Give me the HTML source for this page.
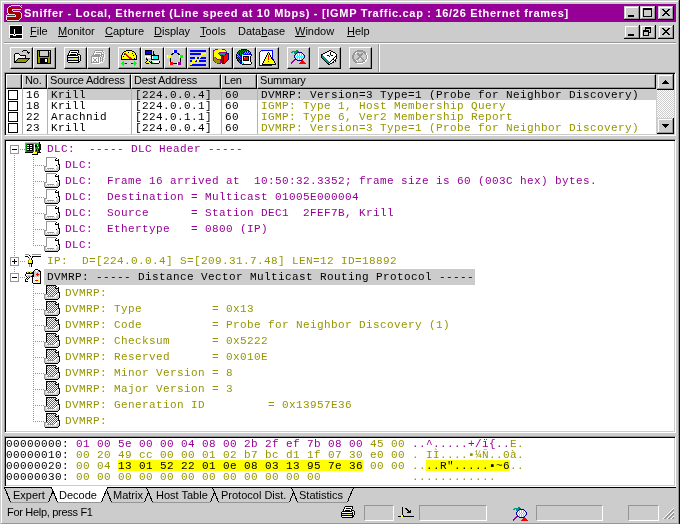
<!DOCTYPE html><html><head><meta charset="utf-8"><style>
*{margin:0;padding:0;box-sizing:border-box}
html,body{width:680px;height:524px;overflow:hidden;background:#cccccc}
body{position:relative;will-change:transform;font-family:"Liberation Sans",sans-serif;font-size:11px;color:#000}
div,svg{position:absolute}
.btn{background:#cccccc;border-top:1px solid #fff;border-left:1px solid #fff;border-right:1px solid #000;border-bottom:1px solid #000;box-shadow:inset -1px -1px 0 #969696}
.wbtn{background:#cccccc;box-shadow:inset -1px -1px 0 #000,inset 1px 1px 0 #cccccc,inset -2px -2px 0 #969696,inset 2px 2px 0 #fff}
.mono{font-family:"Liberation Mono",monospace;font-size:11.67px;white-space:pre}
.menu{top:25px;font-size:11px;white-space:pre}
.u{text-decoration:underline}
.det{font-family:"Liberation Mono",monospace;font-size:11px;letter-spacing:.4px;white-space:pre;line-height:11px;height:11px}
.lst{font-family:"Liberation Mono",monospace;font-size:11px;letter-spacing:.4px;white-space:pre;line-height:11px;height:11px}
.hdr{top:74px;height:15px;background:#cccccc;border-top:1px solid #fff;border-left:1px solid #fff;border-right:1px solid #000;border-bottom:1px solid #000;box-shadow:inset -1px -1px 0 #969696;font-size:11px;line-height:11px;padding-left:2px;letter-spacing:-0.2px;white-space:pre}
</style></head><body>
<div style="position:absolute;left:0px;top:0px;width:680px;height:1px;background:#cccccc"></div>
<div style="position:absolute;left:1px;top:1px;width:677px;height:1px;background:#fff"></div>
<div style="position:absolute;left:1px;top:1px;width:1px;height:522px;background:#fff"></div>
<div style="position:absolute;left:678px;top:1px;width:1px;height:523px;background:#969696"></div>
<div style="position:absolute;left:679px;top:0px;width:1px;height:524px;background:#000"></div>
<div style="position:absolute;left:1px;top:523px;width:678px;height:1px;background:#969696"></div>
<div style="position:absolute;left:4px;top:4px;width:672px;height:18px;background:#960096"></div>
<div style="left:24px;top:4px;height:18px;line-height:18px;color:#fff;font-weight:bold;font-size:11px;letter-spacing:.7px;white-space:pre">Sniffer - Local, Ethernet (Line speed at 10 Mbps) - [IGMP Traffic.cap : 16/26 Ethernet frames]</div>
<div class="wbtn" style="left:624px;top:6px;width:16px;height:14px"></div>
<div class="wbtn" style="left:640px;top:6px;width:16px;height:14px"></div>
<div class="wbtn" style="left:658px;top:6px;width:16px;height:14px"></div>
<div class="menu" style="left:30px"><span class="u">F</span>ile</div>
<div class="menu" style="left:58px"><span class="u">M</span>onitor</div>
<div class="menu" style="left:105px"><span class="u">C</span>apture</div>
<div class="menu" style="left:154px"><span class="u">D</span>isplay</div>
<div class="menu" style="left:200px"><span class="u">T</span>ools</div>
<div class="menu" style="left:238px">Data<span class="u">b</span>ase</div>
<div class="menu" style="left:295px"><span class="u">W</span>indow</div>
<div class="menu" style="left:347px"><span class="u">H</span>elp</div>
<div class="wbtn" style="left:624px;top:25px;width:16px;height:14px"></div>
<div class="wbtn" style="left:640px;top:25px;width:16px;height:14px"></div>
<div class="wbtn" style="left:658px;top:25px;width:16px;height:14px"></div>
<div style="position:absolute;left:4px;top:42px;width:672px;height:1px;background:#969696"></div>
<div style="position:absolute;left:4px;top:43px;width:672px;height:1px;background:#fff"></div>
<div class="btn" style="left:10px;top:47px;width:23px;height:22px"></div>
<div class="btn" style="left:33px;top:47px;width:23px;height:22px"></div>
<div class="btn" style="left:64px;top:47px;width:23px;height:22px"></div>
<div class="btn" style="left:87px;top:47px;width:23px;height:22px"></div>
<div class="btn" style="left:118px;top:47px;width:23px;height:22px"></div>
<div class="btn" style="left:141px;top:47px;width:23px;height:22px"></div>
<div class="btn" style="left:164px;top:47px;width:23px;height:22px"></div>
<div class="btn" style="left:187px;top:47px;width:23px;height:22px"></div>
<div class="btn" style="left:210px;top:47px;width:23px;height:22px"></div>
<div class="btn" style="left:233px;top:47px;width:23px;height:22px"></div>
<div class="btn" style="left:256px;top:47px;width:23px;height:22px"></div>
<div class="btn" style="left:287px;top:47px;width:23px;height:22px"></div>
<div class="btn" style="left:318px;top:47px;width:23px;height:22px"></div>
<div class="btn" style="left:349px;top:47px;width:23px;height:22px"></div>
<div style="position:absolute;left:378px;top:44px;width:1px;height:28px;background:#969696"></div>
<div style="position:absolute;left:379px;top:44px;width:1px;height:28px;background:#fff"></div>
<div style="position:absolute;left:4px;top:72px;width:672px;height:64px;background:#fff;border-top:1px solid #969696;border-left:1px solid #969696;border-bottom:1px solid #fff;border-right:1px solid #fff;box-shadow:inset 1px 1px 0 #000,inset -1px -1px 0 #cccccc"></div>
<div class="hdr" style="left:6px;width:16px"></div>
<div class="hdr" style="left:22px;width:25px">No.</div>
<div class="hdr" style="left:47px;width:84px">Source Address</div>
<div class="hdr" style="left:131px;width:90px">Dest Address</div>
<div class="hdr" style="left:221px;width:36px">Len</div>
<div class="hdr" style="left:257px;width:399px">Summary</div>
<div style="position:absolute;left:48px;top:89px;width:608px;height:11px;background:#cccccc"></div>
<div style="position:absolute;left:8px;top:90px;width:10px;height:10px;border:1px solid #000;background:#fff"></div>
<div class="lst" style="left:26px;top:90px">16</div>
<div class="lst" style="left:51px;top:90px">Krill</div>
<div class="lst" style="left:135px;top:90px">[224.0.0.4]</div>
<div class="lst" style="left:225px;top:90px">60</div>
<div class="lst" style="left:261px;top:90px;color:#000">DVMRP: Version=3 Type=1 (Probe for Neighbor Discovery)</div>
<div style="position:absolute;left:8px;top:101px;width:10px;height:10px;border:1px solid #000;background:#fff"></div>
<div class="lst" style="left:26px;top:101px">18</div>
<div class="lst" style="left:51px;top:101px">Krill</div>
<div class="lst" style="left:135px;top:101px">[224.0.0.1]</div>
<div class="lst" style="left:225px;top:101px">60</div>
<div class="lst" style="left:261px;top:101px;color:#969600">IGMP: Type 1, Host Membership Query</div>
<div style="position:absolute;left:8px;top:112px;width:10px;height:10px;border:1px solid #000;background:#fff"></div>
<div class="lst" style="left:26px;top:112px">22</div>
<div class="lst" style="left:51px;top:112px">Arachnid</div>
<div class="lst" style="left:135px;top:112px">[224.0.1.1]</div>
<div class="lst" style="left:225px;top:112px">60</div>
<div class="lst" style="left:261px;top:112px;color:#969600">IGMP: Type 6, Ver2 Membership Report</div>
<div style="position:absolute;left:8px;top:123px;width:10px;height:10px;border:1px solid #000;background:#fff"></div>
<div class="lst" style="left:26px;top:123px">23</div>
<div class="lst" style="left:51px;top:123px">Krill</div>
<div class="lst" style="left:135px;top:123px">[224.0.0.4]</div>
<div class="lst" style="left:225px;top:123px">60</div>
<div class="lst" style="left:261px;top:123px;color:#969600">DVMRP: Version=3 Type=1 (Probe for Neighbor Discovery)</div>
<div style="position:absolute;left:22px;top:89px;width:1px;height:45px;background:#b2b2b2"></div>
<div style="position:absolute;left:47px;top:89px;width:1px;height:45px;background:#b2b2b2"></div>
<div style="position:absolute;left:131px;top:89px;width:1px;height:45px;background:#b2b2b2"></div>
<div style="position:absolute;left:221px;top:89px;width:1px;height:45px;background:#b2b2b2"></div>
<div style="position:absolute;left:257px;top:89px;width:1px;height:45px;background:#b2b2b2"></div>
<div style="position:absolute;left:656px;top:74px;width:1px;height:60px;background:#cccccc"></div>
<div style="position:absolute;left:657px;top:74px;width:17px;height:60px;background-color:#fff;background-image:linear-gradient(45deg,#cccccc 25%,transparent 25%,transparent 75%,#cccccc 75%),linear-gradient(45deg,#cccccc 25%,transparent 25%,transparent 75%,#cccccc 75%);background-size:2px 2px;background-position:0 0,1px 1px"></div>
<div class="wbtn" style="left:657px;top:74px;width:17px;height:16px"></div>
<div class="wbtn" style="left:657px;top:118px;width:17px;height:16px"></div>
<svg style="left:657px;top:74px" width="17" height="16" shape-rendering="crispEdges"><path d="M8 6h1v1h1v1h1v1h1v1h-7v-1h1v-1h1v-1h1z" fill="#000"/></svg>
<svg style="left:657px;top:118px" width="17" height="16" shape-rendering="crispEdges"><path d="M5 6h7v1h-1v1h-1v1h-1v1h-1v-1h-1v-1h-1v-1h-1z" fill="#000"/></svg>
<div style="position:absolute;left:4px;top:139px;width:672px;height:294px;background:#fff;border-top:1px solid #969696;border-left:1px solid #969696;border-bottom:1px solid #fff;border-right:1px solid #fff;box-shadow:inset 1px 1px 0 #000,inset -1px -1px 0 #cccccc"></div>
<div style="position:absolute;left:14px;top:155px;width:1px;height:1px;background:#969696"></div>
<div style="position:absolute;left:14px;top:157px;width:1px;height:1px;background:#969696"></div>
<div style="position:absolute;left:14px;top:159px;width:1px;height:1px;background:#969696"></div>
<div style="position:absolute;left:14px;top:161px;width:1px;height:1px;background:#969696"></div>
<div style="position:absolute;left:14px;top:163px;width:1px;height:1px;background:#969696"></div>
<div style="position:absolute;left:14px;top:165px;width:1px;height:1px;background:#969696"></div>
<div style="position:absolute;left:14px;top:167px;width:1px;height:1px;background:#969696"></div>
<div style="position:absolute;left:14px;top:169px;width:1px;height:1px;background:#969696"></div>
<div style="position:absolute;left:14px;top:171px;width:1px;height:1px;background:#969696"></div>
<div style="position:absolute;left:14px;top:173px;width:1px;height:1px;background:#969696"></div>
<div style="position:absolute;left:14px;top:175px;width:1px;height:1px;background:#969696"></div>
<div style="position:absolute;left:14px;top:177px;width:1px;height:1px;background:#969696"></div>
<div style="position:absolute;left:14px;top:179px;width:1px;height:1px;background:#969696"></div>
<div style="position:absolute;left:14px;top:181px;width:1px;height:1px;background:#969696"></div>
<div style="position:absolute;left:14px;top:183px;width:1px;height:1px;background:#969696"></div>
<div style="position:absolute;left:14px;top:185px;width:1px;height:1px;background:#969696"></div>
<div style="position:absolute;left:14px;top:187px;width:1px;height:1px;background:#969696"></div>
<div style="position:absolute;left:14px;top:189px;width:1px;height:1px;background:#969696"></div>
<div style="position:absolute;left:14px;top:191px;width:1px;height:1px;background:#969696"></div>
<div style="position:absolute;left:14px;top:193px;width:1px;height:1px;background:#969696"></div>
<div style="position:absolute;left:14px;top:195px;width:1px;height:1px;background:#969696"></div>
<div style="position:absolute;left:14px;top:197px;width:1px;height:1px;background:#969696"></div>
<div style="position:absolute;left:14px;top:199px;width:1px;height:1px;background:#969696"></div>
<div style="position:absolute;left:14px;top:201px;width:1px;height:1px;background:#969696"></div>
<div style="position:absolute;left:14px;top:203px;width:1px;height:1px;background:#969696"></div>
<div style="position:absolute;left:14px;top:205px;width:1px;height:1px;background:#969696"></div>
<div style="position:absolute;left:14px;top:207px;width:1px;height:1px;background:#969696"></div>
<div style="position:absolute;left:14px;top:209px;width:1px;height:1px;background:#969696"></div>
<div style="position:absolute;left:14px;top:211px;width:1px;height:1px;background:#969696"></div>
<div style="position:absolute;left:14px;top:213px;width:1px;height:1px;background:#969696"></div>
<div style="position:absolute;left:14px;top:215px;width:1px;height:1px;background:#969696"></div>
<div style="position:absolute;left:14px;top:217px;width:1px;height:1px;background:#969696"></div>
<div style="position:absolute;left:14px;top:219px;width:1px;height:1px;background:#969696"></div>
<div style="position:absolute;left:14px;top:221px;width:1px;height:1px;background:#969696"></div>
<div style="position:absolute;left:14px;top:223px;width:1px;height:1px;background:#969696"></div>
<div style="position:absolute;left:14px;top:225px;width:1px;height:1px;background:#969696"></div>
<div style="position:absolute;left:14px;top:227px;width:1px;height:1px;background:#969696"></div>
<div style="position:absolute;left:14px;top:229px;width:1px;height:1px;background:#969696"></div>
<div style="position:absolute;left:14px;top:231px;width:1px;height:1px;background:#969696"></div>
<div style="position:absolute;left:14px;top:233px;width:1px;height:1px;background:#969696"></div>
<div style="position:absolute;left:14px;top:235px;width:1px;height:1px;background:#969696"></div>
<div style="position:absolute;left:14px;top:237px;width:1px;height:1px;background:#969696"></div>
<div style="position:absolute;left:14px;top:239px;width:1px;height:1px;background:#969696"></div>
<div style="position:absolute;left:14px;top:241px;width:1px;height:1px;background:#969696"></div>
<div style="position:absolute;left:14px;top:243px;width:1px;height:1px;background:#969696"></div>
<div style="position:absolute;left:14px;top:245px;width:1px;height:1px;background:#969696"></div>
<div style="position:absolute;left:14px;top:247px;width:1px;height:1px;background:#969696"></div>
<div style="position:absolute;left:14px;top:249px;width:1px;height:1px;background:#969696"></div>
<div style="position:absolute;left:14px;top:251px;width:1px;height:1px;background:#969696"></div>
<div style="position:absolute;left:14px;top:253px;width:1px;height:1px;background:#969696"></div>
<div style="position:absolute;left:14px;top:255px;width:1px;height:1px;background:#969696"></div>
<div style="position:absolute;left:14px;top:257px;width:1px;height:1px;background:#969696"></div>
<div style="position:absolute;left:14px;top:259px;width:1px;height:1px;background:#969696"></div>
<div style="position:absolute;left:14px;top:261px;width:1px;height:1px;background:#969696"></div>
<div style="position:absolute;left:14px;top:263px;width:1px;height:1px;background:#969696"></div>
<div style="position:absolute;left:14px;top:265px;width:1px;height:1px;background:#969696"></div>
<div style="position:absolute;left:14px;top:267px;width:1px;height:1px;background:#969696"></div>
<div style="position:absolute;left:14px;top:269px;width:1px;height:1px;background:#969696"></div>
<div style="position:absolute;left:14px;top:271px;width:1px;height:1px;background:#969696"></div>
<div style="position:absolute;left:33px;top:157px;width:1px;height:1px;background:#969696"></div>
<div style="position:absolute;left:33px;top:159px;width:1px;height:1px;background:#969696"></div>
<div style="position:absolute;left:33px;top:161px;width:1px;height:1px;background:#969696"></div>
<div style="position:absolute;left:33px;top:163px;width:1px;height:1px;background:#969696"></div>
<div style="position:absolute;left:33px;top:165px;width:1px;height:1px;background:#969696"></div>
<div style="position:absolute;left:33px;top:167px;width:1px;height:1px;background:#969696"></div>
<div style="position:absolute;left:33px;top:169px;width:1px;height:1px;background:#969696"></div>
<div style="position:absolute;left:33px;top:171px;width:1px;height:1px;background:#969696"></div>
<div style="position:absolute;left:33px;top:173px;width:1px;height:1px;background:#969696"></div>
<div style="position:absolute;left:33px;top:175px;width:1px;height:1px;background:#969696"></div>
<div style="position:absolute;left:33px;top:177px;width:1px;height:1px;background:#969696"></div>
<div style="position:absolute;left:33px;top:179px;width:1px;height:1px;background:#969696"></div>
<div style="position:absolute;left:33px;top:181px;width:1px;height:1px;background:#969696"></div>
<div style="position:absolute;left:33px;top:183px;width:1px;height:1px;background:#969696"></div>
<div style="position:absolute;left:33px;top:185px;width:1px;height:1px;background:#969696"></div>
<div style="position:absolute;left:33px;top:187px;width:1px;height:1px;background:#969696"></div>
<div style="position:absolute;left:33px;top:189px;width:1px;height:1px;background:#969696"></div>
<div style="position:absolute;left:33px;top:191px;width:1px;height:1px;background:#969696"></div>
<div style="position:absolute;left:33px;top:193px;width:1px;height:1px;background:#969696"></div>
<div style="position:absolute;left:33px;top:195px;width:1px;height:1px;background:#969696"></div>
<div style="position:absolute;left:33px;top:197px;width:1px;height:1px;background:#969696"></div>
<div style="position:absolute;left:33px;top:199px;width:1px;height:1px;background:#969696"></div>
<div style="position:absolute;left:33px;top:201px;width:1px;height:1px;background:#969696"></div>
<div style="position:absolute;left:33px;top:203px;width:1px;height:1px;background:#969696"></div>
<div style="position:absolute;left:33px;top:205px;width:1px;height:1px;background:#969696"></div>
<div style="position:absolute;left:33px;top:207px;width:1px;height:1px;background:#969696"></div>
<div style="position:absolute;left:33px;top:209px;width:1px;height:1px;background:#969696"></div>
<div style="position:absolute;left:33px;top:211px;width:1px;height:1px;background:#969696"></div>
<div style="position:absolute;left:33px;top:213px;width:1px;height:1px;background:#969696"></div>
<div style="position:absolute;left:33px;top:215px;width:1px;height:1px;background:#969696"></div>
<div style="position:absolute;left:33px;top:217px;width:1px;height:1px;background:#969696"></div>
<div style="position:absolute;left:33px;top:219px;width:1px;height:1px;background:#969696"></div>
<div style="position:absolute;left:33px;top:221px;width:1px;height:1px;background:#969696"></div>
<div style="position:absolute;left:33px;top:223px;width:1px;height:1px;background:#969696"></div>
<div style="position:absolute;left:33px;top:225px;width:1px;height:1px;background:#969696"></div>
<div style="position:absolute;left:33px;top:227px;width:1px;height:1px;background:#969696"></div>
<div style="position:absolute;left:33px;top:229px;width:1px;height:1px;background:#969696"></div>
<div style="position:absolute;left:33px;top:231px;width:1px;height:1px;background:#969696"></div>
<div style="position:absolute;left:33px;top:233px;width:1px;height:1px;background:#969696"></div>
<div style="position:absolute;left:33px;top:235px;width:1px;height:1px;background:#969696"></div>
<div style="position:absolute;left:33px;top:237px;width:1px;height:1px;background:#969696"></div>
<div style="position:absolute;left:33px;top:239px;width:1px;height:1px;background:#969696"></div>
<div style="position:absolute;left:33px;top:241px;width:1px;height:1px;background:#969696"></div>
<div style="position:absolute;left:33px;top:243px;width:1px;height:1px;background:#969696"></div>
<div style="position:absolute;left:33px;top:245px;width:1px;height:1px;background:#969696"></div>
<div style="position:absolute;left:33px;top:285px;width:1px;height:1px;background:#969696"></div>
<div style="position:absolute;left:33px;top:287px;width:1px;height:1px;background:#969696"></div>
<div style="position:absolute;left:33px;top:289px;width:1px;height:1px;background:#969696"></div>
<div style="position:absolute;left:33px;top:291px;width:1px;height:1px;background:#969696"></div>
<div style="position:absolute;left:33px;top:293px;width:1px;height:1px;background:#969696"></div>
<div style="position:absolute;left:33px;top:295px;width:1px;height:1px;background:#969696"></div>
<div style="position:absolute;left:33px;top:297px;width:1px;height:1px;background:#969696"></div>
<div style="position:absolute;left:33px;top:299px;width:1px;height:1px;background:#969696"></div>
<div style="position:absolute;left:33px;top:301px;width:1px;height:1px;background:#969696"></div>
<div style="position:absolute;left:33px;top:303px;width:1px;height:1px;background:#969696"></div>
<div style="position:absolute;left:33px;top:305px;width:1px;height:1px;background:#969696"></div>
<div style="position:absolute;left:33px;top:307px;width:1px;height:1px;background:#969696"></div>
<div style="position:absolute;left:33px;top:309px;width:1px;height:1px;background:#969696"></div>
<div style="position:absolute;left:33px;top:311px;width:1px;height:1px;background:#969696"></div>
<div style="position:absolute;left:33px;top:313px;width:1px;height:1px;background:#969696"></div>
<div style="position:absolute;left:33px;top:315px;width:1px;height:1px;background:#969696"></div>
<div style="position:absolute;left:33px;top:317px;width:1px;height:1px;background:#969696"></div>
<div style="position:absolute;left:33px;top:319px;width:1px;height:1px;background:#969696"></div>
<div style="position:absolute;left:33px;top:321px;width:1px;height:1px;background:#969696"></div>
<div style="position:absolute;left:33px;top:323px;width:1px;height:1px;background:#969696"></div>
<div style="position:absolute;left:33px;top:325px;width:1px;height:1px;background:#969696"></div>
<div style="position:absolute;left:33px;top:327px;width:1px;height:1px;background:#969696"></div>
<div style="position:absolute;left:33px;top:329px;width:1px;height:1px;background:#969696"></div>
<div style="position:absolute;left:33px;top:331px;width:1px;height:1px;background:#969696"></div>
<div style="position:absolute;left:33px;top:333px;width:1px;height:1px;background:#969696"></div>
<div style="position:absolute;left:33px;top:335px;width:1px;height:1px;background:#969696"></div>
<div style="position:absolute;left:33px;top:337px;width:1px;height:1px;background:#969696"></div>
<div style="position:absolute;left:33px;top:339px;width:1px;height:1px;background:#969696"></div>
<div style="position:absolute;left:33px;top:341px;width:1px;height:1px;background:#969696"></div>
<div style="position:absolute;left:33px;top:343px;width:1px;height:1px;background:#969696"></div>
<div style="position:absolute;left:33px;top:345px;width:1px;height:1px;background:#969696"></div>
<div style="position:absolute;left:33px;top:347px;width:1px;height:1px;background:#969696"></div>
<div style="position:absolute;left:33px;top:349px;width:1px;height:1px;background:#969696"></div>
<div style="position:absolute;left:33px;top:351px;width:1px;height:1px;background:#969696"></div>
<div style="position:absolute;left:33px;top:353px;width:1px;height:1px;background:#969696"></div>
<div style="position:absolute;left:33px;top:355px;width:1px;height:1px;background:#969696"></div>
<div style="position:absolute;left:33px;top:357px;width:1px;height:1px;background:#969696"></div>
<div style="position:absolute;left:33px;top:359px;width:1px;height:1px;background:#969696"></div>
<div style="position:absolute;left:33px;top:361px;width:1px;height:1px;background:#969696"></div>
<div style="position:absolute;left:33px;top:363px;width:1px;height:1px;background:#969696"></div>
<div style="position:absolute;left:33px;top:365px;width:1px;height:1px;background:#969696"></div>
<div style="position:absolute;left:33px;top:367px;width:1px;height:1px;background:#969696"></div>
<div style="position:absolute;left:33px;top:369px;width:1px;height:1px;background:#969696"></div>
<div style="position:absolute;left:33px;top:371px;width:1px;height:1px;background:#969696"></div>
<div style="position:absolute;left:33px;top:373px;width:1px;height:1px;background:#969696"></div>
<div style="position:absolute;left:33px;top:375px;width:1px;height:1px;background:#969696"></div>
<div style="position:absolute;left:33px;top:377px;width:1px;height:1px;background:#969696"></div>
<div style="position:absolute;left:33px;top:379px;width:1px;height:1px;background:#969696"></div>
<div style="position:absolute;left:33px;top:381px;width:1px;height:1px;background:#969696"></div>
<div style="position:absolute;left:33px;top:383px;width:1px;height:1px;background:#969696"></div>
<div style="position:absolute;left:33px;top:385px;width:1px;height:1px;background:#969696"></div>
<div style="position:absolute;left:33px;top:387px;width:1px;height:1px;background:#969696"></div>
<div style="position:absolute;left:33px;top:389px;width:1px;height:1px;background:#969696"></div>
<div style="position:absolute;left:33px;top:391px;width:1px;height:1px;background:#969696"></div>
<div style="position:absolute;left:33px;top:393px;width:1px;height:1px;background:#969696"></div>
<div style="position:absolute;left:33px;top:395px;width:1px;height:1px;background:#969696"></div>
<div style="position:absolute;left:33px;top:397px;width:1px;height:1px;background:#969696"></div>
<div style="position:absolute;left:33px;top:399px;width:1px;height:1px;background:#969696"></div>
<div style="position:absolute;left:33px;top:401px;width:1px;height:1px;background:#969696"></div>
<div style="position:absolute;left:33px;top:403px;width:1px;height:1px;background:#969696"></div>
<div style="position:absolute;left:33px;top:405px;width:1px;height:1px;background:#969696"></div>
<div style="position:absolute;left:33px;top:407px;width:1px;height:1px;background:#969696"></div>
<div style="position:absolute;left:33px;top:409px;width:1px;height:1px;background:#969696"></div>
<div style="position:absolute;left:33px;top:411px;width:1px;height:1px;background:#969696"></div>
<div style="position:absolute;left:33px;top:413px;width:1px;height:1px;background:#969696"></div>
<div style="position:absolute;left:33px;top:415px;width:1px;height:1px;background:#969696"></div>
<div style="position:absolute;left:33px;top:417px;width:1px;height:1px;background:#969696"></div>
<div style="position:absolute;left:33px;top:419px;width:1px;height:1px;background:#969696"></div>
<div style="position:absolute;left:33px;top:421px;width:1px;height:1px;background:#969696"></div>
<div style="position:absolute;left:20px;top:149px;width:1px;height:1px;background:#969696"></div>
<div style="position:absolute;left:22px;top:149px;width:1px;height:1px;background:#969696"></div>
<div style="position:absolute;left:24px;top:149px;width:1px;height:1px;background:#969696"></div>
<div style="position:absolute;left:20px;top:261px;width:1px;height:1px;background:#969696"></div>
<div style="position:absolute;left:22px;top:261px;width:1px;height:1px;background:#969696"></div>
<div style="position:absolute;left:24px;top:261px;width:1px;height:1px;background:#969696"></div>
<div style="position:absolute;left:20px;top:277px;width:1px;height:1px;background:#969696"></div>
<div style="position:absolute;left:22px;top:277px;width:1px;height:1px;background:#969696"></div>
<div style="position:absolute;left:24px;top:277px;width:1px;height:1px;background:#969696"></div>
<div style="position:absolute;left:35px;top:165px;width:1px;height:1px;background:#969696"></div>
<div style="position:absolute;left:37px;top:165px;width:1px;height:1px;background:#969696"></div>
<div style="position:absolute;left:39px;top:165px;width:1px;height:1px;background:#969696"></div>
<div style="position:absolute;left:41px;top:165px;width:1px;height:1px;background:#969696"></div>
<div style="position:absolute;left:43px;top:165px;width:1px;height:1px;background:#969696"></div>
<div style="position:absolute;left:35px;top:181px;width:1px;height:1px;background:#969696"></div>
<div style="position:absolute;left:37px;top:181px;width:1px;height:1px;background:#969696"></div>
<div style="position:absolute;left:39px;top:181px;width:1px;height:1px;background:#969696"></div>
<div style="position:absolute;left:41px;top:181px;width:1px;height:1px;background:#969696"></div>
<div style="position:absolute;left:43px;top:181px;width:1px;height:1px;background:#969696"></div>
<div style="position:absolute;left:35px;top:197px;width:1px;height:1px;background:#969696"></div>
<div style="position:absolute;left:37px;top:197px;width:1px;height:1px;background:#969696"></div>
<div style="position:absolute;left:39px;top:197px;width:1px;height:1px;background:#969696"></div>
<div style="position:absolute;left:41px;top:197px;width:1px;height:1px;background:#969696"></div>
<div style="position:absolute;left:43px;top:197px;width:1px;height:1px;background:#969696"></div>
<div style="position:absolute;left:35px;top:213px;width:1px;height:1px;background:#969696"></div>
<div style="position:absolute;left:37px;top:213px;width:1px;height:1px;background:#969696"></div>
<div style="position:absolute;left:39px;top:213px;width:1px;height:1px;background:#969696"></div>
<div style="position:absolute;left:41px;top:213px;width:1px;height:1px;background:#969696"></div>
<div style="position:absolute;left:43px;top:213px;width:1px;height:1px;background:#969696"></div>
<div style="position:absolute;left:35px;top:229px;width:1px;height:1px;background:#969696"></div>
<div style="position:absolute;left:37px;top:229px;width:1px;height:1px;background:#969696"></div>
<div style="position:absolute;left:39px;top:229px;width:1px;height:1px;background:#969696"></div>
<div style="position:absolute;left:41px;top:229px;width:1px;height:1px;background:#969696"></div>
<div style="position:absolute;left:43px;top:229px;width:1px;height:1px;background:#969696"></div>
<div style="position:absolute;left:35px;top:245px;width:1px;height:1px;background:#969696"></div>
<div style="position:absolute;left:37px;top:245px;width:1px;height:1px;background:#969696"></div>
<div style="position:absolute;left:39px;top:245px;width:1px;height:1px;background:#969696"></div>
<div style="position:absolute;left:41px;top:245px;width:1px;height:1px;background:#969696"></div>
<div style="position:absolute;left:43px;top:245px;width:1px;height:1px;background:#969696"></div>
<div style="position:absolute;left:35px;top:293px;width:1px;height:1px;background:#969696"></div>
<div style="position:absolute;left:37px;top:293px;width:1px;height:1px;background:#969696"></div>
<div style="position:absolute;left:39px;top:293px;width:1px;height:1px;background:#969696"></div>
<div style="position:absolute;left:41px;top:293px;width:1px;height:1px;background:#969696"></div>
<div style="position:absolute;left:43px;top:293px;width:1px;height:1px;background:#969696"></div>
<div style="position:absolute;left:35px;top:309px;width:1px;height:1px;background:#969696"></div>
<div style="position:absolute;left:37px;top:309px;width:1px;height:1px;background:#969696"></div>
<div style="position:absolute;left:39px;top:309px;width:1px;height:1px;background:#969696"></div>
<div style="position:absolute;left:41px;top:309px;width:1px;height:1px;background:#969696"></div>
<div style="position:absolute;left:43px;top:309px;width:1px;height:1px;background:#969696"></div>
<div style="position:absolute;left:35px;top:325px;width:1px;height:1px;background:#969696"></div>
<div style="position:absolute;left:37px;top:325px;width:1px;height:1px;background:#969696"></div>
<div style="position:absolute;left:39px;top:325px;width:1px;height:1px;background:#969696"></div>
<div style="position:absolute;left:41px;top:325px;width:1px;height:1px;background:#969696"></div>
<div style="position:absolute;left:43px;top:325px;width:1px;height:1px;background:#969696"></div>
<div style="position:absolute;left:35px;top:341px;width:1px;height:1px;background:#969696"></div>
<div style="position:absolute;left:37px;top:341px;width:1px;height:1px;background:#969696"></div>
<div style="position:absolute;left:39px;top:341px;width:1px;height:1px;background:#969696"></div>
<div style="position:absolute;left:41px;top:341px;width:1px;height:1px;background:#969696"></div>
<div style="position:absolute;left:43px;top:341px;width:1px;height:1px;background:#969696"></div>
<div style="position:absolute;left:35px;top:357px;width:1px;height:1px;background:#969696"></div>
<div style="position:absolute;left:37px;top:357px;width:1px;height:1px;background:#969696"></div>
<div style="position:absolute;left:39px;top:357px;width:1px;height:1px;background:#969696"></div>
<div style="position:absolute;left:41px;top:357px;width:1px;height:1px;background:#969696"></div>
<div style="position:absolute;left:43px;top:357px;width:1px;height:1px;background:#969696"></div>
<div style="position:absolute;left:35px;top:373px;width:1px;height:1px;background:#969696"></div>
<div style="position:absolute;left:37px;top:373px;width:1px;height:1px;background:#969696"></div>
<div style="position:absolute;left:39px;top:373px;width:1px;height:1px;background:#969696"></div>
<div style="position:absolute;left:41px;top:373px;width:1px;height:1px;background:#969696"></div>
<div style="position:absolute;left:43px;top:373px;width:1px;height:1px;background:#969696"></div>
<div style="position:absolute;left:35px;top:389px;width:1px;height:1px;background:#969696"></div>
<div style="position:absolute;left:37px;top:389px;width:1px;height:1px;background:#969696"></div>
<div style="position:absolute;left:39px;top:389px;width:1px;height:1px;background:#969696"></div>
<div style="position:absolute;left:41px;top:389px;width:1px;height:1px;background:#969696"></div>
<div style="position:absolute;left:43px;top:389px;width:1px;height:1px;background:#969696"></div>
<div style="position:absolute;left:35px;top:405px;width:1px;height:1px;background:#969696"></div>
<div style="position:absolute;left:37px;top:405px;width:1px;height:1px;background:#969696"></div>
<div style="position:absolute;left:39px;top:405px;width:1px;height:1px;background:#969696"></div>
<div style="position:absolute;left:41px;top:405px;width:1px;height:1px;background:#969696"></div>
<div style="position:absolute;left:43px;top:405px;width:1px;height:1px;background:#969696"></div>
<div style="position:absolute;left:35px;top:421px;width:1px;height:1px;background:#969696"></div>
<div style="position:absolute;left:37px;top:421px;width:1px;height:1px;background:#969696"></div>
<div style="position:absolute;left:39px;top:421px;width:1px;height:1px;background:#969696"></div>
<div style="position:absolute;left:41px;top:421px;width:1px;height:1px;background:#969696"></div>
<div style="position:absolute;left:43px;top:421px;width:1px;height:1px;background:#969696"></div>
<div style="position:absolute;left:44px;top:269px;width:431px;height:16px;background:#cccccc"></div>
<div class="det" style="left:47px;top:144px;color:#960096">DLC:  ----- DLC Header -----</div>
<div class="det" style="left:65px;top:160px;color:#960096">DLC:</div>
<svg style="left:43px;top:157px;" width="17" height="15" shape-rendering="crispEdges"><rect x="3" y="0" width="10" height="1" fill="#969696"/><rect x="3" y="1" width="1" height="1" fill="#969696"/><rect x="4" y="1" width="9" height="1" fill="#fff"/><rect x="13" y="1" width="1" height="1" fill="#000"/><rect x="14" y="1" width="1" height="1" fill="#fff"/><rect x="3" y="2" width="1" height="1" fill="#969696"/><rect x="4" y="2" width="8" height="1" fill="#fff"/><rect x="12" y="2" width="1" height="1" fill="#000"/><rect x="13" y="2" width="2" height="1" fill="#fff"/><rect x="15" y="2" width="1" height="1" fill="#000"/><rect x="3" y="3" width="1" height="1" fill="#969696"/><rect x="4" y="3" width="8" height="1" fill="#fff"/><rect x="12" y="3" width="4" height="1" fill="#000"/><rect x="3" y="4" width="1" height="1" fill="#969696"/><rect x="4" y="4" width="11" height="1" fill="#fff"/><rect x="15" y="4" width="1" height="1" fill="#000"/><rect x="3" y="5" width="1" height="1" fill="#969696"/><rect x="4" y="5" width="11" height="1" fill="#fff"/><rect x="15" y="5" width="1" height="1" fill="#000"/><rect x="3" y="6" width="1" height="1" fill="#969696"/><rect x="4" y="6" width="11" height="1" fill="#fff"/><rect x="15" y="6" width="1" height="1" fill="#000"/><rect x="3" y="7" width="1" height="1" fill="#969696"/><rect x="4" y="7" width="11" height="1" fill="#fff"/><rect x="15" y="7" width="2" height="1" fill="#000"/><rect x="0" y="8" width="1" height="1" fill="#969696"/><rect x="3" y="8" width="1" height="1" fill="#969696"/><rect x="4" y="8" width="9" height="1" fill="#fff"/><rect x="13" y="8" width="1" height="1" fill="#000"/><rect x="14" y="8" width="2" height="1" fill="#fff"/><rect x="16" y="8" width="1" height="1" fill="#000"/><rect x="1" y="9" width="3" height="1" fill="#969696"/><rect x="4" y="9" width="10" height="1" fill="#fff"/><rect x="14" y="9" width="1" height="1" fill="#cccccc"/><rect x="15" y="9" width="1" height="1" fill="#fff"/><rect x="16" y="9" width="1" height="1" fill="#000"/><rect x="1" y="10" width="1" height="1" fill="#969696"/><rect x="2" y="10" width="1" height="1" fill="#cccccc"/><rect x="3" y="10" width="11" height="1" fill="#fff"/><rect x="14" y="10" width="2" height="1" fill="#cccccc"/><rect x="16" y="10" width="1" height="1" fill="#000"/><rect x="1" y="11" width="1" height="1" fill="#969696"/><rect x="2" y="11" width="1" height="1" fill="#cccccc"/><rect x="3" y="11" width="1" height="1" fill="#fff"/><rect x="4" y="11" width="7" height="1" fill="#969696"/><rect x="11" y="11" width="2" height="1" fill="#fff"/><rect x="13" y="11" width="3" height="1" fill="#cccccc"/><rect x="16" y="11" width="1" height="1" fill="#000"/><rect x="1" y="12" width="1" height="1" fill="#969696"/><rect x="2" y="12" width="2" height="1" fill="#cccccc"/><rect x="4" y="12" width="1" height="1" fill="#fff"/><rect x="5" y="12" width="1" height="1" fill="#cccccc"/><rect x="6" y="12" width="1" height="1" fill="#fff"/><rect x="7" y="12" width="1" height="1" fill="#cccccc"/><rect x="8" y="12" width="1" height="1" fill="#fff"/><rect x="9" y="12" width="1" height="1" fill="#cccccc"/><rect x="10" y="12" width="1" height="1" fill="#fff"/><rect x="11" y="12" width="1" height="1" fill="#cccccc"/><rect x="12" y="12" width="1" height="1" fill="#fff"/><rect x="13" y="12" width="3" height="1" fill="#cccccc"/><rect x="16" y="12" width="1" height="1" fill="#000"/><rect x="1" y="13" width="1" height="1" fill="#969696"/><rect x="2" y="13" width="13" height="1" fill="#cccccc"/><rect x="15" y="13" width="1" height="1" fill="#000"/><rect x="2" y="14" width="13" height="1" fill="#000"/></svg>
<div class="det" style="left:65px;top:176px;color:#960096">DLC:  Frame 16 arrived at  10:50:32.3352; frame size is 60 (003C hex) bytes.</div>
<svg style="left:43px;top:173px;" width="17" height="15" shape-rendering="crispEdges"><rect x="3" y="0" width="10" height="1" fill="#969696"/><rect x="3" y="1" width="1" height="1" fill="#969696"/><rect x="4" y="1" width="9" height="1" fill="#fff"/><rect x="13" y="1" width="1" height="1" fill="#000"/><rect x="14" y="1" width="1" height="1" fill="#fff"/><rect x="3" y="2" width="1" height="1" fill="#969696"/><rect x="4" y="2" width="8" height="1" fill="#fff"/><rect x="12" y="2" width="1" height="1" fill="#000"/><rect x="13" y="2" width="2" height="1" fill="#fff"/><rect x="15" y="2" width="1" height="1" fill="#000"/><rect x="3" y="3" width="1" height="1" fill="#969696"/><rect x="4" y="3" width="8" height="1" fill="#fff"/><rect x="12" y="3" width="4" height="1" fill="#000"/><rect x="3" y="4" width="1" height="1" fill="#969696"/><rect x="4" y="4" width="11" height="1" fill="#fff"/><rect x="15" y="4" width="1" height="1" fill="#000"/><rect x="3" y="5" width="1" height="1" fill="#969696"/><rect x="4" y="5" width="11" height="1" fill="#fff"/><rect x="15" y="5" width="1" height="1" fill="#000"/><rect x="3" y="6" width="1" height="1" fill="#969696"/><rect x="4" y="6" width="11" height="1" fill="#fff"/><rect x="15" y="6" width="1" height="1" fill="#000"/><rect x="3" y="7" width="1" height="1" fill="#969696"/><rect x="4" y="7" width="11" height="1" fill="#fff"/><rect x="15" y="7" width="2" height="1" fill="#000"/><rect x="0" y="8" width="1" height="1" fill="#969696"/><rect x="3" y="8" width="1" height="1" fill="#969696"/><rect x="4" y="8" width="9" height="1" fill="#fff"/><rect x="13" y="8" width="1" height="1" fill="#000"/><rect x="14" y="8" width="2" height="1" fill="#fff"/><rect x="16" y="8" width="1" height="1" fill="#000"/><rect x="1" y="9" width="3" height="1" fill="#969696"/><rect x="4" y="9" width="10" height="1" fill="#fff"/><rect x="14" y="9" width="1" height="1" fill="#cccccc"/><rect x="15" y="9" width="1" height="1" fill="#fff"/><rect x="16" y="9" width="1" height="1" fill="#000"/><rect x="1" y="10" width="1" height="1" fill="#969696"/><rect x="2" y="10" width="1" height="1" fill="#cccccc"/><rect x="3" y="10" width="11" height="1" fill="#fff"/><rect x="14" y="10" width="2" height="1" fill="#cccccc"/><rect x="16" y="10" width="1" height="1" fill="#000"/><rect x="1" y="11" width="1" height="1" fill="#969696"/><rect x="2" y="11" width="1" height="1" fill="#cccccc"/><rect x="3" y="11" width="1" height="1" fill="#fff"/><rect x="4" y="11" width="7" height="1" fill="#969696"/><rect x="11" y="11" width="2" height="1" fill="#fff"/><rect x="13" y="11" width="3" height="1" fill="#cccccc"/><rect x="16" y="11" width="1" height="1" fill="#000"/><rect x="1" y="12" width="1" height="1" fill="#969696"/><rect x="2" y="12" width="2" height="1" fill="#cccccc"/><rect x="4" y="12" width="1" height="1" fill="#fff"/><rect x="5" y="12" width="1" height="1" fill="#cccccc"/><rect x="6" y="12" width="1" height="1" fill="#fff"/><rect x="7" y="12" width="1" height="1" fill="#cccccc"/><rect x="8" y="12" width="1" height="1" fill="#fff"/><rect x="9" y="12" width="1" height="1" fill="#cccccc"/><rect x="10" y="12" width="1" height="1" fill="#fff"/><rect x="11" y="12" width="1" height="1" fill="#cccccc"/><rect x="12" y="12" width="1" height="1" fill="#fff"/><rect x="13" y="12" width="3" height="1" fill="#cccccc"/><rect x="16" y="12" width="1" height="1" fill="#000"/><rect x="1" y="13" width="1" height="1" fill="#969696"/><rect x="2" y="13" width="13" height="1" fill="#cccccc"/><rect x="15" y="13" width="1" height="1" fill="#000"/><rect x="2" y="14" width="13" height="1" fill="#000"/></svg>
<div class="det" style="left:65px;top:192px;color:#960096">DLC:  Destination = Multicast 01005E000004</div>
<svg style="left:43px;top:189px;" width="17" height="15" shape-rendering="crispEdges"><rect x="3" y="0" width="10" height="1" fill="#969696"/><rect x="3" y="1" width="1" height="1" fill="#969696"/><rect x="4" y="1" width="9" height="1" fill="#fff"/><rect x="13" y="1" width="1" height="1" fill="#000"/><rect x="14" y="1" width="1" height="1" fill="#fff"/><rect x="3" y="2" width="1" height="1" fill="#969696"/><rect x="4" y="2" width="8" height="1" fill="#fff"/><rect x="12" y="2" width="1" height="1" fill="#000"/><rect x="13" y="2" width="2" height="1" fill="#fff"/><rect x="15" y="2" width="1" height="1" fill="#000"/><rect x="3" y="3" width="1" height="1" fill="#969696"/><rect x="4" y="3" width="8" height="1" fill="#fff"/><rect x="12" y="3" width="4" height="1" fill="#000"/><rect x="3" y="4" width="1" height="1" fill="#969696"/><rect x="4" y="4" width="11" height="1" fill="#fff"/><rect x="15" y="4" width="1" height="1" fill="#000"/><rect x="3" y="5" width="1" height="1" fill="#969696"/><rect x="4" y="5" width="11" height="1" fill="#fff"/><rect x="15" y="5" width="1" height="1" fill="#000"/><rect x="3" y="6" width="1" height="1" fill="#969696"/><rect x="4" y="6" width="11" height="1" fill="#fff"/><rect x="15" y="6" width="1" height="1" fill="#000"/><rect x="3" y="7" width="1" height="1" fill="#969696"/><rect x="4" y="7" width="11" height="1" fill="#fff"/><rect x="15" y="7" width="2" height="1" fill="#000"/><rect x="0" y="8" width="1" height="1" fill="#969696"/><rect x="3" y="8" width="1" height="1" fill="#969696"/><rect x="4" y="8" width="9" height="1" fill="#fff"/><rect x="13" y="8" width="1" height="1" fill="#000"/><rect x="14" y="8" width="2" height="1" fill="#fff"/><rect x="16" y="8" width="1" height="1" fill="#000"/><rect x="1" y="9" width="3" height="1" fill="#969696"/><rect x="4" y="9" width="10" height="1" fill="#fff"/><rect x="14" y="9" width="1" height="1" fill="#cccccc"/><rect x="15" y="9" width="1" height="1" fill="#fff"/><rect x="16" y="9" width="1" height="1" fill="#000"/><rect x="1" y="10" width="1" height="1" fill="#969696"/><rect x="2" y="10" width="1" height="1" fill="#cccccc"/><rect x="3" y="10" width="11" height="1" fill="#fff"/><rect x="14" y="10" width="2" height="1" fill="#cccccc"/><rect x="16" y="10" width="1" height="1" fill="#000"/><rect x="1" y="11" width="1" height="1" fill="#969696"/><rect x="2" y="11" width="1" height="1" fill="#cccccc"/><rect x="3" y="11" width="1" height="1" fill="#fff"/><rect x="4" y="11" width="7" height="1" fill="#969696"/><rect x="11" y="11" width="2" height="1" fill="#fff"/><rect x="13" y="11" width="3" height="1" fill="#cccccc"/><rect x="16" y="11" width="1" height="1" fill="#000"/><rect x="1" y="12" width="1" height="1" fill="#969696"/><rect x="2" y="12" width="2" height="1" fill="#cccccc"/><rect x="4" y="12" width="1" height="1" fill="#fff"/><rect x="5" y="12" width="1" height="1" fill="#cccccc"/><rect x="6" y="12" width="1" height="1" fill="#fff"/><rect x="7" y="12" width="1" height="1" fill="#cccccc"/><rect x="8" y="12" width="1" height="1" fill="#fff"/><rect x="9" y="12" width="1" height="1" fill="#cccccc"/><rect x="10" y="12" width="1" height="1" fill="#fff"/><rect x="11" y="12" width="1" height="1" fill="#cccccc"/><rect x="12" y="12" width="1" height="1" fill="#fff"/><rect x="13" y="12" width="3" height="1" fill="#cccccc"/><rect x="16" y="12" width="1" height="1" fill="#000"/><rect x="1" y="13" width="1" height="1" fill="#969696"/><rect x="2" y="13" width="13" height="1" fill="#cccccc"/><rect x="15" y="13" width="1" height="1" fill="#000"/><rect x="2" y="14" width="13" height="1" fill="#000"/></svg>
<div class="det" style="left:65px;top:208px;color:#960096">DLC:  Source      = Station DEC1  2FEF7B, Krill</div>
<svg style="left:43px;top:205px;" width="17" height="15" shape-rendering="crispEdges"><rect x="3" y="0" width="10" height="1" fill="#969696"/><rect x="3" y="1" width="1" height="1" fill="#969696"/><rect x="4" y="1" width="9" height="1" fill="#fff"/><rect x="13" y="1" width="1" height="1" fill="#000"/><rect x="14" y="1" width="1" height="1" fill="#fff"/><rect x="3" y="2" width="1" height="1" fill="#969696"/><rect x="4" y="2" width="8" height="1" fill="#fff"/><rect x="12" y="2" width="1" height="1" fill="#000"/><rect x="13" y="2" width="2" height="1" fill="#fff"/><rect x="15" y="2" width="1" height="1" fill="#000"/><rect x="3" y="3" width="1" height="1" fill="#969696"/><rect x="4" y="3" width="8" height="1" fill="#fff"/><rect x="12" y="3" width="4" height="1" fill="#000"/><rect x="3" y="4" width="1" height="1" fill="#969696"/><rect x="4" y="4" width="11" height="1" fill="#fff"/><rect x="15" y="4" width="1" height="1" fill="#000"/><rect x="3" y="5" width="1" height="1" fill="#969696"/><rect x="4" y="5" width="11" height="1" fill="#fff"/><rect x="15" y="5" width="1" height="1" fill="#000"/><rect x="3" y="6" width="1" height="1" fill="#969696"/><rect x="4" y="6" width="11" height="1" fill="#fff"/><rect x="15" y="6" width="1" height="1" fill="#000"/><rect x="3" y="7" width="1" height="1" fill="#969696"/><rect x="4" y="7" width="11" height="1" fill="#fff"/><rect x="15" y="7" width="2" height="1" fill="#000"/><rect x="0" y="8" width="1" height="1" fill="#969696"/><rect x="3" y="8" width="1" height="1" fill="#969696"/><rect x="4" y="8" width="9" height="1" fill="#fff"/><rect x="13" y="8" width="1" height="1" fill="#000"/><rect x="14" y="8" width="2" height="1" fill="#fff"/><rect x="16" y="8" width="1" height="1" fill="#000"/><rect x="1" y="9" width="3" height="1" fill="#969696"/><rect x="4" y="9" width="10" height="1" fill="#fff"/><rect x="14" y="9" width="1" height="1" fill="#cccccc"/><rect x="15" y="9" width="1" height="1" fill="#fff"/><rect x="16" y="9" width="1" height="1" fill="#000"/><rect x="1" y="10" width="1" height="1" fill="#969696"/><rect x="2" y="10" width="1" height="1" fill="#cccccc"/><rect x="3" y="10" width="11" height="1" fill="#fff"/><rect x="14" y="10" width="2" height="1" fill="#cccccc"/><rect x="16" y="10" width="1" height="1" fill="#000"/><rect x="1" y="11" width="1" height="1" fill="#969696"/><rect x="2" y="11" width="1" height="1" fill="#cccccc"/><rect x="3" y="11" width="1" height="1" fill="#fff"/><rect x="4" y="11" width="7" height="1" fill="#969696"/><rect x="11" y="11" width="2" height="1" fill="#fff"/><rect x="13" y="11" width="3" height="1" fill="#cccccc"/><rect x="16" y="11" width="1" height="1" fill="#000"/><rect x="1" y="12" width="1" height="1" fill="#969696"/><rect x="2" y="12" width="2" height="1" fill="#cccccc"/><rect x="4" y="12" width="1" height="1" fill="#fff"/><rect x="5" y="12" width="1" height="1" fill="#cccccc"/><rect x="6" y="12" width="1" height="1" fill="#fff"/><rect x="7" y="12" width="1" height="1" fill="#cccccc"/><rect x="8" y="12" width="1" height="1" fill="#fff"/><rect x="9" y="12" width="1" height="1" fill="#cccccc"/><rect x="10" y="12" width="1" height="1" fill="#fff"/><rect x="11" y="12" width="1" height="1" fill="#cccccc"/><rect x="12" y="12" width="1" height="1" fill="#fff"/><rect x="13" y="12" width="3" height="1" fill="#cccccc"/><rect x="16" y="12" width="1" height="1" fill="#000"/><rect x="1" y="13" width="1" height="1" fill="#969696"/><rect x="2" y="13" width="13" height="1" fill="#cccccc"/><rect x="15" y="13" width="1" height="1" fill="#000"/><rect x="2" y="14" width="13" height="1" fill="#000"/></svg>
<div class="det" style="left:65px;top:224px;color:#960096">DLC:  Ethertype   = 0800 (IP)</div>
<svg style="left:43px;top:221px;" width="17" height="15" shape-rendering="crispEdges"><rect x="3" y="0" width="10" height="1" fill="#969696"/><rect x="3" y="1" width="1" height="1" fill="#969696"/><rect x="4" y="1" width="9" height="1" fill="#fff"/><rect x="13" y="1" width="1" height="1" fill="#000"/><rect x="14" y="1" width="1" height="1" fill="#fff"/><rect x="3" y="2" width="1" height="1" fill="#969696"/><rect x="4" y="2" width="8" height="1" fill="#fff"/><rect x="12" y="2" width="1" height="1" fill="#000"/><rect x="13" y="2" width="2" height="1" fill="#fff"/><rect x="15" y="2" width="1" height="1" fill="#000"/><rect x="3" y="3" width="1" height="1" fill="#969696"/><rect x="4" y="3" width="8" height="1" fill="#fff"/><rect x="12" y="3" width="4" height="1" fill="#000"/><rect x="3" y="4" width="1" height="1" fill="#969696"/><rect x="4" y="4" width="11" height="1" fill="#fff"/><rect x="15" y="4" width="1" height="1" fill="#000"/><rect x="3" y="5" width="1" height="1" fill="#969696"/><rect x="4" y="5" width="11" height="1" fill="#fff"/><rect x="15" y="5" width="1" height="1" fill="#000"/><rect x="3" y="6" width="1" height="1" fill="#969696"/><rect x="4" y="6" width="11" height="1" fill="#fff"/><rect x="15" y="6" width="1" height="1" fill="#000"/><rect x="3" y="7" width="1" height="1" fill="#969696"/><rect x="4" y="7" width="11" height="1" fill="#fff"/><rect x="15" y="7" width="2" height="1" fill="#000"/><rect x="0" y="8" width="1" height="1" fill="#969696"/><rect x="3" y="8" width="1" height="1" fill="#969696"/><rect x="4" y="8" width="9" height="1" fill="#fff"/><rect x="13" y="8" width="1" height="1" fill="#000"/><rect x="14" y="8" width="2" height="1" fill="#fff"/><rect x="16" y="8" width="1" height="1" fill="#000"/><rect x="1" y="9" width="3" height="1" fill="#969696"/><rect x="4" y="9" width="10" height="1" fill="#fff"/><rect x="14" y="9" width="1" height="1" fill="#cccccc"/><rect x="15" y="9" width="1" height="1" fill="#fff"/><rect x="16" y="9" width="1" height="1" fill="#000"/><rect x="1" y="10" width="1" height="1" fill="#969696"/><rect x="2" y="10" width="1" height="1" fill="#cccccc"/><rect x="3" y="10" width="11" height="1" fill="#fff"/><rect x="14" y="10" width="2" height="1" fill="#cccccc"/><rect x="16" y="10" width="1" height="1" fill="#000"/><rect x="1" y="11" width="1" height="1" fill="#969696"/><rect x="2" y="11" width="1" height="1" fill="#cccccc"/><rect x="3" y="11" width="1" height="1" fill="#fff"/><rect x="4" y="11" width="7" height="1" fill="#969696"/><rect x="11" y="11" width="2" height="1" fill="#fff"/><rect x="13" y="11" width="3" height="1" fill="#cccccc"/><rect x="16" y="11" width="1" height="1" fill="#000"/><rect x="1" y="12" width="1" height="1" fill="#969696"/><rect x="2" y="12" width="2" height="1" fill="#cccccc"/><rect x="4" y="12" width="1" height="1" fill="#fff"/><rect x="5" y="12" width="1" height="1" fill="#cccccc"/><rect x="6" y="12" width="1" height="1" fill="#fff"/><rect x="7" y="12" width="1" height="1" fill="#cccccc"/><rect x="8" y="12" width="1" height="1" fill="#fff"/><rect x="9" y="12" width="1" height="1" fill="#cccccc"/><rect x="10" y="12" width="1" height="1" fill="#fff"/><rect x="11" y="12" width="1" height="1" fill="#cccccc"/><rect x="12" y="12" width="1" height="1" fill="#fff"/><rect x="13" y="12" width="3" height="1" fill="#cccccc"/><rect x="16" y="12" width="1" height="1" fill="#000"/><rect x="1" y="13" width="1" height="1" fill="#969696"/><rect x="2" y="13" width="13" height="1" fill="#cccccc"/><rect x="15" y="13" width="1" height="1" fill="#000"/><rect x="2" y="14" width="13" height="1" fill="#000"/></svg>
<div class="det" style="left:65px;top:240px;color:#960096">DLC:</div>
<svg style="left:43px;top:237px;" width="17" height="15" shape-rendering="crispEdges"><rect x="3" y="0" width="10" height="1" fill="#969696"/><rect x="3" y="1" width="1" height="1" fill="#969696"/><rect x="4" y="1" width="9" height="1" fill="#fff"/><rect x="13" y="1" width="1" height="1" fill="#000"/><rect x="14" y="1" width="1" height="1" fill="#fff"/><rect x="3" y="2" width="1" height="1" fill="#969696"/><rect x="4" y="2" width="8" height="1" fill="#fff"/><rect x="12" y="2" width="1" height="1" fill="#000"/><rect x="13" y="2" width="2" height="1" fill="#fff"/><rect x="15" y="2" width="1" height="1" fill="#000"/><rect x="3" y="3" width="1" height="1" fill="#969696"/><rect x="4" y="3" width="8" height="1" fill="#fff"/><rect x="12" y="3" width="4" height="1" fill="#000"/><rect x="3" y="4" width="1" height="1" fill="#969696"/><rect x="4" y="4" width="11" height="1" fill="#fff"/><rect x="15" y="4" width="1" height="1" fill="#000"/><rect x="3" y="5" width="1" height="1" fill="#969696"/><rect x="4" y="5" width="11" height="1" fill="#fff"/><rect x="15" y="5" width="1" height="1" fill="#000"/><rect x="3" y="6" width="1" height="1" fill="#969696"/><rect x="4" y="6" width="11" height="1" fill="#fff"/><rect x="15" y="6" width="1" height="1" fill="#000"/><rect x="3" y="7" width="1" height="1" fill="#969696"/><rect x="4" y="7" width="11" height="1" fill="#fff"/><rect x="15" y="7" width="2" height="1" fill="#000"/><rect x="0" y="8" width="1" height="1" fill="#969696"/><rect x="3" y="8" width="1" height="1" fill="#969696"/><rect x="4" y="8" width="9" height="1" fill="#fff"/><rect x="13" y="8" width="1" height="1" fill="#000"/><rect x="14" y="8" width="2" height="1" fill="#fff"/><rect x="16" y="8" width="1" height="1" fill="#000"/><rect x="1" y="9" width="3" height="1" fill="#969696"/><rect x="4" y="9" width="10" height="1" fill="#fff"/><rect x="14" y="9" width="1" height="1" fill="#cccccc"/><rect x="15" y="9" width="1" height="1" fill="#fff"/><rect x="16" y="9" width="1" height="1" fill="#000"/><rect x="1" y="10" width="1" height="1" fill="#969696"/><rect x="2" y="10" width="1" height="1" fill="#cccccc"/><rect x="3" y="10" width="11" height="1" fill="#fff"/><rect x="14" y="10" width="2" height="1" fill="#cccccc"/><rect x="16" y="10" width="1" height="1" fill="#000"/><rect x="1" y="11" width="1" height="1" fill="#969696"/><rect x="2" y="11" width="1" height="1" fill="#cccccc"/><rect x="3" y="11" width="1" height="1" fill="#fff"/><rect x="4" y="11" width="7" height="1" fill="#969696"/><rect x="11" y="11" width="2" height="1" fill="#fff"/><rect x="13" y="11" width="3" height="1" fill="#cccccc"/><rect x="16" y="11" width="1" height="1" fill="#000"/><rect x="1" y="12" width="1" height="1" fill="#969696"/><rect x="2" y="12" width="2" height="1" fill="#cccccc"/><rect x="4" y="12" width="1" height="1" fill="#fff"/><rect x="5" y="12" width="1" height="1" fill="#cccccc"/><rect x="6" y="12" width="1" height="1" fill="#fff"/><rect x="7" y="12" width="1" height="1" fill="#cccccc"/><rect x="8" y="12" width="1" height="1" fill="#fff"/><rect x="9" y="12" width="1" height="1" fill="#cccccc"/><rect x="10" y="12" width="1" height="1" fill="#fff"/><rect x="11" y="12" width="1" height="1" fill="#cccccc"/><rect x="12" y="12" width="1" height="1" fill="#fff"/><rect x="13" y="12" width="3" height="1" fill="#cccccc"/><rect x="16" y="12" width="1" height="1" fill="#000"/><rect x="1" y="13" width="1" height="1" fill="#969696"/><rect x="2" y="13" width="13" height="1" fill="#cccccc"/><rect x="15" y="13" width="1" height="1" fill="#000"/><rect x="2" y="14" width="13" height="1" fill="#000"/></svg>
<div class="det" style="left:47px;top:256px;color:#969600">IP:  D=[224.0.0.4] S=[209.31.7.48] LEN=12 ID=18892</div>
<div class="det" style="left:47px;top:272px;color:#000">DVMRP: ----- Distance Vector Multicast Routing Protocol -----</div>
<div class="det" style="left:65px;top:288px;color:#969600">DVMRP:</div>
<svg style="left:43px;top:285px;" width="17" height="15" shape-rendering="crispEdges"><rect x="3" y="0" width="10" height="1" fill="#000"/><rect x="3" y="1" width="1" height="1" fill="#000"/><rect x="4" y="1" width="1" height="1" fill="#ff00ff"/><rect x="5" y="1" width="1" height="1" fill="#fff"/><rect x="6" y="1" width="1" height="1" fill="#ff00ff"/><rect x="7" y="1" width="1" height="1" fill="#fff"/><rect x="8" y="1" width="1" height="1" fill="#ff00ff"/><rect x="9" y="1" width="1" height="1" fill="#fff"/><rect x="10" y="1" width="1" height="1" fill="#ff00ff"/><rect x="11" y="1" width="1" height="1" fill="#fff"/><rect x="12" y="1" width="1" height="1" fill="#ff00ff"/><rect x="13" y="1" width="1" height="1" fill="#000"/><rect x="14" y="1" width="1" height="1" fill="#fff"/><rect x="3" y="2" width="1" height="1" fill="#000"/><rect x="4" y="2" width="1" height="1" fill="#fff"/><rect x="5" y="2" width="1" height="1" fill="#ff00ff"/><rect x="6" y="2" width="1" height="1" fill="#fff"/><rect x="7" y="2" width="1" height="1" fill="#ff00ff"/><rect x="8" y="2" width="1" height="1" fill="#fff"/><rect x="9" y="2" width="1" height="1" fill="#ff00ff"/><rect x="10" y="2" width="1" height="1" fill="#fff"/><rect x="11" y="2" width="1" height="1" fill="#ff00ff"/><rect x="12" y="2" width="1" height="1" fill="#000"/><rect x="13" y="2" width="2" height="1" fill="#fff"/><rect x="15" y="2" width="1" height="1" fill="#000"/><rect x="3" y="3" width="1" height="1" fill="#000"/><rect x="4" y="3" width="1" height="1" fill="#ff00ff"/><rect x="5" y="3" width="1" height="1" fill="#fff"/><rect x="6" y="3" width="1" height="1" fill="#ff00ff"/><rect x="7" y="3" width="1" height="1" fill="#fff"/><rect x="8" y="3" width="1" height="1" fill="#ff00ff"/><rect x="9" y="3" width="1" height="1" fill="#fff"/><rect x="10" y="3" width="1" height="1" fill="#ff00ff"/><rect x="11" y="3" width="1" height="1" fill="#fff"/><rect x="12" y="3" width="4" height="1" fill="#000"/><rect x="3" y="4" width="1" height="1" fill="#000"/><rect x="4" y="4" width="1" height="1" fill="#fff"/><rect x="5" y="4" width="1" height="1" fill="#ff00ff"/><rect x="6" y="4" width="1" height="1" fill="#fff"/><rect x="7" y="4" width="1" height="1" fill="#ff00ff"/><rect x="8" y="4" width="1" height="1" fill="#fff"/><rect x="9" y="4" width="1" height="1" fill="#ff00ff"/><rect x="10" y="4" width="1" height="1" fill="#fff"/><rect x="11" y="4" width="1" height="1" fill="#ff00ff"/><rect x="12" y="4" width="1" height="1" fill="#fff"/><rect x="13" y="4" width="1" height="1" fill="#ff00ff"/><rect x="14" y="4" width="1" height="1" fill="#fff"/><rect x="15" y="4" width="1" height="1" fill="#000"/><rect x="3" y="5" width="1" height="1" fill="#000"/><rect x="4" y="5" width="1" height="1" fill="#ff00ff"/><rect x="5" y="5" width="1" height="1" fill="#fff"/><rect x="6" y="5" width="1" height="1" fill="#ff00ff"/><rect x="7" y="5" width="1" height="1" fill="#fff"/><rect x="8" y="5" width="1" height="1" fill="#ff00ff"/><rect x="9" y="5" width="1" height="1" fill="#fff"/><rect x="10" y="5" width="1" height="1" fill="#ff00ff"/><rect x="11" y="5" width="1" height="1" fill="#fff"/><rect x="12" y="5" width="1" height="1" fill="#ff00ff"/><rect x="13" y="5" width="1" height="1" fill="#fff"/><rect x="14" y="5" width="1" height="1" fill="#ff00ff"/><rect x="15" y="5" width="1" height="1" fill="#000"/><rect x="3" y="6" width="1" height="1" fill="#000"/><rect x="4" y="6" width="1" height="1" fill="#fff"/><rect x="5" y="6" width="1" height="1" fill="#ff00ff"/><rect x="6" y="6" width="1" height="1" fill="#fff"/><rect x="7" y="6" width="1" height="1" fill="#ff00ff"/><rect x="8" y="6" width="1" height="1" fill="#fff"/><rect x="9" y="6" width="1" height="1" fill="#ff00ff"/><rect x="10" y="6" width="1" height="1" fill="#fff"/><rect x="11" y="6" width="1" height="1" fill="#ff00ff"/><rect x="12" y="6" width="1" height="1" fill="#fff"/><rect x="13" y="6" width="1" height="1" fill="#ff00ff"/><rect x="14" y="6" width="1" height="1" fill="#fff"/><rect x="15" y="6" width="1" height="1" fill="#000"/><rect x="3" y="7" width="1" height="1" fill="#000"/><rect x="4" y="7" width="1" height="1" fill="#ff00ff"/><rect x="5" y="7" width="1" height="1" fill="#fff"/><rect x="6" y="7" width="1" height="1" fill="#ff00ff"/><rect x="7" y="7" width="1" height="1" fill="#fff"/><rect x="8" y="7" width="1" height="1" fill="#ff00ff"/><rect x="9" y="7" width="1" height="1" fill="#fff"/><rect x="10" y="7" width="1" height="1" fill="#ff00ff"/><rect x="11" y="7" width="1" height="1" fill="#fff"/><rect x="12" y="7" width="1" height="1" fill="#ff00ff"/><rect x="13" y="7" width="1" height="1" fill="#fff"/><rect x="14" y="7" width="1" height="1" fill="#ff00ff"/><rect x="15" y="7" width="2" height="1" fill="#000"/><rect x="0" y="8" width="1" height="1" fill="#969696"/><rect x="3" y="8" width="1" height="1" fill="#000"/><rect x="4" y="8" width="1" height="1" fill="#fff"/><rect x="5" y="8" width="1" height="1" fill="#ff00ff"/><rect x="6" y="8" width="1" height="1" fill="#fff"/><rect x="7" y="8" width="1" height="1" fill="#ff00ff"/><rect x="8" y="8" width="1" height="1" fill="#fff"/><rect x="9" y="8" width="1" height="1" fill="#ff00ff"/><rect x="10" y="8" width="1" height="1" fill="#fff"/><rect x="11" y="8" width="1" height="1" fill="#ff00ff"/><rect x="12" y="8" width="1" height="1" fill="#fff"/><rect x="13" y="8" width="1" height="1" fill="#000"/><rect x="14" y="8" width="2" height="1" fill="#fff"/><rect x="16" y="8" width="1" height="1" fill="#000"/><rect x="1" y="9" width="3" height="1" fill="#969696"/><rect x="4" y="9" width="1" height="1" fill="#ff00ff"/><rect x="5" y="9" width="1" height="1" fill="#fff"/><rect x="6" y="9" width="1" height="1" fill="#ff00ff"/><rect x="7" y="9" width="1" height="1" fill="#fff"/><rect x="8" y="9" width="1" height="1" fill="#ff00ff"/><rect x="9" y="9" width="1" height="1" fill="#fff"/><rect x="10" y="9" width="1" height="1" fill="#ff00ff"/><rect x="11" y="9" width="1" height="1" fill="#fff"/><rect x="12" y="9" width="1" height="1" fill="#ff00ff"/><rect x="13" y="9" width="1" height="1" fill="#fff"/><rect x="14" y="9" width="1" height="1" fill="#cccccc"/><rect x="15" y="9" width="1" height="1" fill="#fff"/><rect x="16" y="9" width="1" height="1" fill="#000"/><rect x="1" y="10" width="1" height="1" fill="#969696"/><rect x="2" y="10" width="1" height="1" fill="#cccccc"/><rect x="3" y="10" width="2" height="1" fill="#fff"/><rect x="5" y="10" width="1" height="1" fill="#ff00ff"/><rect x="6" y="10" width="1" height="1" fill="#fff"/><rect x="7" y="10" width="1" height="1" fill="#ff00ff"/><rect x="8" y="10" width="1" height="1" fill="#fff"/><rect x="9" y="10" width="1" height="1" fill="#ff00ff"/><rect x="10" y="10" width="1" height="1" fill="#fff"/><rect x="11" y="10" width="1" height="1" fill="#ff00ff"/><rect x="12" y="10" width="2" height="1" fill="#fff"/><rect x="14" y="10" width="2" height="1" fill="#cccccc"/><rect x="16" y="10" width="1" height="1" fill="#000"/><rect x="1" y="11" width="1" height="1" fill="#969696"/><rect x="2" y="11" width="1" height="1" fill="#cccccc"/><rect x="3" y="11" width="1" height="1" fill="#fff"/><rect x="4" y="11" width="7" height="1" fill="#969696"/><rect x="11" y="11" width="2" height="1" fill="#fff"/><rect x="13" y="11" width="3" height="1" fill="#cccccc"/><rect x="16" y="11" width="1" height="1" fill="#000"/><rect x="1" y="12" width="1" height="1" fill="#969696"/><rect x="2" y="12" width="2" height="1" fill="#cccccc"/><rect x="4" y="12" width="1" height="1" fill="#fff"/><rect x="5" y="12" width="1" height="1" fill="#cccccc"/><rect x="6" y="12" width="1" height="1" fill="#fff"/><rect x="7" y="12" width="1" height="1" fill="#cccccc"/><rect x="8" y="12" width="1" height="1" fill="#fff"/><rect x="9" y="12" width="1" height="1" fill="#cccccc"/><rect x="10" y="12" width="1" height="1" fill="#fff"/><rect x="11" y="12" width="1" height="1" fill="#cccccc"/><rect x="12" y="12" width="1" height="1" fill="#fff"/><rect x="13" y="12" width="3" height="1" fill="#cccccc"/><rect x="16" y="12" width="1" height="1" fill="#000"/><rect x="1" y="13" width="1" height="1" fill="#969696"/><rect x="2" y="13" width="13" height="1" fill="#cccccc"/><rect x="15" y="13" width="1" height="1" fill="#000"/><rect x="2" y="14" width="13" height="1" fill="#000"/></svg>
<div class="det" style="left:65px;top:304px;color:#969600">DVMRP: Type          = 0x13</div>
<svg style="left:43px;top:301px;" width="17" height="15" shape-rendering="crispEdges"><rect x="3" y="0" width="10" height="1" fill="#000"/><rect x="3" y="1" width="1" height="1" fill="#000"/><rect x="4" y="1" width="1" height="1" fill="#ff00ff"/><rect x="5" y="1" width="1" height="1" fill="#fff"/><rect x="6" y="1" width="1" height="1" fill="#ff00ff"/><rect x="7" y="1" width="1" height="1" fill="#fff"/><rect x="8" y="1" width="1" height="1" fill="#ff00ff"/><rect x="9" y="1" width="1" height="1" fill="#fff"/><rect x="10" y="1" width="1" height="1" fill="#ff00ff"/><rect x="11" y="1" width="1" height="1" fill="#fff"/><rect x="12" y="1" width="1" height="1" fill="#ff00ff"/><rect x="13" y="1" width="1" height="1" fill="#000"/><rect x="14" y="1" width="1" height="1" fill="#fff"/><rect x="3" y="2" width="1" height="1" fill="#000"/><rect x="4" y="2" width="1" height="1" fill="#fff"/><rect x="5" y="2" width="1" height="1" fill="#ff00ff"/><rect x="6" y="2" width="1" height="1" fill="#fff"/><rect x="7" y="2" width="1" height="1" fill="#ff00ff"/><rect x="8" y="2" width="1" height="1" fill="#fff"/><rect x="9" y="2" width="1" height="1" fill="#ff00ff"/><rect x="10" y="2" width="1" height="1" fill="#fff"/><rect x="11" y="2" width="1" height="1" fill="#ff00ff"/><rect x="12" y="2" width="1" height="1" fill="#000"/><rect x="13" y="2" width="2" height="1" fill="#fff"/><rect x="15" y="2" width="1" height="1" fill="#000"/><rect x="3" y="3" width="1" height="1" fill="#000"/><rect x="4" y="3" width="1" height="1" fill="#ff00ff"/><rect x="5" y="3" width="1" height="1" fill="#fff"/><rect x="6" y="3" width="1" height="1" fill="#ff00ff"/><rect x="7" y="3" width="1" height="1" fill="#fff"/><rect x="8" y="3" width="1" height="1" fill="#ff00ff"/><rect x="9" y="3" width="1" height="1" fill="#fff"/><rect x="10" y="3" width="1" height="1" fill="#ff00ff"/><rect x="11" y="3" width="1" height="1" fill="#fff"/><rect x="12" y="3" width="4" height="1" fill="#000"/><rect x="3" y="4" width="1" height="1" fill="#000"/><rect x="4" y="4" width="1" height="1" fill="#fff"/><rect x="5" y="4" width="1" height="1" fill="#ff00ff"/><rect x="6" y="4" width="1" height="1" fill="#fff"/><rect x="7" y="4" width="1" height="1" fill="#ff00ff"/><rect x="8" y="4" width="1" height="1" fill="#fff"/><rect x="9" y="4" width="1" height="1" fill="#ff00ff"/><rect x="10" y="4" width="1" height="1" fill="#fff"/><rect x="11" y="4" width="1" height="1" fill="#ff00ff"/><rect x="12" y="4" width="1" height="1" fill="#fff"/><rect x="13" y="4" width="1" height="1" fill="#ff00ff"/><rect x="14" y="4" width="1" height="1" fill="#fff"/><rect x="15" y="4" width="1" height="1" fill="#000"/><rect x="3" y="5" width="1" height="1" fill="#000"/><rect x="4" y="5" width="1" height="1" fill="#ff00ff"/><rect x="5" y="5" width="1" height="1" fill="#fff"/><rect x="6" y="5" width="1" height="1" fill="#ff00ff"/><rect x="7" y="5" width="1" height="1" fill="#fff"/><rect x="8" y="5" width="1" height="1" fill="#ff00ff"/><rect x="9" y="5" width="1" height="1" fill="#fff"/><rect x="10" y="5" width="1" height="1" fill="#ff00ff"/><rect x="11" y="5" width="1" height="1" fill="#fff"/><rect x="12" y="5" width="1" height="1" fill="#ff00ff"/><rect x="13" y="5" width="1" height="1" fill="#fff"/><rect x="14" y="5" width="1" height="1" fill="#ff00ff"/><rect x="15" y="5" width="1" height="1" fill="#000"/><rect x="3" y="6" width="1" height="1" fill="#000"/><rect x="4" y="6" width="1" height="1" fill="#fff"/><rect x="5" y="6" width="1" height="1" fill="#ff00ff"/><rect x="6" y="6" width="1" height="1" fill="#fff"/><rect x="7" y="6" width="1" height="1" fill="#ff00ff"/><rect x="8" y="6" width="1" height="1" fill="#fff"/><rect x="9" y="6" width="1" height="1" fill="#ff00ff"/><rect x="10" y="6" width="1" height="1" fill="#fff"/><rect x="11" y="6" width="1" height="1" fill="#ff00ff"/><rect x="12" y="6" width="1" height="1" fill="#fff"/><rect x="13" y="6" width="1" height="1" fill="#ff00ff"/><rect x="14" y="6" width="1" height="1" fill="#fff"/><rect x="15" y="6" width="1" height="1" fill="#000"/><rect x="3" y="7" width="1" height="1" fill="#000"/><rect x="4" y="7" width="1" height="1" fill="#ff00ff"/><rect x="5" y="7" width="1" height="1" fill="#fff"/><rect x="6" y="7" width="1" height="1" fill="#ff00ff"/><rect x="7" y="7" width="1" height="1" fill="#fff"/><rect x="8" y="7" width="1" height="1" fill="#ff00ff"/><rect x="9" y="7" width="1" height="1" fill="#fff"/><rect x="10" y="7" width="1" height="1" fill="#ff00ff"/><rect x="11" y="7" width="1" height="1" fill="#fff"/><rect x="12" y="7" width="1" height="1" fill="#ff00ff"/><rect x="13" y="7" width="1" height="1" fill="#fff"/><rect x="14" y="7" width="1" height="1" fill="#ff00ff"/><rect x="15" y="7" width="2" height="1" fill="#000"/><rect x="0" y="8" width="1" height="1" fill="#969696"/><rect x="3" y="8" width="1" height="1" fill="#000"/><rect x="4" y="8" width="1" height="1" fill="#fff"/><rect x="5" y="8" width="1" height="1" fill="#ff00ff"/><rect x="6" y="8" width="1" height="1" fill="#fff"/><rect x="7" y="8" width="1" height="1" fill="#ff00ff"/><rect x="8" y="8" width="1" height="1" fill="#fff"/><rect x="9" y="8" width="1" height="1" fill="#ff00ff"/><rect x="10" y="8" width="1" height="1" fill="#fff"/><rect x="11" y="8" width="1" height="1" fill="#ff00ff"/><rect x="12" y="8" width="1" height="1" fill="#fff"/><rect x="13" y="8" width="1" height="1" fill="#000"/><rect x="14" y="8" width="2" height="1" fill="#fff"/><rect x="16" y="8" width="1" height="1" fill="#000"/><rect x="1" y="9" width="3" height="1" fill="#969696"/><rect x="4" y="9" width="1" height="1" fill="#ff00ff"/><rect x="5" y="9" width="1" height="1" fill="#fff"/><rect x="6" y="9" width="1" height="1" fill="#ff00ff"/><rect x="7" y="9" width="1" height="1" fill="#fff"/><rect x="8" y="9" width="1" height="1" fill="#ff00ff"/><rect x="9" y="9" width="1" height="1" fill="#fff"/><rect x="10" y="9" width="1" height="1" fill="#ff00ff"/><rect x="11" y="9" width="1" height="1" fill="#fff"/><rect x="12" y="9" width="1" height="1" fill="#ff00ff"/><rect x="13" y="9" width="1" height="1" fill="#fff"/><rect x="14" y="9" width="1" height="1" fill="#cccccc"/><rect x="15" y="9" width="1" height="1" fill="#fff"/><rect x="16" y="9" width="1" height="1" fill="#000"/><rect x="1" y="10" width="1" height="1" fill="#969696"/><rect x="2" y="10" width="1" height="1" fill="#cccccc"/><rect x="3" y="10" width="2" height="1" fill="#fff"/><rect x="5" y="10" width="1" height="1" fill="#ff00ff"/><rect x="6" y="10" width="1" height="1" fill="#fff"/><rect x="7" y="10" width="1" height="1" fill="#ff00ff"/><rect x="8" y="10" width="1" height="1" fill="#fff"/><rect x="9" y="10" width="1" height="1" fill="#ff00ff"/><rect x="10" y="10" width="1" height="1" fill="#fff"/><rect x="11" y="10" width="1" height="1" fill="#ff00ff"/><rect x="12" y="10" width="2" height="1" fill="#fff"/><rect x="14" y="10" width="2" height="1" fill="#cccccc"/><rect x="16" y="10" width="1" height="1" fill="#000"/><rect x="1" y="11" width="1" height="1" fill="#969696"/><rect x="2" y="11" width="1" height="1" fill="#cccccc"/><rect x="3" y="11" width="1" height="1" fill="#fff"/><rect x="4" y="11" width="7" height="1" fill="#969696"/><rect x="11" y="11" width="2" height="1" fill="#fff"/><rect x="13" y="11" width="3" height="1" fill="#cccccc"/><rect x="16" y="11" width="1" height="1" fill="#000"/><rect x="1" y="12" width="1" height="1" fill="#969696"/><rect x="2" y="12" width="2" height="1" fill="#cccccc"/><rect x="4" y="12" width="1" height="1" fill="#fff"/><rect x="5" y="12" width="1" height="1" fill="#cccccc"/><rect x="6" y="12" width="1" height="1" fill="#fff"/><rect x="7" y="12" width="1" height="1" fill="#cccccc"/><rect x="8" y="12" width="1" height="1" fill="#fff"/><rect x="9" y="12" width="1" height="1" fill="#cccccc"/><rect x="10" y="12" width="1" height="1" fill="#fff"/><rect x="11" y="12" width="1" height="1" fill="#cccccc"/><rect x="12" y="12" width="1" height="1" fill="#fff"/><rect x="13" y="12" width="3" height="1" fill="#cccccc"/><rect x="16" y="12" width="1" height="1" fill="#000"/><rect x="1" y="13" width="1" height="1" fill="#969696"/><rect x="2" y="13" width="13" height="1" fill="#cccccc"/><rect x="15" y="13" width="1" height="1" fill="#000"/><rect x="2" y="14" width="13" height="1" fill="#000"/></svg>
<div class="det" style="left:65px;top:320px;color:#969600">DVMRP: Code          = Probe for Neighbor Discovery (1)</div>
<svg style="left:43px;top:317px;" width="17" height="15" shape-rendering="crispEdges"><rect x="3" y="0" width="10" height="1" fill="#000"/><rect x="3" y="1" width="1" height="1" fill="#000"/><rect x="4" y="1" width="1" height="1" fill="#ff00ff"/><rect x="5" y="1" width="1" height="1" fill="#fff"/><rect x="6" y="1" width="1" height="1" fill="#ff00ff"/><rect x="7" y="1" width="1" height="1" fill="#fff"/><rect x="8" y="1" width="1" height="1" fill="#ff00ff"/><rect x="9" y="1" width="1" height="1" fill="#fff"/><rect x="10" y="1" width="1" height="1" fill="#ff00ff"/><rect x="11" y="1" width="1" height="1" fill="#fff"/><rect x="12" y="1" width="1" height="1" fill="#ff00ff"/><rect x="13" y="1" width="1" height="1" fill="#000"/><rect x="14" y="1" width="1" height="1" fill="#fff"/><rect x="3" y="2" width="1" height="1" fill="#000"/><rect x="4" y="2" width="1" height="1" fill="#fff"/><rect x="5" y="2" width="1" height="1" fill="#ff00ff"/><rect x="6" y="2" width="1" height="1" fill="#fff"/><rect x="7" y="2" width="1" height="1" fill="#ff00ff"/><rect x="8" y="2" width="1" height="1" fill="#fff"/><rect x="9" y="2" width="1" height="1" fill="#ff00ff"/><rect x="10" y="2" width="1" height="1" fill="#fff"/><rect x="11" y="2" width="1" height="1" fill="#ff00ff"/><rect x="12" y="2" width="1" height="1" fill="#000"/><rect x="13" y="2" width="2" height="1" fill="#fff"/><rect x="15" y="2" width="1" height="1" fill="#000"/><rect x="3" y="3" width="1" height="1" fill="#000"/><rect x="4" y="3" width="1" height="1" fill="#ff00ff"/><rect x="5" y="3" width="1" height="1" fill="#fff"/><rect x="6" y="3" width="1" height="1" fill="#ff00ff"/><rect x="7" y="3" width="1" height="1" fill="#fff"/><rect x="8" y="3" width="1" height="1" fill="#ff00ff"/><rect x="9" y="3" width="1" height="1" fill="#fff"/><rect x="10" y="3" width="1" height="1" fill="#ff00ff"/><rect x="11" y="3" width="1" height="1" fill="#fff"/><rect x="12" y="3" width="4" height="1" fill="#000"/><rect x="3" y="4" width="1" height="1" fill="#000"/><rect x="4" y="4" width="1" height="1" fill="#fff"/><rect x="5" y="4" width="1" height="1" fill="#ff00ff"/><rect x="6" y="4" width="1" height="1" fill="#fff"/><rect x="7" y="4" width="1" height="1" fill="#ff00ff"/><rect x="8" y="4" width="1" height="1" fill="#fff"/><rect x="9" y="4" width="1" height="1" fill="#ff00ff"/><rect x="10" y="4" width="1" height="1" fill="#fff"/><rect x="11" y="4" width="1" height="1" fill="#ff00ff"/><rect x="12" y="4" width="1" height="1" fill="#fff"/><rect x="13" y="4" width="1" height="1" fill="#ff00ff"/><rect x="14" y="4" width="1" height="1" fill="#fff"/><rect x="15" y="4" width="1" height="1" fill="#000"/><rect x="3" y="5" width="1" height="1" fill="#000"/><rect x="4" y="5" width="1" height="1" fill="#ff00ff"/><rect x="5" y="5" width="1" height="1" fill="#fff"/><rect x="6" y="5" width="1" height="1" fill="#ff00ff"/><rect x="7" y="5" width="1" height="1" fill="#fff"/><rect x="8" y="5" width="1" height="1" fill="#ff00ff"/><rect x="9" y="5" width="1" height="1" fill="#fff"/><rect x="10" y="5" width="1" height="1" fill="#ff00ff"/><rect x="11" y="5" width="1" height="1" fill="#fff"/><rect x="12" y="5" width="1" height="1" fill="#ff00ff"/><rect x="13" y="5" width="1" height="1" fill="#fff"/><rect x="14" y="5" width="1" height="1" fill="#ff00ff"/><rect x="15" y="5" width="1" height="1" fill="#000"/><rect x="3" y="6" width="1" height="1" fill="#000"/><rect x="4" y="6" width="1" height="1" fill="#fff"/><rect x="5" y="6" width="1" height="1" fill="#ff00ff"/><rect x="6" y="6" width="1" height="1" fill="#fff"/><rect x="7" y="6" width="1" height="1" fill="#ff00ff"/><rect x="8" y="6" width="1" height="1" fill="#fff"/><rect x="9" y="6" width="1" height="1" fill="#ff00ff"/><rect x="10" y="6" width="1" height="1" fill="#fff"/><rect x="11" y="6" width="1" height="1" fill="#ff00ff"/><rect x="12" y="6" width="1" height="1" fill="#fff"/><rect x="13" y="6" width="1" height="1" fill="#ff00ff"/><rect x="14" y="6" width="1" height="1" fill="#fff"/><rect x="15" y="6" width="1" height="1" fill="#000"/><rect x="3" y="7" width="1" height="1" fill="#000"/><rect x="4" y="7" width="1" height="1" fill="#ff00ff"/><rect x="5" y="7" width="1" height="1" fill="#fff"/><rect x="6" y="7" width="1" height="1" fill="#ff00ff"/><rect x="7" y="7" width="1" height="1" fill="#fff"/><rect x="8" y="7" width="1" height="1" fill="#ff00ff"/><rect x="9" y="7" width="1" height="1" fill="#fff"/><rect x="10" y="7" width="1" height="1" fill="#ff00ff"/><rect x="11" y="7" width="1" height="1" fill="#fff"/><rect x="12" y="7" width="1" height="1" fill="#ff00ff"/><rect x="13" y="7" width="1" height="1" fill="#fff"/><rect x="14" y="7" width="1" height="1" fill="#ff00ff"/><rect x="15" y="7" width="2" height="1" fill="#000"/><rect x="0" y="8" width="1" height="1" fill="#969696"/><rect x="3" y="8" width="1" height="1" fill="#000"/><rect x="4" y="8" width="1" height="1" fill="#fff"/><rect x="5" y="8" width="1" height="1" fill="#ff00ff"/><rect x="6" y="8" width="1" height="1" fill="#fff"/><rect x="7" y="8" width="1" height="1" fill="#ff00ff"/><rect x="8" y="8" width="1" height="1" fill="#fff"/><rect x="9" y="8" width="1" height="1" fill="#ff00ff"/><rect x="10" y="8" width="1" height="1" fill="#fff"/><rect x="11" y="8" width="1" height="1" fill="#ff00ff"/><rect x="12" y="8" width="1" height="1" fill="#fff"/><rect x="13" y="8" width="1" height="1" fill="#000"/><rect x="14" y="8" width="2" height="1" fill="#fff"/><rect x="16" y="8" width="1" height="1" fill="#000"/><rect x="1" y="9" width="3" height="1" fill="#969696"/><rect x="4" y="9" width="1" height="1" fill="#ff00ff"/><rect x="5" y="9" width="1" height="1" fill="#fff"/><rect x="6" y="9" width="1" height="1" fill="#ff00ff"/><rect x="7" y="9" width="1" height="1" fill="#fff"/><rect x="8" y="9" width="1" height="1" fill="#ff00ff"/><rect x="9" y="9" width="1" height="1" fill="#fff"/><rect x="10" y="9" width="1" height="1" fill="#ff00ff"/><rect x="11" y="9" width="1" height="1" fill="#fff"/><rect x="12" y="9" width="1" height="1" fill="#ff00ff"/><rect x="13" y="9" width="1" height="1" fill="#fff"/><rect x="14" y="9" width="1" height="1" fill="#cccccc"/><rect x="15" y="9" width="1" height="1" fill="#fff"/><rect x="16" y="9" width="1" height="1" fill="#000"/><rect x="1" y="10" width="1" height="1" fill="#969696"/><rect x="2" y="10" width="1" height="1" fill="#cccccc"/><rect x="3" y="10" width="2" height="1" fill="#fff"/><rect x="5" y="10" width="1" height="1" fill="#ff00ff"/><rect x="6" y="10" width="1" height="1" fill="#fff"/><rect x="7" y="10" width="1" height="1" fill="#ff00ff"/><rect x="8" y="10" width="1" height="1" fill="#fff"/><rect x="9" y="10" width="1" height="1" fill="#ff00ff"/><rect x="10" y="10" width="1" height="1" fill="#fff"/><rect x="11" y="10" width="1" height="1" fill="#ff00ff"/><rect x="12" y="10" width="2" height="1" fill="#fff"/><rect x="14" y="10" width="2" height="1" fill="#cccccc"/><rect x="16" y="10" width="1" height="1" fill="#000"/><rect x="1" y="11" width="1" height="1" fill="#969696"/><rect x="2" y="11" width="1" height="1" fill="#cccccc"/><rect x="3" y="11" width="1" height="1" fill="#fff"/><rect x="4" y="11" width="7" height="1" fill="#969696"/><rect x="11" y="11" width="2" height="1" fill="#fff"/><rect x="13" y="11" width="3" height="1" fill="#cccccc"/><rect x="16" y="11" width="1" height="1" fill="#000"/><rect x="1" y="12" width="1" height="1" fill="#969696"/><rect x="2" y="12" width="2" height="1" fill="#cccccc"/><rect x="4" y="12" width="1" height="1" fill="#fff"/><rect x="5" y="12" width="1" height="1" fill="#cccccc"/><rect x="6" y="12" width="1" height="1" fill="#fff"/><rect x="7" y="12" width="1" height="1" fill="#cccccc"/><rect x="8" y="12" width="1" height="1" fill="#fff"/><rect x="9" y="12" width="1" height="1" fill="#cccccc"/><rect x="10" y="12" width="1" height="1" fill="#fff"/><rect x="11" y="12" width="1" height="1" fill="#cccccc"/><rect x="12" y="12" width="1" height="1" fill="#fff"/><rect x="13" y="12" width="3" height="1" fill="#cccccc"/><rect x="16" y="12" width="1" height="1" fill="#000"/><rect x="1" y="13" width="1" height="1" fill="#969696"/><rect x="2" y="13" width="13" height="1" fill="#cccccc"/><rect x="15" y="13" width="1" height="1" fill="#000"/><rect x="2" y="14" width="13" height="1" fill="#000"/></svg>
<div class="det" style="left:65px;top:336px;color:#969600">DVMRP: Checksum      = 0x5222</div>
<svg style="left:43px;top:333px;" width="17" height="15" shape-rendering="crispEdges"><rect x="3" y="0" width="10" height="1" fill="#000"/><rect x="3" y="1" width="1" height="1" fill="#000"/><rect x="4" y="1" width="1" height="1" fill="#ff00ff"/><rect x="5" y="1" width="1" height="1" fill="#fff"/><rect x="6" y="1" width="1" height="1" fill="#ff00ff"/><rect x="7" y="1" width="1" height="1" fill="#fff"/><rect x="8" y="1" width="1" height="1" fill="#ff00ff"/><rect x="9" y="1" width="1" height="1" fill="#fff"/><rect x="10" y="1" width="1" height="1" fill="#ff00ff"/><rect x="11" y="1" width="1" height="1" fill="#fff"/><rect x="12" y="1" width="1" height="1" fill="#ff00ff"/><rect x="13" y="1" width="1" height="1" fill="#000"/><rect x="14" y="1" width="1" height="1" fill="#fff"/><rect x="3" y="2" width="1" height="1" fill="#000"/><rect x="4" y="2" width="1" height="1" fill="#fff"/><rect x="5" y="2" width="1" height="1" fill="#ff00ff"/><rect x="6" y="2" width="1" height="1" fill="#fff"/><rect x="7" y="2" width="1" height="1" fill="#ff00ff"/><rect x="8" y="2" width="1" height="1" fill="#fff"/><rect x="9" y="2" width="1" height="1" fill="#ff00ff"/><rect x="10" y="2" width="1" height="1" fill="#fff"/><rect x="11" y="2" width="1" height="1" fill="#ff00ff"/><rect x="12" y="2" width="1" height="1" fill="#000"/><rect x="13" y="2" width="2" height="1" fill="#fff"/><rect x="15" y="2" width="1" height="1" fill="#000"/><rect x="3" y="3" width="1" height="1" fill="#000"/><rect x="4" y="3" width="1" height="1" fill="#ff00ff"/><rect x="5" y="3" width="1" height="1" fill="#fff"/><rect x="6" y="3" width="1" height="1" fill="#ff00ff"/><rect x="7" y="3" width="1" height="1" fill="#fff"/><rect x="8" y="3" width="1" height="1" fill="#ff00ff"/><rect x="9" y="3" width="1" height="1" fill="#fff"/><rect x="10" y="3" width="1" height="1" fill="#ff00ff"/><rect x="11" y="3" width="1" height="1" fill="#fff"/><rect x="12" y="3" width="4" height="1" fill="#000"/><rect x="3" y="4" width="1" height="1" fill="#000"/><rect x="4" y="4" width="1" height="1" fill="#fff"/><rect x="5" y="4" width="1" height="1" fill="#ff00ff"/><rect x="6" y="4" width="1" height="1" fill="#fff"/><rect x="7" y="4" width="1" height="1" fill="#ff00ff"/><rect x="8" y="4" width="1" height="1" fill="#fff"/><rect x="9" y="4" width="1" height="1" fill="#ff00ff"/><rect x="10" y="4" width="1" height="1" fill="#fff"/><rect x="11" y="4" width="1" height="1" fill="#ff00ff"/><rect x="12" y="4" width="1" height="1" fill="#fff"/><rect x="13" y="4" width="1" height="1" fill="#ff00ff"/><rect x="14" y="4" width="1" height="1" fill="#fff"/><rect x="15" y="4" width="1" height="1" fill="#000"/><rect x="3" y="5" width="1" height="1" fill="#000"/><rect x="4" y="5" width="1" height="1" fill="#ff00ff"/><rect x="5" y="5" width="1" height="1" fill="#fff"/><rect x="6" y="5" width="1" height="1" fill="#ff00ff"/><rect x="7" y="5" width="1" height="1" fill="#fff"/><rect x="8" y="5" width="1" height="1" fill="#ff00ff"/><rect x="9" y="5" width="1" height="1" fill="#fff"/><rect x="10" y="5" width="1" height="1" fill="#ff00ff"/><rect x="11" y="5" width="1" height="1" fill="#fff"/><rect x="12" y="5" width="1" height="1" fill="#ff00ff"/><rect x="13" y="5" width="1" height="1" fill="#fff"/><rect x="14" y="5" width="1" height="1" fill="#ff00ff"/><rect x="15" y="5" width="1" height="1" fill="#000"/><rect x="3" y="6" width="1" height="1" fill="#000"/><rect x="4" y="6" width="1" height="1" fill="#fff"/><rect x="5" y="6" width="1" height="1" fill="#ff00ff"/><rect x="6" y="6" width="1" height="1" fill="#fff"/><rect x="7" y="6" width="1" height="1" fill="#ff00ff"/><rect x="8" y="6" width="1" height="1" fill="#fff"/><rect x="9" y="6" width="1" height="1" fill="#ff00ff"/><rect x="10" y="6" width="1" height="1" fill="#fff"/><rect x="11" y="6" width="1" height="1" fill="#ff00ff"/><rect x="12" y="6" width="1" height="1" fill="#fff"/><rect x="13" y="6" width="1" height="1" fill="#ff00ff"/><rect x="14" y="6" width="1" height="1" fill="#fff"/><rect x="15" y="6" width="1" height="1" fill="#000"/><rect x="3" y="7" width="1" height="1" fill="#000"/><rect x="4" y="7" width="1" height="1" fill="#ff00ff"/><rect x="5" y="7" width="1" height="1" fill="#fff"/><rect x="6" y="7" width="1" height="1" fill="#ff00ff"/><rect x="7" y="7" width="1" height="1" fill="#fff"/><rect x="8" y="7" width="1" height="1" fill="#ff00ff"/><rect x="9" y="7" width="1" height="1" fill="#fff"/><rect x="10" y="7" width="1" height="1" fill="#ff00ff"/><rect x="11" y="7" width="1" height="1" fill="#fff"/><rect x="12" y="7" width="1" height="1" fill="#ff00ff"/><rect x="13" y="7" width="1" height="1" fill="#fff"/><rect x="14" y="7" width="1" height="1" fill="#ff00ff"/><rect x="15" y="7" width="2" height="1" fill="#000"/><rect x="0" y="8" width="1" height="1" fill="#969696"/><rect x="3" y="8" width="1" height="1" fill="#000"/><rect x="4" y="8" width="1" height="1" fill="#fff"/><rect x="5" y="8" width="1" height="1" fill="#ff00ff"/><rect x="6" y="8" width="1" height="1" fill="#fff"/><rect x="7" y="8" width="1" height="1" fill="#ff00ff"/><rect x="8" y="8" width="1" height="1" fill="#fff"/><rect x="9" y="8" width="1" height="1" fill="#ff00ff"/><rect x="10" y="8" width="1" height="1" fill="#fff"/><rect x="11" y="8" width="1" height="1" fill="#ff00ff"/><rect x="12" y="8" width="1" height="1" fill="#fff"/><rect x="13" y="8" width="1" height="1" fill="#000"/><rect x="14" y="8" width="2" height="1" fill="#fff"/><rect x="16" y="8" width="1" height="1" fill="#000"/><rect x="1" y="9" width="3" height="1" fill="#969696"/><rect x="4" y="9" width="1" height="1" fill="#ff00ff"/><rect x="5" y="9" width="1" height="1" fill="#fff"/><rect x="6" y="9" width="1" height="1" fill="#ff00ff"/><rect x="7" y="9" width="1" height="1" fill="#fff"/><rect x="8" y="9" width="1" height="1" fill="#ff00ff"/><rect x="9" y="9" width="1" height="1" fill="#fff"/><rect x="10" y="9" width="1" height="1" fill="#ff00ff"/><rect x="11" y="9" width="1" height="1" fill="#fff"/><rect x="12" y="9" width="1" height="1" fill="#ff00ff"/><rect x="13" y="9" width="1" height="1" fill="#fff"/><rect x="14" y="9" width="1" height="1" fill="#cccccc"/><rect x="15" y="9" width="1" height="1" fill="#fff"/><rect x="16" y="9" width="1" height="1" fill="#000"/><rect x="1" y="10" width="1" height="1" fill="#969696"/><rect x="2" y="10" width="1" height="1" fill="#cccccc"/><rect x="3" y="10" width="2" height="1" fill="#fff"/><rect x="5" y="10" width="1" height="1" fill="#ff00ff"/><rect x="6" y="10" width="1" height="1" fill="#fff"/><rect x="7" y="10" width="1" height="1" fill="#ff00ff"/><rect x="8" y="10" width="1" height="1" fill="#fff"/><rect x="9" y="10" width="1" height="1" fill="#ff00ff"/><rect x="10" y="10" width="1" height="1" fill="#fff"/><rect x="11" y="10" width="1" height="1" fill="#ff00ff"/><rect x="12" y="10" width="2" height="1" fill="#fff"/><rect x="14" y="10" width="2" height="1" fill="#cccccc"/><rect x="16" y="10" width="1" height="1" fill="#000"/><rect x="1" y="11" width="1" height="1" fill="#969696"/><rect x="2" y="11" width="1" height="1" fill="#cccccc"/><rect x="3" y="11" width="1" height="1" fill="#fff"/><rect x="4" y="11" width="7" height="1" fill="#969696"/><rect x="11" y="11" width="2" height="1" fill="#fff"/><rect x="13" y="11" width="3" height="1" fill="#cccccc"/><rect x="16" y="11" width="1" height="1" fill="#000"/><rect x="1" y="12" width="1" height="1" fill="#969696"/><rect x="2" y="12" width="2" height="1" fill="#cccccc"/><rect x="4" y="12" width="1" height="1" fill="#fff"/><rect x="5" y="12" width="1" height="1" fill="#cccccc"/><rect x="6" y="12" width="1" height="1" fill="#fff"/><rect x="7" y="12" width="1" height="1" fill="#cccccc"/><rect x="8" y="12" width="1" height="1" fill="#fff"/><rect x="9" y="12" width="1" height="1" fill="#cccccc"/><rect x="10" y="12" width="1" height="1" fill="#fff"/><rect x="11" y="12" width="1" height="1" fill="#cccccc"/><rect x="12" y="12" width="1" height="1" fill="#fff"/><rect x="13" y="12" width="3" height="1" fill="#cccccc"/><rect x="16" y="12" width="1" height="1" fill="#000"/><rect x="1" y="13" width="1" height="1" fill="#969696"/><rect x="2" y="13" width="13" height="1" fill="#cccccc"/><rect x="15" y="13" width="1" height="1" fill="#000"/><rect x="2" y="14" width="13" height="1" fill="#000"/></svg>
<div class="det" style="left:65px;top:352px;color:#969600">DVMRP: Reserved      = 0x010E</div>
<svg style="left:43px;top:349px;" width="17" height="15" shape-rendering="crispEdges"><rect x="3" y="0" width="10" height="1" fill="#000"/><rect x="3" y="1" width="1" height="1" fill="#000"/><rect x="4" y="1" width="1" height="1" fill="#ff00ff"/><rect x="5" y="1" width="1" height="1" fill="#fff"/><rect x="6" y="1" width="1" height="1" fill="#ff00ff"/><rect x="7" y="1" width="1" height="1" fill="#fff"/><rect x="8" y="1" width="1" height="1" fill="#ff00ff"/><rect x="9" y="1" width="1" height="1" fill="#fff"/><rect x="10" y="1" width="1" height="1" fill="#ff00ff"/><rect x="11" y="1" width="1" height="1" fill="#fff"/><rect x="12" y="1" width="1" height="1" fill="#ff00ff"/><rect x="13" y="1" width="1" height="1" fill="#000"/><rect x="14" y="1" width="1" height="1" fill="#fff"/><rect x="3" y="2" width="1" height="1" fill="#000"/><rect x="4" y="2" width="1" height="1" fill="#fff"/><rect x="5" y="2" width="1" height="1" fill="#ff00ff"/><rect x="6" y="2" width="1" height="1" fill="#fff"/><rect x="7" y="2" width="1" height="1" fill="#ff00ff"/><rect x="8" y="2" width="1" height="1" fill="#fff"/><rect x="9" y="2" width="1" height="1" fill="#ff00ff"/><rect x="10" y="2" width="1" height="1" fill="#fff"/><rect x="11" y="2" width="1" height="1" fill="#ff00ff"/><rect x="12" y="2" width="1" height="1" fill="#000"/><rect x="13" y="2" width="2" height="1" fill="#fff"/><rect x="15" y="2" width="1" height="1" fill="#000"/><rect x="3" y="3" width="1" height="1" fill="#000"/><rect x="4" y="3" width="1" height="1" fill="#ff00ff"/><rect x="5" y="3" width="1" height="1" fill="#fff"/><rect x="6" y="3" width="1" height="1" fill="#ff00ff"/><rect x="7" y="3" width="1" height="1" fill="#fff"/><rect x="8" y="3" width="1" height="1" fill="#ff00ff"/><rect x="9" y="3" width="1" height="1" fill="#fff"/><rect x="10" y="3" width="1" height="1" fill="#ff00ff"/><rect x="11" y="3" width="1" height="1" fill="#fff"/><rect x="12" y="3" width="4" height="1" fill="#000"/><rect x="3" y="4" width="1" height="1" fill="#000"/><rect x="4" y="4" width="1" height="1" fill="#fff"/><rect x="5" y="4" width="1" height="1" fill="#ff00ff"/><rect x="6" y="4" width="1" height="1" fill="#fff"/><rect x="7" y="4" width="1" height="1" fill="#ff00ff"/><rect x="8" y="4" width="1" height="1" fill="#fff"/><rect x="9" y="4" width="1" height="1" fill="#ff00ff"/><rect x="10" y="4" width="1" height="1" fill="#fff"/><rect x="11" y="4" width="1" height="1" fill="#ff00ff"/><rect x="12" y="4" width="1" height="1" fill="#fff"/><rect x="13" y="4" width="1" height="1" fill="#ff00ff"/><rect x="14" y="4" width="1" height="1" fill="#fff"/><rect x="15" y="4" width="1" height="1" fill="#000"/><rect x="3" y="5" width="1" height="1" fill="#000"/><rect x="4" y="5" width="1" height="1" fill="#ff00ff"/><rect x="5" y="5" width="1" height="1" fill="#fff"/><rect x="6" y="5" width="1" height="1" fill="#ff00ff"/><rect x="7" y="5" width="1" height="1" fill="#fff"/><rect x="8" y="5" width="1" height="1" fill="#ff00ff"/><rect x="9" y="5" width="1" height="1" fill="#fff"/><rect x="10" y="5" width="1" height="1" fill="#ff00ff"/><rect x="11" y="5" width="1" height="1" fill="#fff"/><rect x="12" y="5" width="1" height="1" fill="#ff00ff"/><rect x="13" y="5" width="1" height="1" fill="#fff"/><rect x="14" y="5" width="1" height="1" fill="#ff00ff"/><rect x="15" y="5" width="1" height="1" fill="#000"/><rect x="3" y="6" width="1" height="1" fill="#000"/><rect x="4" y="6" width="1" height="1" fill="#fff"/><rect x="5" y="6" width="1" height="1" fill="#ff00ff"/><rect x="6" y="6" width="1" height="1" fill="#fff"/><rect x="7" y="6" width="1" height="1" fill="#ff00ff"/><rect x="8" y="6" width="1" height="1" fill="#fff"/><rect x="9" y="6" width="1" height="1" fill="#ff00ff"/><rect x="10" y="6" width="1" height="1" fill="#fff"/><rect x="11" y="6" width="1" height="1" fill="#ff00ff"/><rect x="12" y="6" width="1" height="1" fill="#fff"/><rect x="13" y="6" width="1" height="1" fill="#ff00ff"/><rect x="14" y="6" width="1" height="1" fill="#fff"/><rect x="15" y="6" width="1" height="1" fill="#000"/><rect x="3" y="7" width="1" height="1" fill="#000"/><rect x="4" y="7" width="1" height="1" fill="#ff00ff"/><rect x="5" y="7" width="1" height="1" fill="#fff"/><rect x="6" y="7" width="1" height="1" fill="#ff00ff"/><rect x="7" y="7" width="1" height="1" fill="#fff"/><rect x="8" y="7" width="1" height="1" fill="#ff00ff"/><rect x="9" y="7" width="1" height="1" fill="#fff"/><rect x="10" y="7" width="1" height="1" fill="#ff00ff"/><rect x="11" y="7" width="1" height="1" fill="#fff"/><rect x="12" y="7" width="1" height="1" fill="#ff00ff"/><rect x="13" y="7" width="1" height="1" fill="#fff"/><rect x="14" y="7" width="1" height="1" fill="#ff00ff"/><rect x="15" y="7" width="2" height="1" fill="#000"/><rect x="0" y="8" width="1" height="1" fill="#969696"/><rect x="3" y="8" width="1" height="1" fill="#000"/><rect x="4" y="8" width="1" height="1" fill="#fff"/><rect x="5" y="8" width="1" height="1" fill="#ff00ff"/><rect x="6" y="8" width="1" height="1" fill="#fff"/><rect x="7" y="8" width="1" height="1" fill="#ff00ff"/><rect x="8" y="8" width="1" height="1" fill="#fff"/><rect x="9" y="8" width="1" height="1" fill="#ff00ff"/><rect x="10" y="8" width="1" height="1" fill="#fff"/><rect x="11" y="8" width="1" height="1" fill="#ff00ff"/><rect x="12" y="8" width="1" height="1" fill="#fff"/><rect x="13" y="8" width="1" height="1" fill="#000"/><rect x="14" y="8" width="2" height="1" fill="#fff"/><rect x="16" y="8" width="1" height="1" fill="#000"/><rect x="1" y="9" width="3" height="1" fill="#969696"/><rect x="4" y="9" width="1" height="1" fill="#ff00ff"/><rect x="5" y="9" width="1" height="1" fill="#fff"/><rect x="6" y="9" width="1" height="1" fill="#ff00ff"/><rect x="7" y="9" width="1" height="1" fill="#fff"/><rect x="8" y="9" width="1" height="1" fill="#ff00ff"/><rect x="9" y="9" width="1" height="1" fill="#fff"/><rect x="10" y="9" width="1" height="1" fill="#ff00ff"/><rect x="11" y="9" width="1" height="1" fill="#fff"/><rect x="12" y="9" width="1" height="1" fill="#ff00ff"/><rect x="13" y="9" width="1" height="1" fill="#fff"/><rect x="14" y="9" width="1" height="1" fill="#cccccc"/><rect x="15" y="9" width="1" height="1" fill="#fff"/><rect x="16" y="9" width="1" height="1" fill="#000"/><rect x="1" y="10" width="1" height="1" fill="#969696"/><rect x="2" y="10" width="1" height="1" fill="#cccccc"/><rect x="3" y="10" width="2" height="1" fill="#fff"/><rect x="5" y="10" width="1" height="1" fill="#ff00ff"/><rect x="6" y="10" width="1" height="1" fill="#fff"/><rect x="7" y="10" width="1" height="1" fill="#ff00ff"/><rect x="8" y="10" width="1" height="1" fill="#fff"/><rect x="9" y="10" width="1" height="1" fill="#ff00ff"/><rect x="10" y="10" width="1" height="1" fill="#fff"/><rect x="11" y="10" width="1" height="1" fill="#ff00ff"/><rect x="12" y="10" width="2" height="1" fill="#fff"/><rect x="14" y="10" width="2" height="1" fill="#cccccc"/><rect x="16" y="10" width="1" height="1" fill="#000"/><rect x="1" y="11" width="1" height="1" fill="#969696"/><rect x="2" y="11" width="1" height="1" fill="#cccccc"/><rect x="3" y="11" width="1" height="1" fill="#fff"/><rect x="4" y="11" width="7" height="1" fill="#969696"/><rect x="11" y="11" width="2" height="1" fill="#fff"/><rect x="13" y="11" width="3" height="1" fill="#cccccc"/><rect x="16" y="11" width="1" height="1" fill="#000"/><rect x="1" y="12" width="1" height="1" fill="#969696"/><rect x="2" y="12" width="2" height="1" fill="#cccccc"/><rect x="4" y="12" width="1" height="1" fill="#fff"/><rect x="5" y="12" width="1" height="1" fill="#cccccc"/><rect x="6" y="12" width="1" height="1" fill="#fff"/><rect x="7" y="12" width="1" height="1" fill="#cccccc"/><rect x="8" y="12" width="1" height="1" fill="#fff"/><rect x="9" y="12" width="1" height="1" fill="#cccccc"/><rect x="10" y="12" width="1" height="1" fill="#fff"/><rect x="11" y="12" width="1" height="1" fill="#cccccc"/><rect x="12" y="12" width="1" height="1" fill="#fff"/><rect x="13" y="12" width="3" height="1" fill="#cccccc"/><rect x="16" y="12" width="1" height="1" fill="#000"/><rect x="1" y="13" width="1" height="1" fill="#969696"/><rect x="2" y="13" width="13" height="1" fill="#cccccc"/><rect x="15" y="13" width="1" height="1" fill="#000"/><rect x="2" y="14" width="13" height="1" fill="#000"/></svg>
<div class="det" style="left:65px;top:368px;color:#969600">DVMRP: Minor Version = 8</div>
<svg style="left:43px;top:365px;" width="17" height="15" shape-rendering="crispEdges"><rect x="3" y="0" width="10" height="1" fill="#000"/><rect x="3" y="1" width="1" height="1" fill="#000"/><rect x="4" y="1" width="1" height="1" fill="#ff00ff"/><rect x="5" y="1" width="1" height="1" fill="#fff"/><rect x="6" y="1" width="1" height="1" fill="#ff00ff"/><rect x="7" y="1" width="1" height="1" fill="#fff"/><rect x="8" y="1" width="1" height="1" fill="#ff00ff"/><rect x="9" y="1" width="1" height="1" fill="#fff"/><rect x="10" y="1" width="1" height="1" fill="#ff00ff"/><rect x="11" y="1" width="1" height="1" fill="#fff"/><rect x="12" y="1" width="1" height="1" fill="#ff00ff"/><rect x="13" y="1" width="1" height="1" fill="#000"/><rect x="14" y="1" width="1" height="1" fill="#fff"/><rect x="3" y="2" width="1" height="1" fill="#000"/><rect x="4" y="2" width="1" height="1" fill="#fff"/><rect x="5" y="2" width="1" height="1" fill="#ff00ff"/><rect x="6" y="2" width="1" height="1" fill="#fff"/><rect x="7" y="2" width="1" height="1" fill="#ff00ff"/><rect x="8" y="2" width="1" height="1" fill="#fff"/><rect x="9" y="2" width="1" height="1" fill="#ff00ff"/><rect x="10" y="2" width="1" height="1" fill="#fff"/><rect x="11" y="2" width="1" height="1" fill="#ff00ff"/><rect x="12" y="2" width="1" height="1" fill="#000"/><rect x="13" y="2" width="2" height="1" fill="#fff"/><rect x="15" y="2" width="1" height="1" fill="#000"/><rect x="3" y="3" width="1" height="1" fill="#000"/><rect x="4" y="3" width="1" height="1" fill="#ff00ff"/><rect x="5" y="3" width="1" height="1" fill="#fff"/><rect x="6" y="3" width="1" height="1" fill="#ff00ff"/><rect x="7" y="3" width="1" height="1" fill="#fff"/><rect x="8" y="3" width="1" height="1" fill="#ff00ff"/><rect x="9" y="3" width="1" height="1" fill="#fff"/><rect x="10" y="3" width="1" height="1" fill="#ff00ff"/><rect x="11" y="3" width="1" height="1" fill="#fff"/><rect x="12" y="3" width="4" height="1" fill="#000"/><rect x="3" y="4" width="1" height="1" fill="#000"/><rect x="4" y="4" width="1" height="1" fill="#fff"/><rect x="5" y="4" width="1" height="1" fill="#ff00ff"/><rect x="6" y="4" width="1" height="1" fill="#fff"/><rect x="7" y="4" width="1" height="1" fill="#ff00ff"/><rect x="8" y="4" width="1" height="1" fill="#fff"/><rect x="9" y="4" width="1" height="1" fill="#ff00ff"/><rect x="10" y="4" width="1" height="1" fill="#fff"/><rect x="11" y="4" width="1" height="1" fill="#ff00ff"/><rect x="12" y="4" width="1" height="1" fill="#fff"/><rect x="13" y="4" width="1" height="1" fill="#ff00ff"/><rect x="14" y="4" width="1" height="1" fill="#fff"/><rect x="15" y="4" width="1" height="1" fill="#000"/><rect x="3" y="5" width="1" height="1" fill="#000"/><rect x="4" y="5" width="1" height="1" fill="#ff00ff"/><rect x="5" y="5" width="1" height="1" fill="#fff"/><rect x="6" y="5" width="1" height="1" fill="#ff00ff"/><rect x="7" y="5" width="1" height="1" fill="#fff"/><rect x="8" y="5" width="1" height="1" fill="#ff00ff"/><rect x="9" y="5" width="1" height="1" fill="#fff"/><rect x="10" y="5" width="1" height="1" fill="#ff00ff"/><rect x="11" y="5" width="1" height="1" fill="#fff"/><rect x="12" y="5" width="1" height="1" fill="#ff00ff"/><rect x="13" y="5" width="1" height="1" fill="#fff"/><rect x="14" y="5" width="1" height="1" fill="#ff00ff"/><rect x="15" y="5" width="1" height="1" fill="#000"/><rect x="3" y="6" width="1" height="1" fill="#000"/><rect x="4" y="6" width="1" height="1" fill="#fff"/><rect x="5" y="6" width="1" height="1" fill="#ff00ff"/><rect x="6" y="6" width="1" height="1" fill="#fff"/><rect x="7" y="6" width="1" height="1" fill="#ff00ff"/><rect x="8" y="6" width="1" height="1" fill="#fff"/><rect x="9" y="6" width="1" height="1" fill="#ff00ff"/><rect x="10" y="6" width="1" height="1" fill="#fff"/><rect x="11" y="6" width="1" height="1" fill="#ff00ff"/><rect x="12" y="6" width="1" height="1" fill="#fff"/><rect x="13" y="6" width="1" height="1" fill="#ff00ff"/><rect x="14" y="6" width="1" height="1" fill="#fff"/><rect x="15" y="6" width="1" height="1" fill="#000"/><rect x="3" y="7" width="1" height="1" fill="#000"/><rect x="4" y="7" width="1" height="1" fill="#ff00ff"/><rect x="5" y="7" width="1" height="1" fill="#fff"/><rect x="6" y="7" width="1" height="1" fill="#ff00ff"/><rect x="7" y="7" width="1" height="1" fill="#fff"/><rect x="8" y="7" width="1" height="1" fill="#ff00ff"/><rect x="9" y="7" width="1" height="1" fill="#fff"/><rect x="10" y="7" width="1" height="1" fill="#ff00ff"/><rect x="11" y="7" width="1" height="1" fill="#fff"/><rect x="12" y="7" width="1" height="1" fill="#ff00ff"/><rect x="13" y="7" width="1" height="1" fill="#fff"/><rect x="14" y="7" width="1" height="1" fill="#ff00ff"/><rect x="15" y="7" width="2" height="1" fill="#000"/><rect x="0" y="8" width="1" height="1" fill="#969696"/><rect x="3" y="8" width="1" height="1" fill="#000"/><rect x="4" y="8" width="1" height="1" fill="#fff"/><rect x="5" y="8" width="1" height="1" fill="#ff00ff"/><rect x="6" y="8" width="1" height="1" fill="#fff"/><rect x="7" y="8" width="1" height="1" fill="#ff00ff"/><rect x="8" y="8" width="1" height="1" fill="#fff"/><rect x="9" y="8" width="1" height="1" fill="#ff00ff"/><rect x="10" y="8" width="1" height="1" fill="#fff"/><rect x="11" y="8" width="1" height="1" fill="#ff00ff"/><rect x="12" y="8" width="1" height="1" fill="#fff"/><rect x="13" y="8" width="1" height="1" fill="#000"/><rect x="14" y="8" width="2" height="1" fill="#fff"/><rect x="16" y="8" width="1" height="1" fill="#000"/><rect x="1" y="9" width="3" height="1" fill="#969696"/><rect x="4" y="9" width="1" height="1" fill="#ff00ff"/><rect x="5" y="9" width="1" height="1" fill="#fff"/><rect x="6" y="9" width="1" height="1" fill="#ff00ff"/><rect x="7" y="9" width="1" height="1" fill="#fff"/><rect x="8" y="9" width="1" height="1" fill="#ff00ff"/><rect x="9" y="9" width="1" height="1" fill="#fff"/><rect x="10" y="9" width="1" height="1" fill="#ff00ff"/><rect x="11" y="9" width="1" height="1" fill="#fff"/><rect x="12" y="9" width="1" height="1" fill="#ff00ff"/><rect x="13" y="9" width="1" height="1" fill="#fff"/><rect x="14" y="9" width="1" height="1" fill="#cccccc"/><rect x="15" y="9" width="1" height="1" fill="#fff"/><rect x="16" y="9" width="1" height="1" fill="#000"/><rect x="1" y="10" width="1" height="1" fill="#969696"/><rect x="2" y="10" width="1" height="1" fill="#cccccc"/><rect x="3" y="10" width="2" height="1" fill="#fff"/><rect x="5" y="10" width="1" height="1" fill="#ff00ff"/><rect x="6" y="10" width="1" height="1" fill="#fff"/><rect x="7" y="10" width="1" height="1" fill="#ff00ff"/><rect x="8" y="10" width="1" height="1" fill="#fff"/><rect x="9" y="10" width="1" height="1" fill="#ff00ff"/><rect x="10" y="10" width="1" height="1" fill="#fff"/><rect x="11" y="10" width="1" height="1" fill="#ff00ff"/><rect x="12" y="10" width="2" height="1" fill="#fff"/><rect x="14" y="10" width="2" height="1" fill="#cccccc"/><rect x="16" y="10" width="1" height="1" fill="#000"/><rect x="1" y="11" width="1" height="1" fill="#969696"/><rect x="2" y="11" width="1" height="1" fill="#cccccc"/><rect x="3" y="11" width="1" height="1" fill="#fff"/><rect x="4" y="11" width="7" height="1" fill="#969696"/><rect x="11" y="11" width="2" height="1" fill="#fff"/><rect x="13" y="11" width="3" height="1" fill="#cccccc"/><rect x="16" y="11" width="1" height="1" fill="#000"/><rect x="1" y="12" width="1" height="1" fill="#969696"/><rect x="2" y="12" width="2" height="1" fill="#cccccc"/><rect x="4" y="12" width="1" height="1" fill="#fff"/><rect x="5" y="12" width="1" height="1" fill="#cccccc"/><rect x="6" y="12" width="1" height="1" fill="#fff"/><rect x="7" y="12" width="1" height="1" fill="#cccccc"/><rect x="8" y="12" width="1" height="1" fill="#fff"/><rect x="9" y="12" width="1" height="1" fill="#cccccc"/><rect x="10" y="12" width="1" height="1" fill="#fff"/><rect x="11" y="12" width="1" height="1" fill="#cccccc"/><rect x="12" y="12" width="1" height="1" fill="#fff"/><rect x="13" y="12" width="3" height="1" fill="#cccccc"/><rect x="16" y="12" width="1" height="1" fill="#000"/><rect x="1" y="13" width="1" height="1" fill="#969696"/><rect x="2" y="13" width="13" height="1" fill="#cccccc"/><rect x="15" y="13" width="1" height="1" fill="#000"/><rect x="2" y="14" width="13" height="1" fill="#000"/></svg>
<div class="det" style="left:65px;top:384px;color:#969600">DVMRP: Major Version = 3</div>
<svg style="left:43px;top:381px;" width="17" height="15" shape-rendering="crispEdges"><rect x="3" y="0" width="10" height="1" fill="#000"/><rect x="3" y="1" width="1" height="1" fill="#000"/><rect x="4" y="1" width="1" height="1" fill="#ff00ff"/><rect x="5" y="1" width="1" height="1" fill="#fff"/><rect x="6" y="1" width="1" height="1" fill="#ff00ff"/><rect x="7" y="1" width="1" height="1" fill="#fff"/><rect x="8" y="1" width="1" height="1" fill="#ff00ff"/><rect x="9" y="1" width="1" height="1" fill="#fff"/><rect x="10" y="1" width="1" height="1" fill="#ff00ff"/><rect x="11" y="1" width="1" height="1" fill="#fff"/><rect x="12" y="1" width="1" height="1" fill="#ff00ff"/><rect x="13" y="1" width="1" height="1" fill="#000"/><rect x="14" y="1" width="1" height="1" fill="#fff"/><rect x="3" y="2" width="1" height="1" fill="#000"/><rect x="4" y="2" width="1" height="1" fill="#fff"/><rect x="5" y="2" width="1" height="1" fill="#ff00ff"/><rect x="6" y="2" width="1" height="1" fill="#fff"/><rect x="7" y="2" width="1" height="1" fill="#ff00ff"/><rect x="8" y="2" width="1" height="1" fill="#fff"/><rect x="9" y="2" width="1" height="1" fill="#ff00ff"/><rect x="10" y="2" width="1" height="1" fill="#fff"/><rect x="11" y="2" width="1" height="1" fill="#ff00ff"/><rect x="12" y="2" width="1" height="1" fill="#000"/><rect x="13" y="2" width="2" height="1" fill="#fff"/><rect x="15" y="2" width="1" height="1" fill="#000"/><rect x="3" y="3" width="1" height="1" fill="#000"/><rect x="4" y="3" width="1" height="1" fill="#ff00ff"/><rect x="5" y="3" width="1" height="1" fill="#fff"/><rect x="6" y="3" width="1" height="1" fill="#ff00ff"/><rect x="7" y="3" width="1" height="1" fill="#fff"/><rect x="8" y="3" width="1" height="1" fill="#ff00ff"/><rect x="9" y="3" width="1" height="1" fill="#fff"/><rect x="10" y="3" width="1" height="1" fill="#ff00ff"/><rect x="11" y="3" width="1" height="1" fill="#fff"/><rect x="12" y="3" width="4" height="1" fill="#000"/><rect x="3" y="4" width="1" height="1" fill="#000"/><rect x="4" y="4" width="1" height="1" fill="#fff"/><rect x="5" y="4" width="1" height="1" fill="#ff00ff"/><rect x="6" y="4" width="1" height="1" fill="#fff"/><rect x="7" y="4" width="1" height="1" fill="#ff00ff"/><rect x="8" y="4" width="1" height="1" fill="#fff"/><rect x="9" y="4" width="1" height="1" fill="#ff00ff"/><rect x="10" y="4" width="1" height="1" fill="#fff"/><rect x="11" y="4" width="1" height="1" fill="#ff00ff"/><rect x="12" y="4" width="1" height="1" fill="#fff"/><rect x="13" y="4" width="1" height="1" fill="#ff00ff"/><rect x="14" y="4" width="1" height="1" fill="#fff"/><rect x="15" y="4" width="1" height="1" fill="#000"/><rect x="3" y="5" width="1" height="1" fill="#000"/><rect x="4" y="5" width="1" height="1" fill="#ff00ff"/><rect x="5" y="5" width="1" height="1" fill="#fff"/><rect x="6" y="5" width="1" height="1" fill="#ff00ff"/><rect x="7" y="5" width="1" height="1" fill="#fff"/><rect x="8" y="5" width="1" height="1" fill="#ff00ff"/><rect x="9" y="5" width="1" height="1" fill="#fff"/><rect x="10" y="5" width="1" height="1" fill="#ff00ff"/><rect x="11" y="5" width="1" height="1" fill="#fff"/><rect x="12" y="5" width="1" height="1" fill="#ff00ff"/><rect x="13" y="5" width="1" height="1" fill="#fff"/><rect x="14" y="5" width="1" height="1" fill="#ff00ff"/><rect x="15" y="5" width="1" height="1" fill="#000"/><rect x="3" y="6" width="1" height="1" fill="#000"/><rect x="4" y="6" width="1" height="1" fill="#fff"/><rect x="5" y="6" width="1" height="1" fill="#ff00ff"/><rect x="6" y="6" width="1" height="1" fill="#fff"/><rect x="7" y="6" width="1" height="1" fill="#ff00ff"/><rect x="8" y="6" width="1" height="1" fill="#fff"/><rect x="9" y="6" width="1" height="1" fill="#ff00ff"/><rect x="10" y="6" width="1" height="1" fill="#fff"/><rect x="11" y="6" width="1" height="1" fill="#ff00ff"/><rect x="12" y="6" width="1" height="1" fill="#fff"/><rect x="13" y="6" width="1" height="1" fill="#ff00ff"/><rect x="14" y="6" width="1" height="1" fill="#fff"/><rect x="15" y="6" width="1" height="1" fill="#000"/><rect x="3" y="7" width="1" height="1" fill="#000"/><rect x="4" y="7" width="1" height="1" fill="#ff00ff"/><rect x="5" y="7" width="1" height="1" fill="#fff"/><rect x="6" y="7" width="1" height="1" fill="#ff00ff"/><rect x="7" y="7" width="1" height="1" fill="#fff"/><rect x="8" y="7" width="1" height="1" fill="#ff00ff"/><rect x="9" y="7" width="1" height="1" fill="#fff"/><rect x="10" y="7" width="1" height="1" fill="#ff00ff"/><rect x="11" y="7" width="1" height="1" fill="#fff"/><rect x="12" y="7" width="1" height="1" fill="#ff00ff"/><rect x="13" y="7" width="1" height="1" fill="#fff"/><rect x="14" y="7" width="1" height="1" fill="#ff00ff"/><rect x="15" y="7" width="2" height="1" fill="#000"/><rect x="0" y="8" width="1" height="1" fill="#969696"/><rect x="3" y="8" width="1" height="1" fill="#000"/><rect x="4" y="8" width="1" height="1" fill="#fff"/><rect x="5" y="8" width="1" height="1" fill="#ff00ff"/><rect x="6" y="8" width="1" height="1" fill="#fff"/><rect x="7" y="8" width="1" height="1" fill="#ff00ff"/><rect x="8" y="8" width="1" height="1" fill="#fff"/><rect x="9" y="8" width="1" height="1" fill="#ff00ff"/><rect x="10" y="8" width="1" height="1" fill="#fff"/><rect x="11" y="8" width="1" height="1" fill="#ff00ff"/><rect x="12" y="8" width="1" height="1" fill="#fff"/><rect x="13" y="8" width="1" height="1" fill="#000"/><rect x="14" y="8" width="2" height="1" fill="#fff"/><rect x="16" y="8" width="1" height="1" fill="#000"/><rect x="1" y="9" width="3" height="1" fill="#969696"/><rect x="4" y="9" width="1" height="1" fill="#ff00ff"/><rect x="5" y="9" width="1" height="1" fill="#fff"/><rect x="6" y="9" width="1" height="1" fill="#ff00ff"/><rect x="7" y="9" width="1" height="1" fill="#fff"/><rect x="8" y="9" width="1" height="1" fill="#ff00ff"/><rect x="9" y="9" width="1" height="1" fill="#fff"/><rect x="10" y="9" width="1" height="1" fill="#ff00ff"/><rect x="11" y="9" width="1" height="1" fill="#fff"/><rect x="12" y="9" width="1" height="1" fill="#ff00ff"/><rect x="13" y="9" width="1" height="1" fill="#fff"/><rect x="14" y="9" width="1" height="1" fill="#cccccc"/><rect x="15" y="9" width="1" height="1" fill="#fff"/><rect x="16" y="9" width="1" height="1" fill="#000"/><rect x="1" y="10" width="1" height="1" fill="#969696"/><rect x="2" y="10" width="1" height="1" fill="#cccccc"/><rect x="3" y="10" width="2" height="1" fill="#fff"/><rect x="5" y="10" width="1" height="1" fill="#ff00ff"/><rect x="6" y="10" width="1" height="1" fill="#fff"/><rect x="7" y="10" width="1" height="1" fill="#ff00ff"/><rect x="8" y="10" width="1" height="1" fill="#fff"/><rect x="9" y="10" width="1" height="1" fill="#ff00ff"/><rect x="10" y="10" width="1" height="1" fill="#fff"/><rect x="11" y="10" width="1" height="1" fill="#ff00ff"/><rect x="12" y="10" width="2" height="1" fill="#fff"/><rect x="14" y="10" width="2" height="1" fill="#cccccc"/><rect x="16" y="10" width="1" height="1" fill="#000"/><rect x="1" y="11" width="1" height="1" fill="#969696"/><rect x="2" y="11" width="1" height="1" fill="#cccccc"/><rect x="3" y="11" width="1" height="1" fill="#fff"/><rect x="4" y="11" width="7" height="1" fill="#969696"/><rect x="11" y="11" width="2" height="1" fill="#fff"/><rect x="13" y="11" width="3" height="1" fill="#cccccc"/><rect x="16" y="11" width="1" height="1" fill="#000"/><rect x="1" y="12" width="1" height="1" fill="#969696"/><rect x="2" y="12" width="2" height="1" fill="#cccccc"/><rect x="4" y="12" width="1" height="1" fill="#fff"/><rect x="5" y="12" width="1" height="1" fill="#cccccc"/><rect x="6" y="12" width="1" height="1" fill="#fff"/><rect x="7" y="12" width="1" height="1" fill="#cccccc"/><rect x="8" y="12" width="1" height="1" fill="#fff"/><rect x="9" y="12" width="1" height="1" fill="#cccccc"/><rect x="10" y="12" width="1" height="1" fill="#fff"/><rect x="11" y="12" width="1" height="1" fill="#cccccc"/><rect x="12" y="12" width="1" height="1" fill="#fff"/><rect x="13" y="12" width="3" height="1" fill="#cccccc"/><rect x="16" y="12" width="1" height="1" fill="#000"/><rect x="1" y="13" width="1" height="1" fill="#969696"/><rect x="2" y="13" width="13" height="1" fill="#cccccc"/><rect x="15" y="13" width="1" height="1" fill="#000"/><rect x="2" y="14" width="13" height="1" fill="#000"/></svg>
<div class="det" style="left:65px;top:400px;color:#969600">DVMRP: Generation ID         = 0x13957E36</div>
<svg style="left:43px;top:397px;" width="17" height="15" shape-rendering="crispEdges"><rect x="3" y="0" width="10" height="1" fill="#000"/><rect x="3" y="1" width="1" height="1" fill="#000"/><rect x="4" y="1" width="1" height="1" fill="#ff00ff"/><rect x="5" y="1" width="1" height="1" fill="#fff"/><rect x="6" y="1" width="1" height="1" fill="#ff00ff"/><rect x="7" y="1" width="1" height="1" fill="#fff"/><rect x="8" y="1" width="1" height="1" fill="#ff00ff"/><rect x="9" y="1" width="1" height="1" fill="#fff"/><rect x="10" y="1" width="1" height="1" fill="#ff00ff"/><rect x="11" y="1" width="1" height="1" fill="#fff"/><rect x="12" y="1" width="1" height="1" fill="#ff00ff"/><rect x="13" y="1" width="1" height="1" fill="#000"/><rect x="14" y="1" width="1" height="1" fill="#fff"/><rect x="3" y="2" width="1" height="1" fill="#000"/><rect x="4" y="2" width="1" height="1" fill="#fff"/><rect x="5" y="2" width="1" height="1" fill="#ff00ff"/><rect x="6" y="2" width="1" height="1" fill="#fff"/><rect x="7" y="2" width="1" height="1" fill="#ff00ff"/><rect x="8" y="2" width="1" height="1" fill="#fff"/><rect x="9" y="2" width="1" height="1" fill="#ff00ff"/><rect x="10" y="2" width="1" height="1" fill="#fff"/><rect x="11" y="2" width="1" height="1" fill="#ff00ff"/><rect x="12" y="2" width="1" height="1" fill="#000"/><rect x="13" y="2" width="2" height="1" fill="#fff"/><rect x="15" y="2" width="1" height="1" fill="#000"/><rect x="3" y="3" width="1" height="1" fill="#000"/><rect x="4" y="3" width="1" height="1" fill="#ff00ff"/><rect x="5" y="3" width="1" height="1" fill="#fff"/><rect x="6" y="3" width="1" height="1" fill="#ff00ff"/><rect x="7" y="3" width="1" height="1" fill="#fff"/><rect x="8" y="3" width="1" height="1" fill="#ff00ff"/><rect x="9" y="3" width="1" height="1" fill="#fff"/><rect x="10" y="3" width="1" height="1" fill="#ff00ff"/><rect x="11" y="3" width="1" height="1" fill="#fff"/><rect x="12" y="3" width="4" height="1" fill="#000"/><rect x="3" y="4" width="1" height="1" fill="#000"/><rect x="4" y="4" width="1" height="1" fill="#fff"/><rect x="5" y="4" width="1" height="1" fill="#ff00ff"/><rect x="6" y="4" width="1" height="1" fill="#fff"/><rect x="7" y="4" width="1" height="1" fill="#ff00ff"/><rect x="8" y="4" width="1" height="1" fill="#fff"/><rect x="9" y="4" width="1" height="1" fill="#ff00ff"/><rect x="10" y="4" width="1" height="1" fill="#fff"/><rect x="11" y="4" width="1" height="1" fill="#ff00ff"/><rect x="12" y="4" width="1" height="1" fill="#fff"/><rect x="13" y="4" width="1" height="1" fill="#ff00ff"/><rect x="14" y="4" width="1" height="1" fill="#fff"/><rect x="15" y="4" width="1" height="1" fill="#000"/><rect x="3" y="5" width="1" height="1" fill="#000"/><rect x="4" y="5" width="1" height="1" fill="#ff00ff"/><rect x="5" y="5" width="1" height="1" fill="#fff"/><rect x="6" y="5" width="1" height="1" fill="#ff00ff"/><rect x="7" y="5" width="1" height="1" fill="#fff"/><rect x="8" y="5" width="1" height="1" fill="#ff00ff"/><rect x="9" y="5" width="1" height="1" fill="#fff"/><rect x="10" y="5" width="1" height="1" fill="#ff00ff"/><rect x="11" y="5" width="1" height="1" fill="#fff"/><rect x="12" y="5" width="1" height="1" fill="#ff00ff"/><rect x="13" y="5" width="1" height="1" fill="#fff"/><rect x="14" y="5" width="1" height="1" fill="#ff00ff"/><rect x="15" y="5" width="1" height="1" fill="#000"/><rect x="3" y="6" width="1" height="1" fill="#000"/><rect x="4" y="6" width="1" height="1" fill="#fff"/><rect x="5" y="6" width="1" height="1" fill="#ff00ff"/><rect x="6" y="6" width="1" height="1" fill="#fff"/><rect x="7" y="6" width="1" height="1" fill="#ff00ff"/><rect x="8" y="6" width="1" height="1" fill="#fff"/><rect x="9" y="6" width="1" height="1" fill="#ff00ff"/><rect x="10" y="6" width="1" height="1" fill="#fff"/><rect x="11" y="6" width="1" height="1" fill="#ff00ff"/><rect x="12" y="6" width="1" height="1" fill="#fff"/><rect x="13" y="6" width="1" height="1" fill="#ff00ff"/><rect x="14" y="6" width="1" height="1" fill="#fff"/><rect x="15" y="6" width="1" height="1" fill="#000"/><rect x="3" y="7" width="1" height="1" fill="#000"/><rect x="4" y="7" width="1" height="1" fill="#ff00ff"/><rect x="5" y="7" width="1" height="1" fill="#fff"/><rect x="6" y="7" width="1" height="1" fill="#ff00ff"/><rect x="7" y="7" width="1" height="1" fill="#fff"/><rect x="8" y="7" width="1" height="1" fill="#ff00ff"/><rect x="9" y="7" width="1" height="1" fill="#fff"/><rect x="10" y="7" width="1" height="1" fill="#ff00ff"/><rect x="11" y="7" width="1" height="1" fill="#fff"/><rect x="12" y="7" width="1" height="1" fill="#ff00ff"/><rect x="13" y="7" width="1" height="1" fill="#fff"/><rect x="14" y="7" width="1" height="1" fill="#ff00ff"/><rect x="15" y="7" width="2" height="1" fill="#000"/><rect x="0" y="8" width="1" height="1" fill="#969696"/><rect x="3" y="8" width="1" height="1" fill="#000"/><rect x="4" y="8" width="1" height="1" fill="#fff"/><rect x="5" y="8" width="1" height="1" fill="#ff00ff"/><rect x="6" y="8" width="1" height="1" fill="#fff"/><rect x="7" y="8" width="1" height="1" fill="#ff00ff"/><rect x="8" y="8" width="1" height="1" fill="#fff"/><rect x="9" y="8" width="1" height="1" fill="#ff00ff"/><rect x="10" y="8" width="1" height="1" fill="#fff"/><rect x="11" y="8" width="1" height="1" fill="#ff00ff"/><rect x="12" y="8" width="1" height="1" fill="#fff"/><rect x="13" y="8" width="1" height="1" fill="#000"/><rect x="14" y="8" width="2" height="1" fill="#fff"/><rect x="16" y="8" width="1" height="1" fill="#000"/><rect x="1" y="9" width="3" height="1" fill="#969696"/><rect x="4" y="9" width="1" height="1" fill="#ff00ff"/><rect x="5" y="9" width="1" height="1" fill="#fff"/><rect x="6" y="9" width="1" height="1" fill="#ff00ff"/><rect x="7" y="9" width="1" height="1" fill="#fff"/><rect x="8" y="9" width="1" height="1" fill="#ff00ff"/><rect x="9" y="9" width="1" height="1" fill="#fff"/><rect x="10" y="9" width="1" height="1" fill="#ff00ff"/><rect x="11" y="9" width="1" height="1" fill="#fff"/><rect x="12" y="9" width="1" height="1" fill="#ff00ff"/><rect x="13" y="9" width="1" height="1" fill="#fff"/><rect x="14" y="9" width="1" height="1" fill="#cccccc"/><rect x="15" y="9" width="1" height="1" fill="#fff"/><rect x="16" y="9" width="1" height="1" fill="#000"/><rect x="1" y="10" width="1" height="1" fill="#969696"/><rect x="2" y="10" width="1" height="1" fill="#cccccc"/><rect x="3" y="10" width="2" height="1" fill="#fff"/><rect x="5" y="10" width="1" height="1" fill="#ff00ff"/><rect x="6" y="10" width="1" height="1" fill="#fff"/><rect x="7" y="10" width="1" height="1" fill="#ff00ff"/><rect x="8" y="10" width="1" height="1" fill="#fff"/><rect x="9" y="10" width="1" height="1" fill="#ff00ff"/><rect x="10" y="10" width="1" height="1" fill="#fff"/><rect x="11" y="10" width="1" height="1" fill="#ff00ff"/><rect x="12" y="10" width="2" height="1" fill="#fff"/><rect x="14" y="10" width="2" height="1" fill="#cccccc"/><rect x="16" y="10" width="1" height="1" fill="#000"/><rect x="1" y="11" width="1" height="1" fill="#969696"/><rect x="2" y="11" width="1" height="1" fill="#cccccc"/><rect x="3" y="11" width="1" height="1" fill="#fff"/><rect x="4" y="11" width="7" height="1" fill="#969696"/><rect x="11" y="11" width="2" height="1" fill="#fff"/><rect x="13" y="11" width="3" height="1" fill="#cccccc"/><rect x="16" y="11" width="1" height="1" fill="#000"/><rect x="1" y="12" width="1" height="1" fill="#969696"/><rect x="2" y="12" width="2" height="1" fill="#cccccc"/><rect x="4" y="12" width="1" height="1" fill="#fff"/><rect x="5" y="12" width="1" height="1" fill="#cccccc"/><rect x="6" y="12" width="1" height="1" fill="#fff"/><rect x="7" y="12" width="1" height="1" fill="#cccccc"/><rect x="8" y="12" width="1" height="1" fill="#fff"/><rect x="9" y="12" width="1" height="1" fill="#cccccc"/><rect x="10" y="12" width="1" height="1" fill="#fff"/><rect x="11" y="12" width="1" height="1" fill="#cccccc"/><rect x="12" y="12" width="1" height="1" fill="#fff"/><rect x="13" y="12" width="3" height="1" fill="#cccccc"/><rect x="16" y="12" width="1" height="1" fill="#000"/><rect x="1" y="13" width="1" height="1" fill="#969696"/><rect x="2" y="13" width="13" height="1" fill="#cccccc"/><rect x="15" y="13" width="1" height="1" fill="#000"/><rect x="2" y="14" width="13" height="1" fill="#000"/></svg>
<div class="det" style="left:65px;top:416px;color:#969600">DVMRP:</div>
<svg style="left:43px;top:413px;" width="17" height="15" shape-rendering="crispEdges"><rect x="3" y="0" width="10" height="1" fill="#000"/><rect x="3" y="1" width="1" height="1" fill="#000"/><rect x="4" y="1" width="1" height="1" fill="#ff00ff"/><rect x="5" y="1" width="1" height="1" fill="#fff"/><rect x="6" y="1" width="1" height="1" fill="#ff00ff"/><rect x="7" y="1" width="1" height="1" fill="#fff"/><rect x="8" y="1" width="1" height="1" fill="#ff00ff"/><rect x="9" y="1" width="1" height="1" fill="#fff"/><rect x="10" y="1" width="1" height="1" fill="#ff00ff"/><rect x="11" y="1" width="1" height="1" fill="#fff"/><rect x="12" y="1" width="1" height="1" fill="#ff00ff"/><rect x="13" y="1" width="1" height="1" fill="#000"/><rect x="14" y="1" width="1" height="1" fill="#fff"/><rect x="3" y="2" width="1" height="1" fill="#000"/><rect x="4" y="2" width="1" height="1" fill="#fff"/><rect x="5" y="2" width="1" height="1" fill="#ff00ff"/><rect x="6" y="2" width="1" height="1" fill="#fff"/><rect x="7" y="2" width="1" height="1" fill="#ff00ff"/><rect x="8" y="2" width="1" height="1" fill="#fff"/><rect x="9" y="2" width="1" height="1" fill="#ff00ff"/><rect x="10" y="2" width="1" height="1" fill="#fff"/><rect x="11" y="2" width="1" height="1" fill="#ff00ff"/><rect x="12" y="2" width="1" height="1" fill="#000"/><rect x="13" y="2" width="2" height="1" fill="#fff"/><rect x="15" y="2" width="1" height="1" fill="#000"/><rect x="3" y="3" width="1" height="1" fill="#000"/><rect x="4" y="3" width="1" height="1" fill="#ff00ff"/><rect x="5" y="3" width="1" height="1" fill="#fff"/><rect x="6" y="3" width="1" height="1" fill="#ff00ff"/><rect x="7" y="3" width="1" height="1" fill="#fff"/><rect x="8" y="3" width="1" height="1" fill="#ff00ff"/><rect x="9" y="3" width="1" height="1" fill="#fff"/><rect x="10" y="3" width="1" height="1" fill="#ff00ff"/><rect x="11" y="3" width="1" height="1" fill="#fff"/><rect x="12" y="3" width="4" height="1" fill="#000"/><rect x="3" y="4" width="1" height="1" fill="#000"/><rect x="4" y="4" width="1" height="1" fill="#fff"/><rect x="5" y="4" width="1" height="1" fill="#ff00ff"/><rect x="6" y="4" width="1" height="1" fill="#fff"/><rect x="7" y="4" width="1" height="1" fill="#ff00ff"/><rect x="8" y="4" width="1" height="1" fill="#fff"/><rect x="9" y="4" width="1" height="1" fill="#ff00ff"/><rect x="10" y="4" width="1" height="1" fill="#fff"/><rect x="11" y="4" width="1" height="1" fill="#ff00ff"/><rect x="12" y="4" width="1" height="1" fill="#fff"/><rect x="13" y="4" width="1" height="1" fill="#ff00ff"/><rect x="14" y="4" width="1" height="1" fill="#fff"/><rect x="15" y="4" width="1" height="1" fill="#000"/><rect x="3" y="5" width="1" height="1" fill="#000"/><rect x="4" y="5" width="1" height="1" fill="#ff00ff"/><rect x="5" y="5" width="1" height="1" fill="#fff"/><rect x="6" y="5" width="1" height="1" fill="#ff00ff"/><rect x="7" y="5" width="1" height="1" fill="#fff"/><rect x="8" y="5" width="1" height="1" fill="#ff00ff"/><rect x="9" y="5" width="1" height="1" fill="#fff"/><rect x="10" y="5" width="1" height="1" fill="#ff00ff"/><rect x="11" y="5" width="1" height="1" fill="#fff"/><rect x="12" y="5" width="1" height="1" fill="#ff00ff"/><rect x="13" y="5" width="1" height="1" fill="#fff"/><rect x="14" y="5" width="1" height="1" fill="#ff00ff"/><rect x="15" y="5" width="1" height="1" fill="#000"/><rect x="3" y="6" width="1" height="1" fill="#000"/><rect x="4" y="6" width="1" height="1" fill="#fff"/><rect x="5" y="6" width="1" height="1" fill="#ff00ff"/><rect x="6" y="6" width="1" height="1" fill="#fff"/><rect x="7" y="6" width="1" height="1" fill="#ff00ff"/><rect x="8" y="6" width="1" height="1" fill="#fff"/><rect x="9" y="6" width="1" height="1" fill="#ff00ff"/><rect x="10" y="6" width="1" height="1" fill="#fff"/><rect x="11" y="6" width="1" height="1" fill="#ff00ff"/><rect x="12" y="6" width="1" height="1" fill="#fff"/><rect x="13" y="6" width="1" height="1" fill="#ff00ff"/><rect x="14" y="6" width="1" height="1" fill="#fff"/><rect x="15" y="6" width="1" height="1" fill="#000"/><rect x="3" y="7" width="1" height="1" fill="#000"/><rect x="4" y="7" width="1" height="1" fill="#ff00ff"/><rect x="5" y="7" width="1" height="1" fill="#fff"/><rect x="6" y="7" width="1" height="1" fill="#ff00ff"/><rect x="7" y="7" width="1" height="1" fill="#fff"/><rect x="8" y="7" width="1" height="1" fill="#ff00ff"/><rect x="9" y="7" width="1" height="1" fill="#fff"/><rect x="10" y="7" width="1" height="1" fill="#ff00ff"/><rect x="11" y="7" width="1" height="1" fill="#fff"/><rect x="12" y="7" width="1" height="1" fill="#ff00ff"/><rect x="13" y="7" width="1" height="1" fill="#fff"/><rect x="14" y="7" width="1" height="1" fill="#ff00ff"/><rect x="15" y="7" width="2" height="1" fill="#000"/><rect x="0" y="8" width="1" height="1" fill="#969696"/><rect x="3" y="8" width="1" height="1" fill="#000"/><rect x="4" y="8" width="1" height="1" fill="#fff"/><rect x="5" y="8" width="1" height="1" fill="#ff00ff"/><rect x="6" y="8" width="1" height="1" fill="#fff"/><rect x="7" y="8" width="1" height="1" fill="#ff00ff"/><rect x="8" y="8" width="1" height="1" fill="#fff"/><rect x="9" y="8" width="1" height="1" fill="#ff00ff"/><rect x="10" y="8" width="1" height="1" fill="#fff"/><rect x="11" y="8" width="1" height="1" fill="#ff00ff"/><rect x="12" y="8" width="1" height="1" fill="#fff"/><rect x="13" y="8" width="1" height="1" fill="#000"/><rect x="14" y="8" width="2" height="1" fill="#fff"/><rect x="16" y="8" width="1" height="1" fill="#000"/><rect x="1" y="9" width="3" height="1" fill="#969696"/><rect x="4" y="9" width="1" height="1" fill="#ff00ff"/><rect x="5" y="9" width="1" height="1" fill="#fff"/><rect x="6" y="9" width="1" height="1" fill="#ff00ff"/><rect x="7" y="9" width="1" height="1" fill="#fff"/><rect x="8" y="9" width="1" height="1" fill="#ff00ff"/><rect x="9" y="9" width="1" height="1" fill="#fff"/><rect x="10" y="9" width="1" height="1" fill="#ff00ff"/><rect x="11" y="9" width="1" height="1" fill="#fff"/><rect x="12" y="9" width="1" height="1" fill="#ff00ff"/><rect x="13" y="9" width="1" height="1" fill="#fff"/><rect x="14" y="9" width="1" height="1" fill="#cccccc"/><rect x="15" y="9" width="1" height="1" fill="#fff"/><rect x="16" y="9" width="1" height="1" fill="#000"/><rect x="1" y="10" width="1" height="1" fill="#969696"/><rect x="2" y="10" width="1" height="1" fill="#cccccc"/><rect x="3" y="10" width="2" height="1" fill="#fff"/><rect x="5" y="10" width="1" height="1" fill="#ff00ff"/><rect x="6" y="10" width="1" height="1" fill="#fff"/><rect x="7" y="10" width="1" height="1" fill="#ff00ff"/><rect x="8" y="10" width="1" height="1" fill="#fff"/><rect x="9" y="10" width="1" height="1" fill="#ff00ff"/><rect x="10" y="10" width="1" height="1" fill="#fff"/><rect x="11" y="10" width="1" height="1" fill="#ff00ff"/><rect x="12" y="10" width="2" height="1" fill="#fff"/><rect x="14" y="10" width="2" height="1" fill="#cccccc"/><rect x="16" y="10" width="1" height="1" fill="#000"/><rect x="1" y="11" width="1" height="1" fill="#969696"/><rect x="2" y="11" width="1" height="1" fill="#cccccc"/><rect x="3" y="11" width="1" height="1" fill="#fff"/><rect x="4" y="11" width="7" height="1" fill="#969696"/><rect x="11" y="11" width="2" height="1" fill="#fff"/><rect x="13" y="11" width="3" height="1" fill="#cccccc"/><rect x="16" y="11" width="1" height="1" fill="#000"/><rect x="1" y="12" width="1" height="1" fill="#969696"/><rect x="2" y="12" width="2" height="1" fill="#cccccc"/><rect x="4" y="12" width="1" height="1" fill="#fff"/><rect x="5" y="12" width="1" height="1" fill="#cccccc"/><rect x="6" y="12" width="1" height="1" fill="#fff"/><rect x="7" y="12" width="1" height="1" fill="#cccccc"/><rect x="8" y="12" width="1" height="1" fill="#fff"/><rect x="9" y="12" width="1" height="1" fill="#cccccc"/><rect x="10" y="12" width="1" height="1" fill="#fff"/><rect x="11" y="12" width="1" height="1" fill="#cccccc"/><rect x="12" y="12" width="1" height="1" fill="#fff"/><rect x="13" y="12" width="3" height="1" fill="#cccccc"/><rect x="16" y="12" width="1" height="1" fill="#000"/><rect x="1" y="13" width="1" height="1" fill="#969696"/><rect x="2" y="13" width="13" height="1" fill="#cccccc"/><rect x="15" y="13" width="1" height="1" fill="#000"/><rect x="2" y="14" width="13" height="1" fill="#000"/></svg>
<div style="position:absolute;left:10px;top:145px;width:9px;height:9px;border:1px solid #969696;background:#fff"></div>
<div style="position:absolute;left:12px;top:149px;width:5px;height:1px;background:#000"></div>
<div style="position:absolute;left:10px;top:257px;width:9px;height:9px;border:1px solid #969696;background:#fff"></div>
<div style="position:absolute;left:12px;top:261px;width:5px;height:1px;background:#000"></div>
<div style="position:absolute;left:14px;top:259px;width:1px;height:5px;background:#000"></div>
<div style="position:absolute;left:10px;top:273px;width:9px;height:9px;border:1px solid #969696;background:#fff"></div>
<div style="position:absolute;left:12px;top:277px;width:5px;height:1px;background:#000"></div>
<svg style="left:25px;top:142px;" width="16" height="13" shape-rendering="crispEdges"><rect x="0" y="0" width="14" height="1" fill="#cccccc"/><rect x="14" y="0" width="1" height="1" fill="#000"/><rect x="0" y="1" width="1" height="1" fill="#969696"/><rect x="1" y="1" width="13" height="1" fill="#969600"/><rect x="14" y="1" width="1" height="1" fill="#000"/><rect x="0" y="2" width="1" height="1" fill="#969696"/><rect x="1" y="2" width="1" height="1" fill="#009600"/><rect x="2" y="2" width="6" height="1" fill="#000"/><rect x="8" y="2" width="1" height="1" fill="#009600"/><rect x="9" y="2" width="1" height="1" fill="#fff"/><rect x="10" y="2" width="2" height="1" fill="#009600"/><rect x="12" y="2" width="1" height="1" fill="#00ff00"/><rect x="13" y="2" width="1" height="1" fill="#009600"/><rect x="14" y="2" width="2" height="1" fill="#000"/><rect x="0" y="3" width="1" height="1" fill="#969696"/><rect x="1" y="3" width="1" height="1" fill="#ff0000"/><rect x="2" y="3" width="2" height="1" fill="#fff"/><rect x="4" y="3" width="1" height="1" fill="#000"/><rect x="5" y="3" width="2" height="1" fill="#fff"/><rect x="7" y="3" width="1" height="1" fill="#000"/><rect x="8" y="3" width="1" height="1" fill="#009600"/><rect x="9" y="3" width="1" height="1" fill="#fff"/><rect x="10" y="3" width="2" height="1" fill="#000"/><rect x="12" y="3" width="1" height="1" fill="#fff"/><rect x="13" y="3" width="1" height="1" fill="#009600"/><rect x="14" y="3" width="2" height="1" fill="#000"/><rect x="0" y="4" width="1" height="1" fill="#969696"/><rect x="1" y="4" width="1" height="1" fill="#009600"/><rect x="2" y="4" width="6" height="1" fill="#000"/><rect x="8" y="4" width="1" height="1" fill="#009600"/><rect x="9" y="4" width="1" height="1" fill="#fff"/><rect x="10" y="4" width="2" height="1" fill="#000"/><rect x="12" y="4" width="2" height="1" fill="#009600"/><rect x="14" y="4" width="2" height="1" fill="#000"/><rect x="0" y="5" width="1" height="1" fill="#969696"/><rect x="1" y="5" width="1" height="1" fill="#ff0000"/><rect x="2" y="5" width="2" height="1" fill="#fff"/><rect x="4" y="5" width="1" height="1" fill="#000"/><rect x="5" y="5" width="2" height="1" fill="#fff"/><rect x="7" y="5" width="1" height="1" fill="#000"/><rect x="8" y="5" width="1" height="1" fill="#009600"/><rect x="9" y="5" width="1" height="1" fill="#fff"/><rect x="10" y="5" width="3" height="1" fill="#009600"/><rect x="13" y="5" width="1" height="1" fill="#fff"/><rect x="14" y="5" width="2" height="1" fill="#000"/><rect x="0" y="6" width="1" height="1" fill="#969696"/><rect x="1" y="6" width="1" height="1" fill="#009600"/><rect x="2" y="6" width="6" height="1" fill="#000"/><rect x="8" y="6" width="1" height="1" fill="#009600"/><rect x="9" y="6" width="1" height="1" fill="#fff"/><rect x="10" y="6" width="4" height="1" fill="#009600"/><rect x="14" y="6" width="2" height="1" fill="#000"/><rect x="0" y="7" width="1" height="1" fill="#969696"/><rect x="1" y="7" width="1" height="1" fill="#009600"/><rect x="2" y="7" width="2" height="1" fill="#fff"/><rect x="4" y="7" width="1" height="1" fill="#000"/><rect x="5" y="7" width="2" height="1" fill="#fff"/><rect x="7" y="7" width="1" height="1" fill="#000"/><rect x="8" y="7" width="1" height="1" fill="#009600"/><rect x="9" y="7" width="1" height="1" fill="#fff"/><rect x="10" y="7" width="1" height="1" fill="#00ff00"/><rect x="11" y="7" width="1" height="1" fill="#000"/><rect x="12" y="7" width="1" height="1" fill="#00ff00"/><rect x="13" y="7" width="3" height="1" fill="#000"/><rect x="0" y="8" width="1" height="1" fill="#969696"/><rect x="1" y="8" width="1" height="1" fill="#009600"/><rect x="2" y="8" width="6" height="1" fill="#000"/><rect x="8" y="8" width="1" height="1" fill="#009600"/><rect x="9" y="8" width="1" height="1" fill="#fff"/><rect x="10" y="8" width="1" height="1" fill="#009600"/><rect x="11" y="8" width="1" height="1" fill="#000"/><rect x="12" y="8" width="1" height="1" fill="#009600"/><rect x="13" y="8" width="2" height="1" fill="#000"/><rect x="0" y="9" width="1" height="1" fill="#969696"/><rect x="1" y="9" width="8" height="1" fill="#009600"/><rect x="9" y="9" width="1" height="1" fill="#fff"/><rect x="10" y="9" width="4" height="1" fill="#009600"/><rect x="14" y="9" width="1" height="1" fill="#000"/><rect x="0" y="10" width="8" height="1" fill="#000"/><rect x="8" y="10" width="4" height="1" fill="#ffff00"/><rect x="12" y="10" width="4" height="1" fill="#000"/><rect x="8" y="11" width="4" height="1" fill="#ffff00"/><rect x="12" y="11" width="1" height="1" fill="#000"/><rect x="7" y="12" width="6" height="1" fill="#000"/></svg>
<svg style="left:25px;top:254px;" width="16" height="13" shape-rendering="crispEdges"><rect x="0" y="0" width="4" height="1" fill="#969696"/><rect x="7" y="0" width="9" height="1" fill="#969696"/><rect x="4" y="1" width="1" height="1" fill="#000"/><rect x="5" y="1" width="1" height="1" fill="#fff"/><rect x="7" y="1" width="1" height="1" fill="#fff"/><rect x="0" y="2" width="3" height="1" fill="#000"/><rect x="4" y="2" width="1" height="1" fill="#fff"/><rect x="5" y="2" width="1" height="1" fill="#000"/><rect x="6" y="2" width="1" height="1" fill="#fff"/><rect x="7" y="2" width="9" height="1" fill="#000"/><rect x="3" y="3" width="1" height="1" fill="#000"/><rect x="4" y="3" width="3" height="1" fill="#fff"/><rect x="7" y="3" width="1" height="1" fill="#000"/><rect x="4" y="4" width="1" height="1" fill="#969696"/><rect x="5" y="4" width="1" height="1" fill="#fff"/><rect x="6" y="4" width="1" height="1" fill="#000"/><rect x="4" y="5" width="1" height="1" fill="#969696"/><rect x="5" y="5" width="1" height="1" fill="#fff"/><rect x="6" y="5" width="1" height="1" fill="#000"/><rect x="3" y="6" width="1" height="1" fill="#969600"/><rect x="4" y="6" width="3" height="1" fill="#ffff00"/><rect x="7" y="6" width="1" height="1" fill="#000"/><rect x="3" y="7" width="1" height="1" fill="#969600"/><rect x="4" y="7" width="1" height="1" fill="#fff"/><rect x="5" y="7" width="2" height="1" fill="#ffff00"/><rect x="7" y="7" width="1" height="1" fill="#000"/><rect x="3" y="8" width="1" height="1" fill="#969600"/><rect x="4" y="8" width="1" height="1" fill="#fff"/><rect x="5" y="8" width="2" height="1" fill="#ffff00"/><rect x="7" y="8" width="1" height="1" fill="#000"/><rect x="3" y="9" width="5" height="1" fill="#000"/><rect x="4" y="10" width="1" height="1" fill="#969696"/><rect x="5" y="10" width="1" height="1" fill="#fff"/><rect x="6" y="10" width="1" height="1" fill="#000"/><rect x="4" y="11" width="1" height="1" fill="#969696"/><rect x="5" y="11" width="1" height="1" fill="#fff"/><rect x="6" y="11" width="1" height="1" fill="#000"/><rect x="4" y="12" width="1" height="1" fill="#969696"/><rect x="5" y="12" width="1" height="1" fill="#fff"/><rect x="6" y="12" width="1" height="1" fill="#000"/></svg>
<svg style="left:25px;top:269px;" width="16" height="15" shape-rendering="crispEdges"><rect x="10" y="0" width="3" height="1" fill="#000"/><rect x="9" y="1" width="1" height="1" fill="#000"/><rect x="10" y="1" width="3" height="1" fill="#fff"/><rect x="13" y="1" width="2" height="1" fill="#000"/><rect x="2" y="2" width="2" height="1" fill="#ffff00"/><rect x="5" y="2" width="2" height="1" fill="#ffff00"/><rect x="8" y="2" width="1" height="1" fill="#000"/><rect x="9" y="2" width="2" height="1" fill="#cccccc"/><rect x="11" y="2" width="1" height="1" fill="#fff"/><rect x="12" y="2" width="2" height="1" fill="#cccccc"/><rect x="14" y="2" width="2" height="1" fill="#000"/><rect x="1" y="3" width="1" height="1" fill="#000"/><rect x="2" y="3" width="1" height="1" fill="#ffff00"/><rect x="3" y="3" width="1" height="1" fill="#969600"/><rect x="4" y="3" width="1" height="1" fill="#000"/><rect x="5" y="3" width="1" height="1" fill="#ffff00"/><rect x="6" y="3" width="1" height="1" fill="#969600"/><rect x="7" y="3" width="2" height="1" fill="#000"/><rect x="9" y="3" width="5" height="1" fill="#cccccc"/><rect x="14" y="3" width="1" height="1" fill="#fff"/><rect x="15" y="3" width="1" height="1" fill="#000"/><rect x="1" y="4" width="8" height="1" fill="#000"/><rect x="9" y="4" width="3" height="1" fill="#cccccc"/><rect x="12" y="4" width="1" height="1" fill="#ff0000"/><rect x="13" y="4" width="2" height="1" fill="#cccccc"/><rect x="15" y="4" width="1" height="1" fill="#000"/><rect x="0" y="5" width="1" height="1" fill="#000"/><rect x="1" y="5" width="6" height="1" fill="#fff"/><rect x="7" y="5" width="1" height="1" fill="#cccccc"/><rect x="8" y="5" width="1" height="1" fill="#000"/><rect x="9" y="5" width="2" height="1" fill="#cccccc"/><rect x="11" y="5" width="3" height="1" fill="#ff0000"/><rect x="14" y="5" width="1" height="1" fill="#cccccc"/><rect x="15" y="5" width="1" height="1" fill="#000"/><rect x="0" y="6" width="1" height="1" fill="#000"/><rect x="1" y="6" width="1" height="1" fill="#fff"/><rect x="2" y="6" width="5" height="1" fill="#cccccc"/><rect x="7" y="6" width="2" height="1" fill="#000"/><rect x="9" y="6" width="3" height="1" fill="#cccccc"/><rect x="12" y="6" width="1" height="1" fill="#ff0000"/><rect x="13" y="6" width="2" height="1" fill="#cccccc"/><rect x="15" y="6" width="1" height="1" fill="#000"/><rect x="1" y="7" width="1" height="1" fill="#000"/><rect x="2" y="7" width="1" height="1" fill="#fff"/><rect x="3" y="7" width="3" height="1" fill="#969696"/><rect x="6" y="7" width="3" height="1" fill="#000"/><rect x="9" y="7" width="5" height="1" fill="#cccccc"/><rect x="14" y="7" width="1" height="1" fill="#fff"/><rect x="15" y="7" width="1" height="1" fill="#000"/><rect x="2" y="8" width="1" height="1" fill="#000"/><rect x="3" y="8" width="1" height="1" fill="#fff"/><rect x="4" y="8" width="1" height="1" fill="#000"/><rect x="7" y="8" width="1" height="1" fill="#000"/><rect x="8" y="8" width="1" height="1" fill="#fff"/><rect x="9" y="8" width="1" height="1" fill="#ffff00"/><rect x="10" y="8" width="1" height="1" fill="#fff"/><rect x="11" y="8" width="1" height="1" fill="#ffff00"/><rect x="12" y="8" width="1" height="1" fill="#fff"/><rect x="13" y="8" width="1" height="1" fill="#ffff00"/><rect x="14" y="8" width="1" height="1" fill="#fff"/><rect x="15" y="8" width="1" height="1" fill="#000"/><rect x="1" y="9" width="1" height="1" fill="#000"/><rect x="2" y="9" width="1" height="1" fill="#fff"/><rect x="3" y="9" width="1" height="1" fill="#000"/><rect x="7" y="9" width="1" height="1" fill="#000"/><rect x="8" y="9" width="1" height="1" fill="#ffff00"/><rect x="9" y="9" width="1" height="1" fill="#fff"/><rect x="10" y="9" width="1" height="1" fill="#ffff00"/><rect x="11" y="9" width="1" height="1" fill="#fff"/><rect x="12" y="9" width="1" height="1" fill="#ffff00"/><rect x="13" y="9" width="1" height="1" fill="#fff"/><rect x="14" y="9" width="1" height="1" fill="#ffff00"/><rect x="15" y="9" width="1" height="1" fill="#000"/><rect x="0" y="10" width="1" height="1" fill="#000"/><rect x="1" y="10" width="1" height="1" fill="#fff"/><rect x="2" y="10" width="1" height="1" fill="#000"/><rect x="7" y="10" width="1" height="1" fill="#000"/><rect x="8" y="10" width="1" height="1" fill="#fff"/><rect x="9" y="10" width="1" height="1" fill="#ffff00"/><rect x="10" y="10" width="1" height="1" fill="#fff"/><rect x="11" y="10" width="1" height="1" fill="#ffff00"/><rect x="12" y="10" width="1" height="1" fill="#fff"/><rect x="13" y="10" width="1" height="1" fill="#ffff00"/><rect x="14" y="10" width="1" height="1" fill="#fff"/><rect x="15" y="10" width="1" height="1" fill="#000"/><rect x="0" y="11" width="1" height="1" fill="#000"/><rect x="1" y="11" width="2" height="1" fill="#fff"/><rect x="7" y="11" width="1" height="1" fill="#000"/><rect x="8" y="11" width="1" height="1" fill="#ffff00"/><rect x="9" y="11" width="1" height="1" fill="#fff"/><rect x="10" y="11" width="3" height="1" fill="#ff0000"/><rect x="13" y="11" width="1" height="1" fill="#ffff00"/><rect x="14" y="11" width="1" height="1" fill="#fff"/><rect x="15" y="11" width="1" height="1" fill="#000"/><rect x="0" y="12" width="3" height="1" fill="#000"/><rect x="7" y="12" width="1" height="1" fill="#000"/><rect x="8" y="12" width="1" height="1" fill="#fff"/><rect x="9" y="12" width="1" height="1" fill="#ffff00"/><rect x="10" y="12" width="1" height="1" fill="#fff"/><rect x="11" y="12" width="1" height="1" fill="#ffff00"/><rect x="12" y="12" width="1" height="1" fill="#fff"/><rect x="13" y="12" width="1" height="1" fill="#ffff00"/><rect x="14" y="12" width="1" height="1" fill="#fff"/><rect x="15" y="12" width="1" height="1" fill="#000"/><rect x="7" y="13" width="1" height="1" fill="#000"/><rect x="8" y="13" width="1" height="1" fill="#ffff00"/><rect x="9" y="13" width="1" height="1" fill="#fff"/><rect x="10" y="13" width="1" height="1" fill="#ffff00"/><rect x="11" y="13" width="1" height="1" fill="#fff"/><rect x="12" y="13" width="1" height="1" fill="#ffff00"/><rect x="13" y="13" width="1" height="1" fill="#fff"/><rect x="14" y="13" width="1" height="1" fill="#ffff00"/><rect x="15" y="13" width="1" height="1" fill="#000"/><rect x="8" y="14" width="8" height="1" fill="#000"/></svg>
<div style="position:absolute;left:4px;top:436px;width:672px;height:51px;background:#fff;border-top:1px solid #969696;border-left:1px solid #969696;border-bottom:1px solid #fff;border-right:1px solid #fff;box-shadow:inset 1px 1px 0 #000,inset -1px -1px 0 #cccccc"></div>
<div class="det" style="left:6px;top:439px"><span style="color:#000;">00000000: </span><span style="color:#960096;">01 00 5e 00 00 04 08 00 2b 2f ef 7b 08 00</span><span style="color:#969600;"> 45 00 </span><span style="color:#960096;">..^.....+/ï{..</span><span style="color:#969600;">E.</span></div>
<div class="det" style="left:6px;top:450px"><span style="color:#000;">00000010: </span><span style="color:#969600;">00 20 49 cc 00 00 01 02 b7 bc d1 1f 07 30 e0 00 . IÌ....▪¼Ñ..0à.</span></div>
<div style="position:absolute;left:118px;top:460px;width:245px;height:11px;background:#ff0"></div>
<div style="position:absolute;left:426px;top:460px;width:84px;height:11px;background:#ff0"></div>
<div class="det" style="left:6px;top:461px"><span style="color:#000;">00000020: </span><span style="color:#969600;">00 04 </span><span style="color:#000;">13 01 52 22 01 0e 08 03 13 95 7e 36</span><span style="color:#969600;"> 00 00 ..</span><span style="color:#000;">..R".....▪~6</span><span style="color:#969600;">..</span></div>
<div class="det" style="left:6px;top:472px"><span style="color:#000;">00000030: </span><span style="color:#969600;">00 00 00 00 00 00 00 00 00 00 00 00             ............</span></div>
<svg style="left:0;top:480px" width="680" height="26" shape-rendering="crispEdges"><line x1="4" y1="7.5" x2="676" y2="7.5" stroke="#000" stroke-width="1"/><polygon points="4,7.5 54,7.5 48,21.5 10,21.5" fill="#cccccc" stroke="none"/><line x1="10" y1="22.0" x2="48" y2="22.0" stroke="#969696"/><polyline points="4.5,7.5 10.5,22.0" fill="none" stroke="#000" stroke-width="1"/><polyline points="54.5,7.5 48.5,22.0" fill="none" stroke="#000" stroke-width="1"/><polygon points="105,7.5 150,7.5 144,21.5 111,21.5" fill="#cccccc" stroke="none"/><line x1="111" y1="22.0" x2="144" y2="22.0" stroke="#969696"/><polyline points="105.5,7.5 111.5,22.0" fill="none" stroke="#000" stroke-width="1"/><polyline points="150.5,7.5 144.5,22.0" fill="none" stroke="#000" stroke-width="1"/><polygon points="146,7.5 216,7.5 210,21.5 152,21.5" fill="#cccccc" stroke="none"/><line x1="152" y1="22.0" x2="210" y2="22.0" stroke="#969696"/><polyline points="146.5,7.5 152.5,22.0" fill="none" stroke="#000" stroke-width="1"/><polyline points="216.5,7.5 210.5,22.0" fill="none" stroke="#000" stroke-width="1"/><polygon points="212,7.5 295,7.5 289,21.5 218,21.5" fill="#cccccc" stroke="none"/><line x1="218" y1="22.0" x2="289" y2="22.0" stroke="#969696"/><polyline points="212.5,7.5 218.5,22.0" fill="none" stroke="#000" stroke-width="1"/><polyline points="295.5,7.5 289.5,22.0" fill="none" stroke="#000" stroke-width="1"/><polygon points="291,7.5 353,7.5 347,21.5 297,21.5" fill="#cccccc" stroke="none"/><line x1="297" y1="22.0" x2="347" y2="22.0" stroke="#969696"/><polyline points="291.5,7.5 297.5,22.0" fill="none" stroke="#000" stroke-width="1"/><polyline points="353.5,7.5 347.5,22.0" fill="none" stroke="#000" stroke-width="1"/><polygon points="51,7.5 107,7.5 101,21.5 57,21.5" fill="#fff" stroke="none"/><line x1="57" y1="22.0" x2="101" y2="22.0" stroke="#969696"/><polyline points="51.5,7.5 57.5,22.0" fill="none" stroke="#000" stroke-width="1"/><polyline points="107.5,7.5 101.5,22.0" fill="none" stroke="#000" stroke-width="1"/><line x1="52" y1="7.5" x2="107" y2="7.5" stroke="#fff"/></svg>
<div style="left:13px;top:489px;font-size:11px;white-space:pre;line-height:12px">Expert</div>
<div style="left:59px;top:489px;font-size:11px;white-space:pre;line-height:12px">Decode</div>
<div style="left:113px;top:489px;font-size:11px;white-space:pre;line-height:12px">Matrix</div>
<div style="left:156px;top:489px;font-size:11px;white-space:pre;line-height:12px">Host Table</div>
<div style="left:221px;top:489px;font-size:11px;white-space:pre;line-height:12px">Protocol Dist.</div>
<div style="left:299px;top:489px;font-size:11px;white-space:pre;line-height:12px">Statistics</div>
<div style="left:7px;top:506px;font-size:11px;letter-spacing:-0.3px;white-space:pre;line-height:12px">For Help, press F1</div>
<div style="position:absolute;left:364px;top:505px;width:30px;height:16px;border-top:1px solid #969696;border-left:1px solid #969696;border-right:1px solid #fff;border-bottom:1px solid #fff"></div>
<div style="position:absolute;left:419px;top:505px;width:68px;height:16px;border-top:1px solid #969696;border-left:1px solid #969696;border-right:1px solid #fff;border-bottom:1px solid #fff"></div>
<div style="position:absolute;left:536px;top:505px;width:67px;height:16px;border-top:1px solid #969696;border-left:1px solid #969696;border-right:1px solid #fff;border-bottom:1px solid #fff"></div>
<div style="position:absolute;left:628px;top:505px;width:31px;height:16px;border-top:1px solid #969696;border-left:1px solid #969696;border-right:1px solid #fff;border-bottom:1px solid #fff"></div>
<svg style="left:662px;top:507px" width="14" height="14" shape-rendering="crispEdges"><path d="M12 1 L1 12" stroke="#fff"/><path d="M12 2 L2 12" stroke="#969696"/><path d="M12 3 L3 12" stroke="#969696"/><path d="M12 5 L5 12" stroke="#fff"/><path d="M12 6 L6 12" stroke="#969696"/><path d="M12 7 L7 12" stroke="#969696"/><path d="M12 9 L9 12" stroke="#fff"/><path d="M12 10 L10 12" stroke="#969696"/><path d="M12 11 L11 12" stroke="#969696"/></svg>
<svg style="left:6px;top:5px;" width="16" height="16" shape-rendering="crispEdges"><rect x="5" y="0" width="9" height="1" fill="#e0e0e0"/><rect x="15" y="0" width="1" height="1" fill="#e0e0e0"/><rect x="3" y="1" width="2" height="1" fill="#e0e0e0"/><rect x="14" y="1" width="1" height="1" fill="#e0e0e0"/><rect x="2" y="2" width="1" height="1" fill="#e0e0e0"/><rect x="3" y="2" width="12" height="1" fill="#a00000"/><rect x="15" y="2" width="1" height="1" fill="#e0e0e0"/><rect x="1" y="3" width="1" height="1" fill="#e0e0e0"/><rect x="2" y="3" width="13" height="1" fill="#a00000"/><rect x="1" y="4" width="1" height="1" fill="#e0e0e0"/><rect x="2" y="4" width="4" height="1" fill="#a00000"/><rect x="6" y="4" width="9" height="1" fill="#e0e0e0"/><rect x="1" y="5" width="1" height="1" fill="#e0e0e0"/><rect x="2" y="5" width="4" height="1" fill="#a00000"/><rect x="6" y="5" width="1" height="1" fill="#e0e0e0"/><rect x="1" y="6" width="1" height="1" fill="#e0e0e0"/><rect x="2" y="6" width="5" height="1" fill="#a00000"/><rect x="7" y="6" width="7" height="1" fill="#e0e0e0"/><rect x="1" y="7" width="1" height="1" fill="#e0e0e0"/><rect x="2" y="7" width="12" height="1" fill="#a00000"/><rect x="14" y="7" width="1" height="1" fill="#e0e0e0"/><rect x="2" y="8" width="1" height="1" fill="#e0e0e0"/><rect x="3" y="8" width="12" height="1" fill="#a00000"/><rect x="15" y="8" width="1" height="1" fill="#e0e0e0"/><rect x="1" y="9" width="8" height="1" fill="#e0e0e0"/><rect x="9" y="9" width="6" height="1" fill="#a00000"/><rect x="15" y="9" width="1" height="1" fill="#e0e0e0"/><rect x="0" y="10" width="1" height="1" fill="#e0e0e0"/><rect x="9" y="10" width="1" height="1" fill="#e0e0e0"/><rect x="10" y="10" width="5" height="1" fill="#a00000"/><rect x="15" y="10" width="1" height="1" fill="#e0e0e0"/><rect x="0" y="11" width="10" height="1" fill="#e0e0e0"/><rect x="10" y="11" width="5" height="1" fill="#a00000"/><rect x="15" y="11" width="1" height="1" fill="#e0e0e0"/><rect x="0" y="12" width="1" height="1" fill="#e0e0e0"/><rect x="1" y="12" width="14" height="1" fill="#a00000"/><rect x="15" y="12" width="1" height="1" fill="#e0e0e0"/><rect x="0" y="13" width="1" height="1" fill="#e0e0e0"/><rect x="1" y="13" width="13" height="1" fill="#a00000"/><rect x="14" y="13" width="1" height="1" fill="#e0e0e0"/><rect x="0" y="14" width="1" height="1" fill="#e0e0e0"/><rect x="1" y="14" width="12" height="1" fill="#a00000"/><rect x="13" y="14" width="1" height="1" fill="#e0e0e0"/><rect x="1" y="15" width="12" height="1" fill="#e0e0e0"/></svg>
<svg style="left:9px;top:25px;" width="14" height="14" shape-rendering="crispEdges"><rect x="0" y="0" width="13" height="1" fill="#fff"/><rect x="13" y="0" width="1" height="1" fill="#00ff00"/><rect x="0" y="1" width="1" height="1" fill="#fff"/><rect x="1" y="1" width="12" height="1" fill="#000"/><rect x="13" y="1" width="1" height="1" fill="#fff"/><rect x="0" y="2" width="1" height="1" fill="#fff"/><rect x="1" y="2" width="12" height="1" fill="#000"/><rect x="13" y="2" width="1" height="1" fill="#fff"/><rect x="0" y="3" width="1" height="1" fill="#fff"/><rect x="1" y="3" width="12" height="1" fill="#000"/><rect x="13" y="3" width="1" height="1" fill="#fff"/><rect x="0" y="4" width="1" height="1" fill="#fff"/><rect x="1" y="4" width="4" height="1" fill="#000"/><rect x="5" y="4" width="1" height="1" fill="#fff"/><rect x="6" y="4" width="7" height="1" fill="#000"/><rect x="13" y="4" width="1" height="1" fill="#fff"/><rect x="0" y="5" width="1" height="1" fill="#fff"/><rect x="1" y="5" width="4" height="1" fill="#000"/><rect x="5" y="5" width="1" height="1" fill="#fff"/><rect x="6" y="5" width="7" height="1" fill="#000"/><rect x="13" y="5" width="1" height="1" fill="#fff"/><rect x="0" y="6" width="1" height="1" fill="#fff"/><rect x="1" y="6" width="4" height="1" fill="#000"/><rect x="5" y="6" width="1" height="1" fill="#fff"/><rect x="6" y="6" width="7" height="1" fill="#000"/><rect x="13" y="6" width="1" height="1" fill="#fff"/><rect x="0" y="7" width="1" height="1" fill="#fff"/><rect x="1" y="7" width="4" height="1" fill="#000"/><rect x="5" y="7" width="1" height="1" fill="#fff"/><rect x="6" y="7" width="7" height="1" fill="#000"/><rect x="13" y="7" width="1" height="1" fill="#fff"/><rect x="0" y="8" width="1" height="1" fill="#fff"/><rect x="1" y="8" width="4" height="1" fill="#000"/><rect x="5" y="8" width="1" height="1" fill="#fff"/><rect x="6" y="8" width="7" height="1" fill="#000"/><rect x="13" y="8" width="1" height="1" fill="#fff"/><rect x="0" y="9" width="5" height="1" fill="#fff"/><rect x="5" y="9" width="1" height="1" fill="#000"/><rect x="6" y="9" width="8" height="1" fill="#fff"/><rect x="0" y="10" width="1" height="1" fill="#fff"/><rect x="1" y="10" width="3" height="1" fill="#000"/><rect x="4" y="10" width="3" height="1" fill="#fff"/><rect x="7" y="10" width="6" height="1" fill="#000"/><rect x="13" y="10" width="1" height="1" fill="#fff"/><rect x="0" y="11" width="1" height="1" fill="#fff"/><rect x="1" y="11" width="12" height="1" fill="#000"/><rect x="13" y="11" width="1" height="1" fill="#fff"/><rect x="0" y="12" width="1" height="1" fill="#fff"/><rect x="1" y="12" width="12" height="1" fill="#000"/><rect x="13" y="12" width="1" height="1" fill="#fff"/><rect x="0" y="13" width="1" height="1" fill="#00ff00"/><rect x="1" y="13" width="13" height="1" fill="#fff"/></svg>
<svg style="left:662px;top:9px;" width="8" height="7" shape-rendering="crispEdges"><rect x="0" y="0" width="2" height="1" fill="#000"/><rect x="6" y="0" width="2" height="1" fill="#000"/><rect x="1" y="1" width="2" height="1" fill="#000"/><rect x="5" y="1" width="2" height="1" fill="#000"/><rect x="2" y="2" width="4" height="1" fill="#000"/><rect x="3" y="3" width="2" height="1" fill="#000"/><rect x="2" y="4" width="4" height="1" fill="#000"/><rect x="1" y="5" width="2" height="1" fill="#000"/><rect x="5" y="5" width="2" height="1" fill="#000"/><rect x="0" y="6" width="2" height="1" fill="#000"/><rect x="6" y="6" width="2" height="1" fill="#000"/></svg>
<svg style="left:662px;top:28px;" width="8" height="7" shape-rendering="crispEdges"><rect x="0" y="0" width="2" height="1" fill="#000"/><rect x="6" y="0" width="2" height="1" fill="#000"/><rect x="1" y="1" width="2" height="1" fill="#000"/><rect x="5" y="1" width="2" height="1" fill="#000"/><rect x="2" y="2" width="4" height="1" fill="#000"/><rect x="3" y="3" width="2" height="1" fill="#000"/><rect x="2" y="4" width="4" height="1" fill="#000"/><rect x="1" y="5" width="2" height="1" fill="#000"/><rect x="5" y="5" width="2" height="1" fill="#000"/><rect x="0" y="6" width="2" height="1" fill="#000"/><rect x="6" y="6" width="2" height="1" fill="#000"/></svg>
<div style="position:absolute;left:628px;top:15px;width:6px;height:2px;background:#000"></div>
<div style="position:absolute;left:628px;top:34px;width:6px;height:2px;background:#000"></div>
<svg style="left:643px;top:8px;" width="9" height="9" shape-rendering="crispEdges"><rect x="0" y="0" width="9" height="1" fill="#000"/><rect x="0" y="1" width="9" height="1" fill="#000"/><rect x="0" y="2" width="1" height="1" fill="#000"/><rect x="8" y="2" width="1" height="1" fill="#000"/><rect x="0" y="3" width="1" height="1" fill="#000"/><rect x="8" y="3" width="1" height="1" fill="#000"/><rect x="0" y="4" width="1" height="1" fill="#000"/><rect x="8" y="4" width="1" height="1" fill="#000"/><rect x="0" y="5" width="1" height="1" fill="#000"/><rect x="8" y="5" width="1" height="1" fill="#000"/><rect x="0" y="6" width="1" height="1" fill="#000"/><rect x="8" y="6" width="1" height="1" fill="#000"/><rect x="0" y="7" width="1" height="1" fill="#000"/><rect x="8" y="7" width="1" height="1" fill="#000"/><rect x="0" y="8" width="9" height="1" fill="#000"/></svg>
<svg style="left:643px;top:27px;" width="8" height="9" shape-rendering="crispEdges"><rect x="2" y="0" width="6" height="1" fill="#000"/><rect x="2" y="1" width="6" height="1" fill="#000"/><rect x="2" y="2" width="1" height="1" fill="#000"/><rect x="7" y="2" width="1" height="1" fill="#000"/><rect x="0" y="3" width="6" height="1" fill="#000"/><rect x="7" y="3" width="1" height="1" fill="#000"/><rect x="0" y="4" width="6" height="1" fill="#000"/><rect x="7" y="4" width="1" height="1" fill="#000"/><rect x="0" y="5" width="1" height="1" fill="#000"/><rect x="5" y="5" width="3" height="1" fill="#000"/><rect x="0" y="6" width="1" height="1" fill="#000"/><rect x="5" y="6" width="1" height="1" fill="#000"/><rect x="0" y="7" width="1" height="1" fill="#000"/><rect x="5" y="7" width="1" height="1" fill="#000"/><rect x="0" y="8" width="6" height="1" fill="#000"/></svg>
<svg style="left:14px;top:49px;" width="16" height="14" shape-rendering="crispEdges"><rect x="9" y="1" width="4" height="1" fill="#000"/><rect x="8" y="2" width="1" height="1" fill="#000"/><rect x="13" y="2" width="1" height="1" fill="#000"/><rect x="13" y="3" width="3" height="1" fill="#000"/><rect x="1" y="4" width="4" height="1" fill="#000"/><rect x="14" y="4" width="1" height="1" fill="#000"/><rect x="0" y="5" width="1" height="1" fill="#000"/><rect x="1" y="5" width="1" height="1" fill="#ffff00"/><rect x="2" y="5" width="1" height="1" fill="#fff"/><rect x="3" y="5" width="1" height="1" fill="#ffff00"/><rect x="4" y="5" width="1" height="1" fill="#fff"/><rect x="5" y="5" width="1" height="1" fill="#000"/><rect x="0" y="6" width="1" height="1" fill="#000"/><rect x="1" y="6" width="1" height="1" fill="#fff"/><rect x="2" y="6" width="1" height="1" fill="#ffff00"/><rect x="3" y="6" width="1" height="1" fill="#fff"/><rect x="4" y="6" width="1" height="1" fill="#ffff00"/><rect x="5" y="6" width="1" height="1" fill="#fff"/><rect x="6" y="6" width="6" height="1" fill="#000"/><rect x="0" y="7" width="1" height="1" fill="#000"/><rect x="1" y="7" width="1" height="1" fill="#ffff00"/><rect x="2" y="7" width="1" height="1" fill="#fff"/><rect x="3" y="7" width="1" height="1" fill="#ffff00"/><rect x="4" y="7" width="1" height="1" fill="#fff"/><rect x="5" y="7" width="1" height="1" fill="#ffff00"/><rect x="6" y="7" width="1" height="1" fill="#fff"/><rect x="7" y="7" width="1" height="1" fill="#ffff00"/><rect x="8" y="7" width="1" height="1" fill="#fff"/><rect x="9" y="7" width="1" height="1" fill="#ffff00"/><rect x="10" y="7" width="1" height="1" fill="#fff"/><rect x="11" y="7" width="1" height="1" fill="#000"/><rect x="0" y="8" width="1" height="1" fill="#000"/><rect x="1" y="8" width="1" height="1" fill="#fff"/><rect x="2" y="8" width="1" height="1" fill="#ffff00"/><rect x="3" y="8" width="1" height="1" fill="#fff"/><rect x="4" y="8" width="1" height="1" fill="#ffff00"/><rect x="5" y="8" width="1" height="1" fill="#fff"/><rect x="6" y="8" width="1" height="1" fill="#ffff00"/><rect x="7" y="8" width="1" height="1" fill="#fff"/><rect x="8" y="8" width="1" height="1" fill="#ffff00"/><rect x="9" y="8" width="1" height="1" fill="#fff"/><rect x="10" y="8" width="1" height="1" fill="#ffff00"/><rect x="11" y="8" width="1" height="1" fill="#000"/><rect x="0" y="9" width="1" height="1" fill="#000"/><rect x="1" y="9" width="1" height="1" fill="#ffff00"/><rect x="2" y="9" width="1" height="1" fill="#fff"/><rect x="3" y="9" width="1" height="1" fill="#ffff00"/><rect x="4" y="9" width="12" height="1" fill="#000"/><rect x="0" y="10" width="1" height="1" fill="#000"/><rect x="1" y="10" width="1" height="1" fill="#fff"/><rect x="2" y="10" width="1" height="1" fill="#ffff00"/><rect x="3" y="10" width="1" height="1" fill="#000"/><rect x="4" y="10" width="10" height="1" fill="#969600"/><rect x="14" y="10" width="1" height="1" fill="#000"/><rect x="0" y="11" width="1" height="1" fill="#000"/><rect x="1" y="11" width="1" height="1" fill="#ffff00"/><rect x="2" y="11" width="1" height="1" fill="#000"/><rect x="3" y="11" width="10" height="1" fill="#969600"/><rect x="13" y="11" width="1" height="1" fill="#000"/><rect x="0" y="12" width="2" height="1" fill="#000"/><rect x="2" y="12" width="10" height="1" fill="#969600"/><rect x="12" y="12" width="1" height="1" fill="#000"/><rect x="0" y="13" width="12" height="1" fill="#000"/></svg>
<svg style="left:36px;top:49px;" width="16" height="15" shape-rendering="crispEdges"><rect x="1" y="1" width="14" height="1" fill="#000"/><rect x="1" y="2" width="1" height="1" fill="#000"/><rect x="2" y="2" width="1" height="1" fill="#969600"/><rect x="3" y="2" width="1" height="1" fill="#000"/><rect x="4" y="2" width="8" height="1" fill="#cccccc"/><rect x="12" y="2" width="1" height="1" fill="#000"/><rect x="13" y="2" width="1" height="1" fill="#fff"/><rect x="14" y="2" width="1" height="1" fill="#000"/><rect x="1" y="3" width="1" height="1" fill="#000"/><rect x="2" y="3" width="1" height="1" fill="#969600"/><rect x="3" y="3" width="1" height="1" fill="#000"/><rect x="4" y="3" width="8" height="1" fill="#cccccc"/><rect x="12" y="3" width="1" height="1" fill="#000"/><rect x="13" y="3" width="1" height="1" fill="#969600"/><rect x="14" y="3" width="1" height="1" fill="#000"/><rect x="1" y="4" width="1" height="1" fill="#000"/><rect x="2" y="4" width="1" height="1" fill="#969600"/><rect x="3" y="4" width="1" height="1" fill="#000"/><rect x="4" y="4" width="8" height="1" fill="#cccccc"/><rect x="12" y="4" width="1" height="1" fill="#000"/><rect x="13" y="4" width="1" height="1" fill="#969600"/><rect x="14" y="4" width="1" height="1" fill="#000"/><rect x="1" y="5" width="1" height="1" fill="#000"/><rect x="2" y="5" width="1" height="1" fill="#969600"/><rect x="3" y="5" width="1" height="1" fill="#000"/><rect x="4" y="5" width="8" height="1" fill="#cccccc"/><rect x="12" y="5" width="1" height="1" fill="#000"/><rect x="13" y="5" width="1" height="1" fill="#969600"/><rect x="14" y="5" width="1" height="1" fill="#000"/><rect x="1" y="6" width="1" height="1" fill="#000"/><rect x="2" y="6" width="1" height="1" fill="#969600"/><rect x="3" y="6" width="1" height="1" fill="#000"/><rect x="4" y="6" width="8" height="1" fill="#cccccc"/><rect x="12" y="6" width="1" height="1" fill="#000"/><rect x="13" y="6" width="1" height="1" fill="#969600"/><rect x="14" y="6" width="1" height="1" fill="#000"/><rect x="1" y="7" width="1" height="1" fill="#000"/><rect x="2" y="7" width="1" height="1" fill="#969600"/><rect x="3" y="7" width="10" height="1" fill="#000"/><rect x="13" y="7" width="1" height="1" fill="#969600"/><rect x="14" y="7" width="1" height="1" fill="#000"/><rect x="1" y="8" width="1" height="1" fill="#000"/><rect x="2" y="8" width="12" height="1" fill="#969600"/><rect x="14" y="8" width="1" height="1" fill="#000"/><rect x="1" y="9" width="1" height="1" fill="#000"/><rect x="2" y="9" width="2" height="1" fill="#969600"/><rect x="4" y="9" width="8" height="1" fill="#000"/><rect x="12" y="9" width="2" height="1" fill="#969600"/><rect x="14" y="9" width="1" height="1" fill="#000"/><rect x="1" y="10" width="1" height="1" fill="#000"/><rect x="2" y="10" width="2" height="1" fill="#969600"/><rect x="4" y="10" width="5" height="1" fill="#000"/><rect x="9" y="10" width="2" height="1" fill="#fff"/><rect x="11" y="10" width="1" height="1" fill="#000"/><rect x="12" y="10" width="2" height="1" fill="#969600"/><rect x="14" y="10" width="1" height="1" fill="#000"/><rect x="1" y="11" width="1" height="1" fill="#000"/><rect x="2" y="11" width="2" height="1" fill="#969600"/><rect x="4" y="11" width="5" height="1" fill="#000"/><rect x="9" y="11" width="2" height="1" fill="#fff"/><rect x="11" y="11" width="1" height="1" fill="#000"/><rect x="12" y="11" width="2" height="1" fill="#969600"/><rect x="14" y="11" width="1" height="1" fill="#000"/><rect x="1" y="12" width="1" height="1" fill="#000"/><rect x="2" y="12" width="2" height="1" fill="#969600"/><rect x="4" y="12" width="5" height="1" fill="#000"/><rect x="9" y="12" width="2" height="1" fill="#fff"/><rect x="11" y="12" width="1" height="1" fill="#000"/><rect x="12" y="12" width="2" height="1" fill="#969600"/><rect x="14" y="12" width="1" height="1" fill="#000"/><rect x="1" y="13" width="1" height="1" fill="#000"/><rect x="2" y="13" width="2" height="1" fill="#969600"/><rect x="4" y="13" width="8" height="1" fill="#000"/><rect x="12" y="13" width="2" height="1" fill="#969600"/><rect x="14" y="13" width="1" height="1" fill="#000"/><rect x="1" y="14" width="14" height="1" fill="#000"/></svg>
<svg style="left:67px;top:49px;" width="16" height="14" shape-rendering="crispEdges"><rect x="3" y="1" width="9" height="1" fill="#000"/><rect x="2" y="2" width="1" height="1" fill="#000"/><rect x="3" y="2" width="8" height="1" fill="#fff"/><rect x="11" y="2" width="1" height="1" fill="#000"/><rect x="2" y="3" width="1" height="1" fill="#000"/><rect x="3" y="3" width="1" height="1" fill="#fff"/><rect x="4" y="3" width="6" height="1" fill="#000"/><rect x="10" y="3" width="1" height="1" fill="#fff"/><rect x="11" y="3" width="1" height="1" fill="#000"/><rect x="1" y="4" width="1" height="1" fill="#000"/><rect x="2" y="4" width="8" height="1" fill="#fff"/><rect x="10" y="4" width="1" height="1" fill="#000"/><rect x="1" y="5" width="1" height="1" fill="#000"/><rect x="2" y="5" width="1" height="1" fill="#fff"/><rect x="3" y="5" width="6" height="1" fill="#000"/><rect x="9" y="5" width="1" height="1" fill="#fff"/><rect x="10" y="5" width="3" height="1" fill="#000"/><rect x="0" y="6" width="11" height="1" fill="#000"/><rect x="11" y="6" width="1" height="1" fill="#fff"/><rect x="12" y="6" width="1" height="1" fill="#cccccc"/><rect x="13" y="6" width="1" height="1" fill="#000"/><rect x="0" y="7" width="1" height="1" fill="#000"/><rect x="1" y="7" width="10" height="1" fill="#fff"/><rect x="11" y="7" width="1" height="1" fill="#000"/><rect x="12" y="7" width="1" height="1" fill="#fff"/><rect x="13" y="7" width="1" height="1" fill="#000"/><rect x="0" y="8" width="12" height="1" fill="#000"/><rect x="12" y="8" width="1" height="1" fill="#cccccc"/><rect x="13" y="8" width="1" height="1" fill="#000"/><rect x="0" y="9" width="1" height="1" fill="#000"/><rect x="1" y="9" width="6" height="1" fill="#cccccc"/><rect x="7" y="9" width="2" height="1" fill="#ffff00"/><rect x="9" y="9" width="2" height="1" fill="#cccccc"/><rect x="11" y="9" width="1" height="1" fill="#000"/><rect x="12" y="9" width="1" height="1" fill="#fff"/><rect x="13" y="9" width="1" height="1" fill="#000"/><rect x="0" y="10" width="1" height="1" fill="#000"/><rect x="1" y="10" width="10" height="1" fill="#cccccc"/><rect x="11" y="10" width="1" height="1" fill="#000"/><rect x="12" y="10" width="1" height="1" fill="#cccccc"/><rect x="13" y="10" width="1" height="1" fill="#000"/><rect x="0" y="11" width="12" height="1" fill="#000"/><rect x="12" y="11" width="1" height="1" fill="#fff"/><rect x="13" y="11" width="1" height="1" fill="#000"/><rect x="0" y="12" width="1" height="1" fill="#000"/><rect x="1" y="12" width="10" height="1" fill="#fff"/><rect x="11" y="12" width="2" height="1" fill="#000"/><rect x="1" y="13" width="11" height="1" fill="#000"/></svg>
<svg style="left:90px;top:49px;" width="16" height="15" shape-rendering="crispEdges"><rect x="5" y="1" width="8" height="1" fill="#969696"/><rect x="4" y="2" width="1" height="1" fill="#969696"/><rect x="5" y="2" width="7" height="1" fill="#fff"/><rect x="12" y="2" width="1" height="1" fill="#969696"/><rect x="13" y="2" width="1" height="1" fill="#fff"/><rect x="4" y="3" width="1" height="1" fill="#969696"/><rect x="5" y="3" width="1" height="1" fill="#fff"/><rect x="6" y="3" width="6" height="1" fill="#969696"/><rect x="12" y="3" width="1" height="1" fill="#fff"/><rect x="13" y="3" width="1" height="1" fill="#969696"/><rect x="14" y="3" width="1" height="1" fill="#fff"/><rect x="3" y="4" width="1" height="1" fill="#969696"/><rect x="4" y="4" width="7" height="1" fill="#fff"/><rect x="11" y="4" width="1" height="1" fill="#969696"/><rect x="12" y="4" width="1" height="1" fill="#fff"/><rect x="3" y="5" width="1" height="1" fill="#969696"/><rect x="4" y="5" width="1" height="1" fill="#fff"/><rect x="5" y="5" width="5" height="1" fill="#969696"/><rect x="10" y="5" width="1" height="1" fill="#fff"/><rect x="11" y="5" width="3" height="1" fill="#969696"/><rect x="14" y="5" width="1" height="1" fill="#fff"/><rect x="2" y="6" width="10" height="1" fill="#969696"/><rect x="12" y="6" width="1" height="1" fill="#fff"/><rect x="13" y="6" width="1" height="1" fill="#969696"/><rect x="14" y="6" width="1" height="1" fill="#fff"/><rect x="1" y="7" width="9" height="1" fill="#969696"/><rect x="10" y="7" width="1" height="1" fill="#fff"/><rect x="11" y="7" width="1" height="1" fill="#969696"/><rect x="13" y="7" width="1" height="1" fill="#969696"/><rect x="14" y="7" width="1" height="1" fill="#fff"/><rect x="1" y="8" width="1" height="1" fill="#969696"/><rect x="2" y="8" width="6" height="1" fill="#fff"/><rect x="8" y="8" width="1" height="1" fill="#969696"/><rect x="9" y="8" width="1" height="1" fill="#fff"/><rect x="10" y="8" width="1" height="1" fill="#969696"/><rect x="11" y="8" width="1" height="1" fill="#fff"/><rect x="12" y="8" width="1" height="1" fill="#969696"/><rect x="14" y="8" width="1" height="1" fill="#fff"/><rect x="1" y="9" width="1" height="1" fill="#969696"/><rect x="2" y="9" width="1" height="1" fill="#fff"/><rect x="3" y="9" width="1" height="1" fill="#969696"/><rect x="4" y="9" width="2" height="1" fill="#fff"/><rect x="6" y="9" width="1" height="1" fill="#969696"/><rect x="7" y="9" width="1" height="1" fill="#fff"/><rect x="8" y="9" width="1" height="1" fill="#969696"/><rect x="9" y="9" width="1" height="1" fill="#fff"/><rect x="10" y="9" width="1" height="1" fill="#969696"/><rect x="12" y="9" width="1" height="1" fill="#969696"/><rect x="13" y="9" width="1" height="1" fill="#fff"/><rect x="1" y="10" width="1" height="1" fill="#969696"/><rect x="2" y="10" width="2" height="1" fill="#fff"/><rect x="4" y="10" width="2" height="1" fill="#969696"/><rect x="6" y="10" width="2" height="1" fill="#fff"/><rect x="8" y="10" width="1" height="1" fill="#969696"/><rect x="9" y="10" width="1" height="1" fill="#fff"/><rect x="10" y="10" width="1" height="1" fill="#969696"/><rect x="11" y="10" width="1" height="1" fill="#fff"/><rect x="12" y="10" width="1" height="1" fill="#969696"/><rect x="14" y="10" width="1" height="1" fill="#fff"/><rect x="1" y="11" width="1" height="1" fill="#969696"/><rect x="2" y="11" width="2" height="1" fill="#fff"/><rect x="4" y="11" width="2" height="1" fill="#969696"/><rect x="6" y="11" width="2" height="1" fill="#fff"/><rect x="8" y="11" width="1" height="1" fill="#969696"/><rect x="9" y="11" width="1" height="1" fill="#fff"/><rect x="10" y="11" width="1" height="1" fill="#969696"/><rect x="12" y="11" width="1" height="1" fill="#969696"/><rect x="13" y="11" width="1" height="1" fill="#fff"/><rect x="1" y="12" width="1" height="1" fill="#969696"/><rect x="2" y="12" width="1" height="1" fill="#fff"/><rect x="3" y="12" width="1" height="1" fill="#969696"/><rect x="4" y="12" width="2" height="1" fill="#fff"/><rect x="6" y="12" width="1" height="1" fill="#969696"/><rect x="7" y="12" width="1" height="1" fill="#fff"/><rect x="8" y="12" width="1" height="1" fill="#969696"/><rect x="9" y="12" width="1" height="1" fill="#fff"/><rect x="10" y="12" width="1" height="1" fill="#969696"/><rect x="11" y="12" width="1" height="1" fill="#fff"/><rect x="12" y="12" width="1" height="1" fill="#969696"/><rect x="13" y="12" width="1" height="1" fill="#fff"/><rect x="1" y="13" width="8" height="1" fill="#969696"/><rect x="9" y="13" width="4" height="1" fill="#fff"/><rect x="2" y="14" width="8" height="1" fill="#fff"/></svg>
<svg style="left:121px;top:49px;" width="16" height="17" shape-rendering="crispEdges"><rect x="5" y="1" width="6" height="1" fill="#000"/><rect x="3" y="2" width="2" height="1" fill="#000"/><rect x="5" y="2" width="6" height="1" fill="#ffff00"/><rect x="11" y="2" width="2" height="1" fill="#000"/><rect x="2" y="3" width="1" height="1" fill="#000"/><rect x="3" y="3" width="4" height="1" fill="#ffff00"/><rect x="7" y="3" width="1" height="1" fill="#000"/><rect x="8" y="3" width="5" height="1" fill="#ffff00"/><rect x="13" y="3" width="1" height="1" fill="#000"/><rect x="1" y="4" width="1" height="1" fill="#000"/><rect x="2" y="4" width="1" height="1" fill="#ffff00"/><rect x="3" y="4" width="2" height="1" fill="#ff0000"/><rect x="5" y="4" width="6" height="1" fill="#ffff00"/><rect x="11" y="4" width="1" height="1" fill="#000"/><rect x="12" y="4" width="2" height="1" fill="#ffff00"/><rect x="14" y="4" width="1" height="1" fill="#000"/><rect x="1" y="5" width="1" height="1" fill="#000"/><rect x="2" y="5" width="1" height="1" fill="#ffff00"/><rect x="3" y="5" width="1" height="1" fill="#000"/><rect x="4" y="5" width="2" height="1" fill="#ff0000"/><rect x="6" y="5" width="8" height="1" fill="#ffff00"/><rect x="14" y="5" width="1" height="1" fill="#000"/><rect x="0" y="6" width="1" height="1" fill="#000"/><rect x="1" y="6" width="4" height="1" fill="#ffff00"/><rect x="5" y="6" width="2" height="1" fill="#ff0000"/><rect x="7" y="6" width="5" height="1" fill="#ffff00"/><rect x="12" y="6" width="1" height="1" fill="#000"/><rect x="13" y="6" width="2" height="1" fill="#ffff00"/><rect x="15" y="6" width="1" height="1" fill="#000"/><rect x="0" y="7" width="1" height="1" fill="#000"/><rect x="1" y="7" width="1" height="1" fill="#ffff00"/><rect x="2" y="7" width="1" height="1" fill="#000"/><rect x="3" y="7" width="3" height="1" fill="#ffff00"/><rect x="6" y="7" width="2" height="1" fill="#ff0000"/><rect x="8" y="7" width="7" height="1" fill="#ffff00"/><rect x="15" y="7" width="1" height="1" fill="#000"/><rect x="0" y="8" width="1" height="1" fill="#000"/><rect x="1" y="8" width="6" height="1" fill="#ffff00"/><rect x="7" y="8" width="3" height="1" fill="#ff0000"/><rect x="10" y="8" width="5" height="1" fill="#ffff00"/><rect x="15" y="8" width="1" height="1" fill="#000"/><rect x="0" y="9" width="1" height="1" fill="#000"/><rect x="1" y="9" width="7" height="1" fill="#ffff00"/><rect x="8" y="9" width="3" height="1" fill="#ff0000"/><rect x="11" y="9" width="2" height="1" fill="#ffff00"/><rect x="13" y="9" width="1" height="1" fill="#000"/><rect x="14" y="9" width="1" height="1" fill="#ffff00"/><rect x="15" y="9" width="1" height="1" fill="#000"/><rect x="0" y="10" width="16" height="1" fill="#000"/><rect x="2" y="12" width="1" height="1" fill="#00ff00"/><rect x="13" y="12" width="1" height="1" fill="#00ff00"/><rect x="1" y="13" width="2" height="1" fill="#00ff00"/><rect x="13" y="13" width="2" height="1" fill="#00ff00"/><rect x="0" y="14" width="4" height="1" fill="#00ff00"/><rect x="4" y="14" width="2" height="1" fill="#0000ff"/><rect x="10" y="14" width="2" height="1" fill="#0000ff"/><rect x="12" y="14" width="4" height="1" fill="#00ff00"/><rect x="1" y="15" width="2" height="1" fill="#00ff00"/><rect x="13" y="15" width="2" height="1" fill="#00ff00"/><rect x="2" y="16" width="1" height="1" fill="#00ff00"/><rect x="13" y="16" width="1" height="1" fill="#00ff00"/></svg>
<svg style="left:144px;top:49px;" width="16" height="15" shape-rendering="crispEdges"><rect x="1" y="1" width="7" height="1" fill="#000"/><rect x="1" y="2" width="1" height="1" fill="#000"/><rect x="2" y="2" width="5" height="1" fill="#0000ff"/><rect x="7" y="2" width="1" height="1" fill="#000"/><rect x="9" y="2" width="1" height="1" fill="#000"/><rect x="1" y="3" width="1" height="1" fill="#000"/><rect x="2" y="3" width="5" height="1" fill="#0000ff"/><rect x="7" y="3" width="1" height="1" fill="#000"/><rect x="9" y="3" width="1" height="1" fill="#000"/><rect x="1" y="4" width="1" height="1" fill="#000"/><rect x="2" y="4" width="5" height="1" fill="#0000ff"/><rect x="7" y="4" width="1" height="1" fill="#000"/><rect x="9" y="4" width="1" height="1" fill="#000"/><rect x="1" y="5" width="7" height="1" fill="#000"/><rect x="9" y="5" width="2" height="1" fill="#000"/><rect x="7" y="6" width="8" height="1" fill="#000"/><rect x="1" y="7" width="5" height="1" fill="#fff"/><rect x="7" y="7" width="1" height="1" fill="#000"/><rect x="8" y="7" width="1" height="1" fill="#fff"/><rect x="9" y="7" width="5" height="1" fill="#00ffff"/><rect x="14" y="7" width="1" height="1" fill="#000"/><rect x="1" y="8" width="1" height="1" fill="#fff"/><rect x="2" y="8" width="1" height="1" fill="#00ff00"/><rect x="3" y="8" width="4" height="1" fill="#fff"/><rect x="7" y="8" width="1" height="1" fill="#000"/><rect x="8" y="8" width="1" height="1" fill="#fff"/><rect x="9" y="8" width="5" height="1" fill="#00ffff"/><rect x="14" y="8" width="1" height="1" fill="#000"/><rect x="2" y="9" width="1" height="1" fill="#000"/><rect x="7" y="9" width="1" height="1" fill="#000"/><rect x="8" y="9" width="1" height="1" fill="#fff"/><rect x="9" y="9" width="5" height="1" fill="#00ffff"/><rect x="14" y="9" width="1" height="1" fill="#000"/><rect x="2" y="10" width="2" height="1" fill="#000"/><rect x="7" y="10" width="8" height="1" fill="#000"/><rect x="3" y="11" width="1" height="1" fill="#000"/><rect x="2" y="12" width="1" height="1" fill="#000"/><rect x="3" y="12" width="2" height="1" fill="#ffff00"/><rect x="5" y="12" width="1" height="1" fill="#000"/><rect x="7" y="12" width="1" height="1" fill="#000"/><rect x="8" y="12" width="7" height="1" fill="#fff"/><rect x="15" y="12" width="1" height="1" fill="#000"/><rect x="1" y="13" width="1" height="1" fill="#000"/><rect x="2" y="13" width="4" height="1" fill="#ffff00"/><rect x="6" y="13" width="2" height="1" fill="#000"/><rect x="8" y="13" width="1" height="1" fill="#00ff00"/><rect x="9" y="13" width="6" height="1" fill="#fff"/><rect x="15" y="13" width="1" height="1" fill="#000"/><rect x="2" y="14" width="3" height="1" fill="#000"/><rect x="7" y="14" width="8" height="1" fill="#000"/></svg>
<svg style="left:213px;top:49px;" width="16" height="15" shape-rendering="crispEdges"><rect x="2" y="0" width="3" height="1" fill="#960096"/><rect x="9" y="0" width="3" height="1" fill="#960096"/><rect x="0" y="1" width="2" height="1" fill="#960096"/><rect x="2" y="1" width="10" height="1" fill="#ffff00"/><rect x="12" y="1" width="1" height="1" fill="#960096"/><rect x="0" y="2" width="1" height="1" fill="#960096"/><rect x="1" y="2" width="12" height="1" fill="#ffff00"/><rect x="13" y="2" width="1" height="1" fill="#ff00ff"/><rect x="0" y="3" width="1" height="1" fill="#960096"/><rect x="1" y="3" width="5" height="1" fill="#ffff00"/><rect x="6" y="3" width="7" height="1" fill="#960096"/><rect x="13" y="3" width="1" height="1" fill="#000096"/><rect x="0" y="4" width="1" height="1" fill="#960096"/><rect x="1" y="4" width="4" height="1" fill="#ffff00"/><rect x="5" y="4" width="1" height="1" fill="#960096"/><rect x="6" y="4" width="7" height="1" fill="#009696"/><rect x="13" y="4" width="3" height="1" fill="#000096"/><rect x="0" y="5" width="1" height="1" fill="#960096"/><rect x="1" y="5" width="5" height="1" fill="#ffff00"/><rect x="6" y="5" width="1" height="1" fill="#960096"/><rect x="7" y="5" width="5" height="1" fill="#009696"/><rect x="12" y="5" width="1" height="1" fill="#000096"/><rect x="13" y="5" width="2" height="1" fill="#ff0000"/><rect x="15" y="5" width="1" height="1" fill="#000096"/><rect x="0" y="6" width="1" height="1" fill="#960096"/><rect x="1" y="6" width="6" height="1" fill="#ffff00"/><rect x="7" y="6" width="2" height="1" fill="#960000"/><rect x="9" y="6" width="1" height="1" fill="#000096"/><rect x="10" y="6" width="5" height="1" fill="#ff0000"/><rect x="15" y="6" width="1" height="1" fill="#000096"/><rect x="0" y="7" width="1" height="1" fill="#960096"/><rect x="1" y="7" width="7" height="1" fill="#ffff00"/><rect x="8" y="7" width="2" height="1" fill="#960000"/><rect x="10" y="7" width="1" height="1" fill="#000096"/><rect x="11" y="7" width="4" height="1" fill="#ff0000"/><rect x="15" y="7" width="1" height="1" fill="#000096"/><rect x="0" y="8" width="1" height="1" fill="#960096"/><rect x="1" y="8" width="1" height="1" fill="#969600"/><rect x="2" y="8" width="1" height="1" fill="#960096"/><rect x="3" y="8" width="5" height="1" fill="#ffff00"/><rect x="8" y="8" width="2" height="1" fill="#960000"/><rect x="10" y="8" width="1" height="1" fill="#000096"/><rect x="11" y="8" width="4" height="1" fill="#ff0000"/><rect x="15" y="8" width="1" height="1" fill="#000096"/><rect x="0" y="9" width="1" height="1" fill="#960096"/><rect x="1" y="9" width="2" height="1" fill="#969600"/><rect x="3" y="9" width="1" height="1" fill="#960096"/><rect x="4" y="9" width="4" height="1" fill="#ffff00"/><rect x="8" y="9" width="2" height="1" fill="#960000"/><rect x="10" y="9" width="1" height="1" fill="#000096"/><rect x="11" y="9" width="4" height="1" fill="#ff0000"/><rect x="15" y="9" width="1" height="1" fill="#000096"/><rect x="0" y="10" width="1" height="1" fill="#960096"/><rect x="1" y="10" width="3" height="1" fill="#969600"/><rect x="4" y="10" width="4" height="1" fill="#960096"/><rect x="8" y="10" width="2" height="1" fill="#960000"/><rect x="10" y="10" width="1" height="1" fill="#000096"/><rect x="11" y="10" width="4" height="1" fill="#ff0000"/><rect x="15" y="10" width="1" height="1" fill="#000096"/><rect x="0" y="11" width="1" height="1" fill="#960096"/><rect x="1" y="11" width="6" height="1" fill="#969600"/><rect x="7" y="11" width="1" height="1" fill="#960096"/><rect x="8" y="11" width="2" height="1" fill="#960000"/><rect x="10" y="11" width="1" height="1" fill="#000096"/><rect x="11" y="11" width="3" height="1" fill="#ff0000"/><rect x="14" y="11" width="1" height="1" fill="#000096"/><rect x="1" y="12" width="1" height="1" fill="#960096"/><rect x="2" y="12" width="5" height="1" fill="#969600"/><rect x="7" y="12" width="1" height="1" fill="#960096"/><rect x="8" y="12" width="2" height="1" fill="#960000"/><rect x="10" y="12" width="1" height="1" fill="#000096"/><rect x="11" y="12" width="2" height="1" fill="#ff0000"/><rect x="13" y="12" width="1" height="1" fill="#000096"/><rect x="2" y="13" width="1" height="1" fill="#960096"/><rect x="3" y="13" width="4" height="1" fill="#969600"/><rect x="7" y="13" width="1" height="1" fill="#960096"/><rect x="8" y="13" width="2" height="1" fill="#960000"/><rect x="10" y="13" width="1" height="1" fill="#000096"/><rect x="11" y="13" width="1" height="1" fill="#ff0000"/><rect x="12" y="13" width="1" height="1" fill="#000096"/><rect x="4" y="14" width="4" height="1" fill="#960096"/><rect x="9" y="14" width="3" height="1" fill="#000096"/></svg>
<svg style="left:236px;top:49px;" width="16" height="16" shape-rendering="crispEdges"><rect x="5" y="0" width="6" height="1" fill="#000"/><rect x="3" y="1" width="1" height="1" fill="#000"/><rect x="4" y="1" width="1" height="1" fill="#009600"/><rect x="5" y="1" width="1" height="1" fill="#000"/><rect x="6" y="1" width="1" height="1" fill="#009600"/><rect x="7" y="1" width="1" height="1" fill="#000"/><rect x="8" y="1" width="1" height="1" fill="#009600"/><rect x="9" y="1" width="1" height="1" fill="#000"/><rect x="10" y="1" width="1" height="1" fill="#009600"/><rect x="11" y="1" width="2" height="1" fill="#000"/><rect x="2" y="2" width="1" height="1" fill="#000"/><rect x="3" y="2" width="1" height="1" fill="#009600"/><rect x="4" y="2" width="1" height="1" fill="#000"/><rect x="5" y="2" width="1" height="1" fill="#009600"/><rect x="6" y="2" width="1" height="1" fill="#000"/><rect x="7" y="2" width="1" height="1" fill="#009600"/><rect x="8" y="2" width="1" height="1" fill="#000"/><rect x="9" y="2" width="1" height="1" fill="#009600"/><rect x="10" y="2" width="1" height="1" fill="#000"/><rect x="11" y="2" width="1" height="1" fill="#00ffff"/><rect x="12" y="2" width="1" height="1" fill="#0000ff"/><rect x="13" y="2" width="1" height="1" fill="#000"/><rect x="1" y="3" width="1" height="1" fill="#000"/><rect x="2" y="3" width="1" height="1" fill="#009600"/><rect x="3" y="3" width="1" height="1" fill="#000"/><rect x="4" y="3" width="1" height="1" fill="#009600"/><rect x="5" y="3" width="1" height="1" fill="#000"/><rect x="6" y="3" width="1" height="1" fill="#009600"/><rect x="7" y="3" width="1" height="1" fill="#000"/><rect x="8" y="3" width="1" height="1" fill="#0000ff"/><rect x="9" y="3" width="1" height="1" fill="#00ffff"/><rect x="10" y="3" width="1" height="1" fill="#0000ff"/><rect x="11" y="3" width="1" height="1" fill="#00ffff"/><rect x="12" y="3" width="1" height="1" fill="#0000ff"/><rect x="13" y="3" width="1" height="1" fill="#00ffff"/><rect x="14" y="3" width="1" height="1" fill="#000"/><rect x="1" y="4" width="1" height="1" fill="#000"/><rect x="2" y="4" width="1" height="1" fill="#009600"/><rect x="3" y="4" width="1" height="1" fill="#000"/><rect x="4" y="4" width="1" height="1" fill="#009600"/><rect x="5" y="4" width="1" height="1" fill="#000"/><rect x="6" y="4" width="2" height="1" fill="#0000ff"/><rect x="8" y="4" width="1" height="1" fill="#00ffff"/><rect x="9" y="4" width="1" height="1" fill="#0000ff"/><rect x="10" y="4" width="1" height="1" fill="#00ffff"/><rect x="11" y="4" width="1" height="1" fill="#0000ff"/><rect x="12" y="4" width="1" height="1" fill="#00ffff"/><rect x="13" y="4" width="1" height="1" fill="#0000ff"/><rect x="14" y="4" width="1" height="1" fill="#000"/><rect x="0" y="5" width="1" height="1" fill="#000"/><rect x="1" y="5" width="1" height="1" fill="#00ffff"/><rect x="2" y="5" width="1" height="1" fill="#0000ff"/><rect x="3" y="5" width="1" height="1" fill="#000"/><rect x="4" y="5" width="1" height="1" fill="#009600"/><rect x="5" y="5" width="1" height="1" fill="#0000ff"/><rect x="6" y="5" width="1" height="1" fill="#00ffff"/><rect x="7" y="5" width="8" height="1" fill="#0000ff"/><rect x="15" y="5" width="1" height="1" fill="#000"/><rect x="0" y="6" width="1" height="1" fill="#000"/><rect x="1" y="6" width="1" height="1" fill="#0000ff"/><rect x="2" y="6" width="1" height="1" fill="#00ffff"/><rect x="3" y="6" width="2" height="1" fill="#0000ff"/><rect x="5" y="6" width="1" height="1" fill="#000"/><rect x="6" y="6" width="9" height="1" fill="#fff"/><rect x="15" y="6" width="1" height="1" fill="#000"/><rect x="0" y="7" width="1" height="1" fill="#000"/><rect x="1" y="7" width="1" height="1" fill="#00ffff"/><rect x="2" y="7" width="1" height="1" fill="#0000ff"/><rect x="3" y="7" width="1" height="1" fill="#00ffff"/><rect x="4" y="7" width="1" height="1" fill="#0000ff"/><rect x="5" y="7" width="1" height="1" fill="#000"/><rect x="6" y="7" width="1" height="1" fill="#fff"/><rect x="7" y="7" width="6" height="1" fill="#000"/><rect x="13" y="7" width="1" height="1" fill="#fff"/><rect x="14" y="7" width="1" height="1" fill="#000"/><rect x="0" y="8" width="1" height="1" fill="#000"/><rect x="1" y="8" width="1" height="1" fill="#0000ff"/><rect x="2" y="8" width="1" height="1" fill="#009600"/><rect x="3" y="8" width="1" height="1" fill="#000"/><rect x="4" y="8" width="1" height="1" fill="#009600"/><rect x="5" y="8" width="1" height="1" fill="#000"/><rect x="6" y="8" width="1" height="1" fill="#fff"/><rect x="7" y="8" width="1" height="1" fill="#000"/><rect x="8" y="8" width="1" height="1" fill="#00ffff"/><rect x="9" y="8" width="3" height="1" fill="#ff0000"/><rect x="12" y="8" width="1" height="1" fill="#000"/><rect x="13" y="8" width="1" height="1" fill="#fff"/><rect x="14" y="8" width="1" height="1" fill="#000"/><rect x="0" y="9" width="1" height="1" fill="#000"/><rect x="1" y="9" width="1" height="1" fill="#009600"/><rect x="2" y="9" width="1" height="1" fill="#000"/><rect x="3" y="9" width="1" height="1" fill="#009600"/><rect x="4" y="9" width="1" height="1" fill="#0000ff"/><rect x="5" y="9" width="1" height="1" fill="#000"/><rect x="6" y="9" width="1" height="1" fill="#fff"/><rect x="7" y="9" width="1" height="1" fill="#000"/><rect x="8" y="9" width="4" height="1" fill="#ff0000"/><rect x="12" y="9" width="1" height="1" fill="#000"/><rect x="13" y="9" width="1" height="1" fill="#fff"/><rect x="14" y="9" width="1" height="1" fill="#000"/><rect x="1" y="10" width="1" height="1" fill="#000"/><rect x="2" y="10" width="1" height="1" fill="#009600"/><rect x="3" y="10" width="1" height="1" fill="#000"/><rect x="4" y="10" width="1" height="1" fill="#009600"/><rect x="5" y="10" width="1" height="1" fill="#000"/><rect x="6" y="10" width="1" height="1" fill="#fff"/><rect x="7" y="10" width="1" height="1" fill="#000"/><rect x="8" y="10" width="4" height="1" fill="#ff0000"/><rect x="12" y="10" width="1" height="1" fill="#000"/><rect x="13" y="10" width="1" height="1" fill="#fff"/><rect x="14" y="10" width="1" height="1" fill="#000"/><rect x="1" y="11" width="2" height="1" fill="#000"/><rect x="3" y="11" width="1" height="1" fill="#009600"/><rect x="4" y="11" width="2" height="1" fill="#000"/><rect x="6" y="11" width="1" height="1" fill="#fff"/><rect x="7" y="11" width="6" height="1" fill="#000"/><rect x="13" y="11" width="1" height="1" fill="#fff"/><rect x="14" y="11" width="1" height="1" fill="#000"/><rect x="2" y="12" width="1" height="1" fill="#000"/><rect x="3" y="12" width="1" height="1" fill="#009600"/><rect x="4" y="12" width="1" height="1" fill="#0000ff"/><rect x="5" y="12" width="1" height="1" fill="#000"/><rect x="6" y="12" width="8" height="1" fill="#fff"/><rect x="14" y="12" width="1" height="1" fill="#000"/><rect x="3" y="13" width="1" height="1" fill="#000"/><rect x="4" y="13" width="1" height="1" fill="#0000ff"/><rect x="5" y="13" width="1" height="1" fill="#000"/><rect x="6" y="13" width="1" height="1" fill="#00ffff"/><rect x="7" y="13" width="8" height="1" fill="#fff"/><rect x="15" y="13" width="1" height="1" fill="#000"/><rect x="4" y="14" width="2" height="1" fill="#000"/><rect x="6" y="14" width="1" height="1" fill="#fff"/><rect x="7" y="14" width="1" height="1" fill="#009600"/><rect x="8" y="14" width="7" height="1" fill="#fff"/><rect x="15" y="14" width="1" height="1" fill="#000"/><rect x="6" y="15" width="9" height="1" fill="#000"/></svg>
<svg style="left:259px;top:49px;" width="17" height="17" shape-rendering="crispEdges"><rect x="2" y="1" width="12" height="1" fill="#0000ff"/><rect x="1" y="2" width="1" height="1" fill="#0000ff"/><rect x="2" y="2" width="1" height="1" fill="#fff"/><rect x="4" y="2" width="9" height="1" fill="#fff"/><rect x="13" y="2" width="1" height="1" fill="#0000ff"/><rect x="0" y="3" width="1" height="1" fill="#0000ff"/><rect x="1" y="3" width="8" height="1" fill="#fff"/><rect x="9" y="3" width="1" height="1" fill="#000"/><rect x="10" y="3" width="3" height="1" fill="#fff"/><rect x="13" y="3" width="1" height="1" fill="#0000ff"/><rect x="0" y="4" width="1" height="1" fill="#0000ff"/><rect x="1" y="4" width="7" height="1" fill="#fff"/><rect x="8" y="4" width="1" height="1" fill="#000"/><rect x="9" y="4" width="1" height="1" fill="#ffff00"/><rect x="10" y="4" width="1" height="1" fill="#000"/><rect x="11" y="4" width="2" height="1" fill="#fff"/><rect x="13" y="4" width="1" height="1" fill="#0000ff"/><rect x="0" y="5" width="1" height="1" fill="#0000ff"/><rect x="1" y="5" width="7" height="1" fill="#fff"/><rect x="8" y="5" width="1" height="1" fill="#000"/><rect x="9" y="5" width="1" height="1" fill="#ffff00"/><rect x="10" y="5" width="1" height="1" fill="#000"/><rect x="11" y="5" width="2" height="1" fill="#fff"/><rect x="13" y="5" width="1" height="1" fill="#0000ff"/><rect x="0" y="6" width="1" height="1" fill="#0000ff"/><rect x="1" y="6" width="6" height="1" fill="#fff"/><rect x="7" y="6" width="1" height="1" fill="#000"/><rect x="8" y="6" width="1" height="1" fill="#ffff00"/><rect x="9" y="6" width="1" height="1" fill="#ff0000"/><rect x="10" y="6" width="1" height="1" fill="#ffff00"/><rect x="11" y="6" width="1" height="1" fill="#000"/><rect x="12" y="6" width="1" height="1" fill="#fff"/><rect x="13" y="6" width="1" height="1" fill="#0000ff"/><rect x="0" y="7" width="1" height="1" fill="#0000ff"/><rect x="1" y="7" width="6" height="1" fill="#fff"/><rect x="7" y="7" width="1" height="1" fill="#000"/><rect x="8" y="7" width="1" height="1" fill="#ffff00"/><rect x="9" y="7" width="1" height="1" fill="#ff0000"/><rect x="10" y="7" width="1" height="1" fill="#ffff00"/><rect x="11" y="7" width="1" height="1" fill="#000"/><rect x="12" y="7" width="1" height="1" fill="#fff"/><rect x="13" y="7" width="1" height="1" fill="#0000ff"/><rect x="0" y="8" width="1" height="1" fill="#0000ff"/><rect x="1" y="8" width="5" height="1" fill="#fff"/><rect x="6" y="8" width="1" height="1" fill="#000"/><rect x="7" y="8" width="2" height="1" fill="#ffff00"/><rect x="9" y="8" width="1" height="1" fill="#ff0000"/><rect x="10" y="8" width="2" height="1" fill="#ffff00"/><rect x="12" y="8" width="1" height="1" fill="#000"/><rect x="13" y="8" width="1" height="1" fill="#0000ff"/><rect x="0" y="9" width="1" height="1" fill="#0000ff"/><rect x="1" y="9" width="5" height="1" fill="#fff"/><rect x="6" y="9" width="1" height="1" fill="#000"/><rect x="7" y="9" width="2" height="1" fill="#ffff00"/><rect x="9" y="9" width="1" height="1" fill="#ff0000"/><rect x="10" y="9" width="2" height="1" fill="#ffff00"/><rect x="12" y="9" width="1" height="1" fill="#000"/><rect x="13" y="9" width="1" height="1" fill="#0000ff"/><rect x="0" y="10" width="1" height="1" fill="#0000ff"/><rect x="1" y="10" width="4" height="1" fill="#fff"/><rect x="5" y="10" width="1" height="1" fill="#000"/><rect x="6" y="10" width="3" height="1" fill="#ffff00"/><rect x="9" y="10" width="1" height="1" fill="#ff0000"/><rect x="10" y="10" width="3" height="1" fill="#ffff00"/><rect x="13" y="10" width="2" height="1" fill="#000"/><rect x="0" y="11" width="1" height="1" fill="#0000ff"/><rect x="1" y="11" width="4" height="1" fill="#fff"/><rect x="5" y="11" width="1" height="1" fill="#000"/><rect x="6" y="11" width="8" height="1" fill="#ffff00"/><rect x="14" y="11" width="1" height="1" fill="#000"/><rect x="0" y="12" width="1" height="1" fill="#0000ff"/><rect x="1" y="12" width="3" height="1" fill="#fff"/><rect x="4" y="12" width="1" height="1" fill="#000"/><rect x="5" y="12" width="4" height="1" fill="#ffff00"/><rect x="9" y="12" width="1" height="1" fill="#ff0000"/><rect x="10" y="12" width="5" height="1" fill="#ffff00"/><rect x="15" y="12" width="1" height="1" fill="#000"/><rect x="0" y="13" width="1" height="1" fill="#0000ff"/><rect x="1" y="13" width="3" height="1" fill="#fff"/><rect x="4" y="13" width="1" height="1" fill="#000"/><rect x="5" y="13" width="10" height="1" fill="#ffff00"/><rect x="15" y="13" width="1" height="1" fill="#000"/><rect x="0" y="14" width="1" height="1" fill="#0000ff"/><rect x="1" y="14" width="2" height="1" fill="#fff"/><rect x="3" y="14" width="1" height="1" fill="#000"/><rect x="4" y="14" width="12" height="1" fill="#ffff00"/><rect x="16" y="14" width="1" height="1" fill="#000"/><rect x="0" y="15" width="1" height="1" fill="#0000ff"/><rect x="1" y="15" width="2" height="1" fill="#fff"/><rect x="3" y="15" width="14" height="1" fill="#000"/><rect x="0" y="16" width="13" height="1" fill="#0000ff"/></svg>
<svg style="left:290px;top:49px;" width="16" height="15" shape-rendering="crispEdges"><rect x="6" y="1" width="2" height="1" fill="#009600"/><rect x="2" y="2" width="5" height="1" fill="#009696"/><rect x="7" y="2" width="2" height="1" fill="#009600"/><rect x="1" y="3" width="2" height="1" fill="#009696"/><rect x="4" y="3" width="3" height="1" fill="#009696"/><rect x="7" y="3" width="5" height="1" fill="#000096"/><rect x="4" y="4" width="2" height="1" fill="#009696"/><rect x="6" y="4" width="1" height="1" fill="#000096"/><rect x="7" y="4" width="1" height="1" fill="#00ffff"/><rect x="8" y="4" width="1" height="1" fill="#fff"/><rect x="9" y="4" width="1" height="1" fill="#00ffff"/><rect x="10" y="4" width="1" height="1" fill="#fff"/><rect x="11" y="4" width="1" height="1" fill="#00ffff"/><rect x="12" y="4" width="1" height="1" fill="#000096"/><rect x="5" y="5" width="1" height="1" fill="#000096"/><rect x="6" y="5" width="1" height="1" fill="#fff"/><rect x="7" y="5" width="1" height="1" fill="#00ffff"/><rect x="8" y="5" width="1" height="1" fill="#fff"/><rect x="9" y="5" width="1" height="1" fill="#00ffff"/><rect x="10" y="5" width="1" height="1" fill="#fff"/><rect x="11" y="5" width="1" height="1" fill="#00ffff"/><rect x="12" y="5" width="1" height="1" fill="#fff"/><rect x="13" y="5" width="1" height="1" fill="#000096"/><rect x="4" y="6" width="1" height="1" fill="#000096"/><rect x="5" y="6" width="1" height="1" fill="#00ffff"/><rect x="6" y="6" width="1" height="1" fill="#fff"/><rect x="7" y="6" width="1" height="1" fill="#00ffff"/><rect x="8" y="6" width="1" height="1" fill="#fff"/><rect x="9" y="6" width="1" height="1" fill="#00ffff"/><rect x="10" y="6" width="1" height="1" fill="#fff"/><rect x="11" y="6" width="1" height="1" fill="#00ffff"/><rect x="12" y="6" width="1" height="1" fill="#fff"/><rect x="13" y="6" width="1" height="1" fill="#00ffff"/><rect x="14" y="6" width="1" height="1" fill="#000096"/><rect x="4" y="7" width="1" height="1" fill="#000096"/><rect x="5" y="7" width="1" height="1" fill="#fff"/><rect x="6" y="7" width="1" height="1" fill="#00ffff"/><rect x="7" y="7" width="1" height="1" fill="#fff"/><rect x="8" y="7" width="1" height="1" fill="#00ffff"/><rect x="9" y="7" width="1" height="1" fill="#fff"/><rect x="10" y="7" width="1" height="1" fill="#00ffff"/><rect x="11" y="7" width="1" height="1" fill="#fff"/><rect x="12" y="7" width="1" height="1" fill="#00ffff"/><rect x="13" y="7" width="1" height="1" fill="#fff"/><rect x="14" y="7" width="1" height="1" fill="#000096"/><rect x="4" y="8" width="1" height="1" fill="#000096"/><rect x="5" y="8" width="1" height="1" fill="#00ffff"/><rect x="6" y="8" width="1" height="1" fill="#fff"/><rect x="7" y="8" width="1" height="1" fill="#00ffff"/><rect x="8" y="8" width="1" height="1" fill="#fff"/><rect x="9" y="8" width="1" height="1" fill="#00ffff"/><rect x="10" y="8" width="1" height="1" fill="#fff"/><rect x="11" y="8" width="1" height="1" fill="#00ffff"/><rect x="12" y="8" width="1" height="1" fill="#fff"/><rect x="13" y="8" width="1" height="1" fill="#00ffff"/><rect x="14" y="8" width="1" height="1" fill="#000096"/><rect x="5" y="9" width="1" height="1" fill="#000096"/><rect x="6" y="9" width="1" height="1" fill="#fff"/><rect x="7" y="9" width="1" height="1" fill="#00ffff"/><rect x="8" y="9" width="1" height="1" fill="#fff"/><rect x="9" y="9" width="1" height="1" fill="#00ffff"/><rect x="10" y="9" width="1" height="1" fill="#fff"/><rect x="11" y="9" width="1" height="1" fill="#00ffff"/><rect x="12" y="9" width="1" height="1" fill="#fff"/><rect x="13" y="9" width="1" height="1" fill="#000096"/><rect x="4" y="10" width="1" height="1" fill="#960096"/><rect x="5" y="10" width="2" height="1" fill="#000096"/><rect x="7" y="10" width="1" height="1" fill="#00ffff"/><rect x="8" y="10" width="1" height="1" fill="#fff"/><rect x="9" y="10" width="1" height="1" fill="#00ffff"/><rect x="10" y="10" width="1" height="1" fill="#fff"/><rect x="11" y="10" width="1" height="1" fill="#00ffff"/><rect x="12" y="10" width="1" height="1" fill="#000096"/><rect x="3" y="11" width="2" height="1" fill="#960096"/><rect x="7" y="11" width="5" height="1" fill="#000096"/><rect x="12" y="11" width="1" height="1" fill="#ff0000"/><rect x="2" y="12" width="2" height="1" fill="#960096"/><rect x="11" y="12" width="3" height="1" fill="#ff0000"/><rect x="1" y="13" width="2" height="1" fill="#960096"/><rect x="10" y="13" width="5" height="1" fill="#ff0000"/><rect x="1" y="14" width="1" height="1" fill="#960096"/><rect x="9" y="14" width="7" height="1" fill="#ff0000"/></svg>
<svg style="left:321px;top:49px;" width="16" height="16" shape-rendering="crispEdges"><rect x="8" y="1" width="2" height="1" fill="#000"/><rect x="6" y="2" width="2" height="1" fill="#000"/><rect x="8" y="2" width="2" height="1" fill="#fff"/><rect x="10" y="2" width="2" height="1" fill="#000"/><rect x="4" y="3" width="2" height="1" fill="#000"/><rect x="6" y="3" width="3" height="1" fill="#fff"/><rect x="9" y="3" width="1" height="1" fill="#000"/><rect x="10" y="3" width="2" height="1" fill="#fff"/><rect x="12" y="3" width="2" height="1" fill="#000"/><rect x="2" y="4" width="2" height="1" fill="#000"/><rect x="4" y="4" width="5" height="1" fill="#fff"/><rect x="9" y="4" width="1" height="1" fill="#000"/><rect x="10" y="4" width="4" height="1" fill="#fff"/><rect x="14" y="4" width="1" height="1" fill="#000"/><rect x="0" y="5" width="2" height="1" fill="#000"/><rect x="2" y="5" width="7" height="1" fill="#fff"/><rect x="9" y="5" width="1" height="1" fill="#000"/><rect x="10" y="5" width="5" height="1" fill="#fff"/><rect x="15" y="5" width="1" height="1" fill="#000"/><rect x="0" y="6" width="1" height="1" fill="#000"/><rect x="1" y="6" width="1" height="1" fill="#009696"/><rect x="2" y="6" width="4" height="1" fill="#fff"/><rect x="6" y="6" width="2" height="1" fill="#000"/><rect x="8" y="6" width="2" height="1" fill="#ffff00"/><rect x="10" y="6" width="2" height="1" fill="#000"/><rect x="12" y="6" width="3" height="1" fill="#fff"/><rect x="15" y="6" width="1" height="1" fill="#000"/><rect x="0" y="7" width="1" height="1" fill="#000"/><rect x="1" y="7" width="2" height="1" fill="#009696"/><rect x="3" y="7" width="5" height="1" fill="#fff"/><rect x="8" y="7" width="1" height="1" fill="#000"/><rect x="9" y="7" width="5" height="1" fill="#fff"/><rect x="14" y="7" width="2" height="1" fill="#000"/><rect x="0" y="8" width="1" height="1" fill="#000"/><rect x="1" y="8" width="3" height="1" fill="#009696"/><rect x="4" y="8" width="9" height="1" fill="#fff"/><rect x="13" y="8" width="1" height="1" fill="#000"/><rect x="14" y="8" width="1" height="1" fill="#fff"/><rect x="15" y="8" width="1" height="1" fill="#000"/><rect x="1" y="9" width="1" height="1" fill="#000"/><rect x="2" y="9" width="3" height="1" fill="#009696"/><rect x="5" y="9" width="7" height="1" fill="#fff"/><rect x="12" y="9" width="1" height="1" fill="#000"/><rect x="13" y="9" width="2" height="1" fill="#fff"/><rect x="15" y="9" width="1" height="1" fill="#000"/><rect x="2" y="10" width="1" height="1" fill="#000"/><rect x="3" y="10" width="3" height="1" fill="#009696"/><rect x="6" y="10" width="5" height="1" fill="#fff"/><rect x="11" y="10" width="2" height="1" fill="#000"/><rect x="13" y="10" width="1" height="1" fill="#fff"/><rect x="14" y="10" width="1" height="1" fill="#000"/><rect x="3" y="11" width="1" height="1" fill="#000"/><rect x="4" y="11" width="3" height="1" fill="#009696"/><rect x="7" y="11" width="3" height="1" fill="#fff"/><rect x="10" y="11" width="1" height="1" fill="#000"/><rect x="11" y="11" width="2" height="1" fill="#fff"/><rect x="13" y="11" width="2" height="1" fill="#000"/><rect x="4" y="12" width="1" height="1" fill="#000"/><rect x="5" y="12" width="3" height="1" fill="#009696"/><rect x="8" y="12" width="1" height="1" fill="#fff"/><rect x="9" y="12" width="1" height="1" fill="#000"/><rect x="10" y="12" width="2" height="1" fill="#fff"/><rect x="12" y="12" width="1" height="1" fill="#000"/><rect x="13" y="12" width="1" height="1" fill="#fff"/><rect x="14" y="12" width="1" height="1" fill="#000"/><rect x="5" y="13" width="1" height="1" fill="#000"/><rect x="6" y="13" width="2" height="1" fill="#009696"/><rect x="8" y="13" width="1" height="1" fill="#000"/><rect x="9" y="13" width="2" height="1" fill="#fff"/><rect x="11" y="13" width="2" height="1" fill="#000"/><rect x="6" y="14" width="2" height="1" fill="#000"/><rect x="8" y="14" width="1" height="1" fill="#fff"/><rect x="9" y="14" width="2" height="1" fill="#000"/><rect x="7" y="15" width="2" height="1" fill="#000"/></svg>
<svg style="left:352px;top:49px;" width="16" height="15" shape-rendering="crispEdges"><rect x="5" y="1" width="6" height="1" fill="#969696"/><rect x="3" y="2" width="10" height="1" fill="#969696"/><rect x="2" y="3" width="2" height="1" fill="#969696"/><rect x="4" y="3" width="1" height="1" fill="#fff"/><rect x="11" y="3" width="3" height="1" fill="#969696"/><rect x="1" y="4" width="2" height="1" fill="#969696"/><rect x="3" y="4" width="1" height="1" fill="#fff"/><rect x="5" y="4" width="2" height="1" fill="#969696"/><rect x="9" y="4" width="2" height="1" fill="#969696"/><rect x="12" y="4" width="2" height="1" fill="#969696"/><rect x="14" y="4" width="1" height="1" fill="#fff"/><rect x="1" y="5" width="2" height="1" fill="#969696"/><rect x="5" y="5" width="6" height="1" fill="#969696"/><rect x="13" y="5" width="1" height="1" fill="#969696"/><rect x="14" y="5" width="1" height="1" fill="#fff"/><rect x="0" y="6" width="2" height="1" fill="#969696"/><rect x="6" y="6" width="4" height="1" fill="#969696"/><rect x="14" y="6" width="1" height="1" fill="#969696"/><rect x="15" y="6" width="1" height="1" fill="#fff"/><rect x="0" y="7" width="2" height="1" fill="#969696"/><rect x="7" y="7" width="2" height="1" fill="#969696"/><rect x="14" y="7" width="1" height="1" fill="#969696"/><rect x="15" y="7" width="1" height="1" fill="#fff"/><rect x="0" y="8" width="2" height="1" fill="#969696"/><rect x="6" y="8" width="4" height="1" fill="#969696"/><rect x="14" y="8" width="1" height="1" fill="#969696"/><rect x="15" y="8" width="1" height="1" fill="#fff"/><rect x="0" y="9" width="2" height="1" fill="#969696"/><rect x="5" y="9" width="2" height="1" fill="#969696"/><rect x="8" y="9" width="1" height="1" fill="#fff"/><rect x="9" y="9" width="2" height="1" fill="#969696"/><rect x="14" y="9" width="1" height="1" fill="#969696"/><rect x="15" y="9" width="1" height="1" fill="#fff"/><rect x="1" y="10" width="2" height="1" fill="#969696"/><rect x="4" y="10" width="2" height="1" fill="#969696"/><rect x="7" y="10" width="1" height="1" fill="#fff"/><rect x="10" y="10" width="2" height="1" fill="#969696"/><rect x="13" y="10" width="1" height="1" fill="#969696"/><rect x="14" y="10" width="1" height="1" fill="#fff"/><rect x="1" y="11" width="3" height="1" fill="#969696"/><rect x="4" y="11" width="1" height="1" fill="#fff"/><rect x="11" y="11" width="2" height="1" fill="#969696"/><rect x="13" y="11" width="2" height="1" fill="#fff"/><rect x="2" y="12" width="3" height="1" fill="#969696"/><rect x="5" y="12" width="1" height="1" fill="#fff"/><rect x="10" y="12" width="3" height="1" fill="#969696"/><rect x="13" y="12" width="1" height="1" fill="#fff"/><rect x="3" y="13" width="8" height="1" fill="#969696"/><rect x="11" y="13" width="2" height="1" fill="#fff"/><rect x="5" y="14" width="6" height="1" fill="#fff"/></svg>
<svg style="left:167px;top:49px" width="16" height="16" shape-rendering="crispEdges"><path d="M8.5 2.5 L2.5 7.5 L4.5 14.5 L12.5 14.5 L14.5 7.5 Z" fill="none" stroke="#000"/><rect x="7" y="1" width="3" height="3" fill="#00f" stroke="#fff" stroke-width="0"/><rect x="1" y="6" width="3" height="3" fill="#ff0"/><rect x="13" y="6" width="3" height="3" fill="#0f0"/><rect x="3" y="13" width="3" height="3" fill="#f00"/><rect x="11" y="13" width="3" height="3" fill="#960096"/><rect x="6" y="1" width="1" height="3" fill="#fff"/><rect x="0" y="6" width="1" height="3" fill="#fff"/><rect x="12" y="6" width="1" height="3" fill="#fff"/><rect x="2" y="13" width="1" height="3" fill="#fff"/><rect x="10" y="13" width="1" height="3" fill="#fff"/></svg>
<svg style="left:190px;top:49px" width="17" height="18" shape-rendering="crispEdges"><rect x="0" y="1" width="16" height="2" fill="#00f"/><rect x="0" y="4" width="16" height="2" fill="#00f"/><rect x="0" y="8" width="16" height="2" fill="#00f"/><rect x="0" y="11" width="16" height="2" fill="#00f"/><rect x="0" y="15" width="16" height="2" fill="#00f"/><path d="M1 16 L3 12 L4 13 L6 9 L8 12 L12 5 L16 5" fill="none" stroke="#ff0" stroke-width="1.5"/></svg>
<svg style="left:341px;top:506px;" width="16" height="12" shape-rendering="crispEdges"><rect x="4" y="0" width="8" height="1" fill="#000"/><rect x="3" y="1" width="1" height="1" fill="#000"/><rect x="4" y="1" width="7" height="1" fill="#fff"/><rect x="11" y="1" width="1" height="1" fill="#000"/><rect x="3" y="2" width="1" height="1" fill="#000"/><rect x="4" y="2" width="1" height="1" fill="#fff"/><rect x="5" y="2" width="5" height="1" fill="#000"/><rect x="10" y="2" width="1" height="1" fill="#fff"/><rect x="11" y="2" width="1" height="1" fill="#000"/><rect x="2" y="3" width="1" height="1" fill="#000"/><rect x="3" y="3" width="7" height="1" fill="#fff"/><rect x="10" y="3" width="1" height="1" fill="#000"/><rect x="2" y="4" width="1" height="1" fill="#000"/><rect x="3" y="4" width="1" height="1" fill="#fff"/><rect x="4" y="4" width="5" height="1" fill="#000"/><rect x="9" y="4" width="1" height="1" fill="#fff"/><rect x="10" y="4" width="3" height="1" fill="#000"/><rect x="1" y="5" width="10" height="1" fill="#000"/><rect x="11" y="5" width="1" height="1" fill="#fff"/><rect x="12" y="5" width="1" height="1" fill="#cccccc"/><rect x="13" y="5" width="1" height="1" fill="#000"/><rect x="0" y="6" width="1" height="1" fill="#000"/><rect x="1" y="6" width="10" height="1" fill="#fff"/><rect x="11" y="6" width="1" height="1" fill="#000"/><rect x="12" y="6" width="1" height="1" fill="#fff"/><rect x="13" y="6" width="1" height="1" fill="#000"/><rect x="0" y="7" width="12" height="1" fill="#000"/><rect x="12" y="7" width="1" height="1" fill="#cccccc"/><rect x="13" y="7" width="1" height="1" fill="#000"/><rect x="0" y="8" width="1" height="1" fill="#000"/><rect x="1" y="8" width="6" height="1" fill="#cccccc"/><rect x="7" y="8" width="2" height="1" fill="#ffff00"/><rect x="9" y="8" width="2" height="1" fill="#cccccc"/><rect x="11" y="8" width="1" height="1" fill="#000"/><rect x="12" y="8" width="1" height="1" fill="#fff"/><rect x="13" y="8" width="1" height="1" fill="#000"/><rect x="0" y="9" width="13" height="1" fill="#000"/><rect x="0" y="10" width="1" height="1" fill="#000"/><rect x="1" y="10" width="10" height="1" fill="#fff"/><rect x="11" y="10" width="2" height="1" fill="#000"/><rect x="1" y="11" width="11" height="1" fill="#000"/></svg>
<svg style="left:398px;top:507px;" width="16" height="11" shape-rendering="crispEdges"><rect x="4" y="0" width="1" height="1" fill="#000"/><rect x="4" y="1" width="1" height="1" fill="#000"/><rect x="7" y="1" width="2" height="1" fill="#000"/><rect x="4" y="2" width="1" height="1" fill="#000"/><rect x="8" y="2" width="2" height="1" fill="#000"/><rect x="4" y="3" width="1" height="1" fill="#000"/><rect x="9" y="3" width="2" height="1" fill="#000"/><rect x="12" y="3" width="1" height="1" fill="#000"/><rect x="4" y="4" width="1" height="1" fill="#000"/><rect x="10" y="4" width="3" height="1" fill="#000"/><rect x="4" y="5" width="1" height="1" fill="#000"/><rect x="9" y="5" width="4" height="1" fill="#000"/><rect x="4" y="6" width="1" height="1" fill="#000"/><rect x="4" y="7" width="1" height="1" fill="#000"/><rect x="3" y="8" width="2" height="1" fill="#ffff00"/><rect x="5" y="8" width="1" height="1" fill="#000"/><rect x="0" y="9" width="3" height="1" fill="#000"/><rect x="3" y="9" width="2" height="1" fill="#ffff00"/><rect x="5" y="9" width="11" height="1" fill="#000"/><rect x="3" y="10" width="2" height="1" fill="#ffff00"/></svg>
<svg style="left:512px;top:506px;" width="16" height="15" shape-rendering="crispEdges"><rect x="6" y="1" width="2" height="1" fill="#009600"/><rect x="2" y="2" width="5" height="1" fill="#009696"/><rect x="7" y="2" width="2" height="1" fill="#009600"/><rect x="1" y="3" width="2" height="1" fill="#009696"/><rect x="4" y="3" width="3" height="1" fill="#009696"/><rect x="7" y="3" width="5" height="1" fill="#000096"/><rect x="4" y="4" width="2" height="1" fill="#009696"/><rect x="6" y="4" width="1" height="1" fill="#000096"/><rect x="7" y="4" width="1" height="1" fill="#00ffff"/><rect x="8" y="4" width="1" height="1" fill="#fff"/><rect x="9" y="4" width="1" height="1" fill="#00ffff"/><rect x="10" y="4" width="1" height="1" fill="#fff"/><rect x="11" y="4" width="1" height="1" fill="#00ffff"/><rect x="12" y="4" width="1" height="1" fill="#000096"/><rect x="5" y="5" width="1" height="1" fill="#000096"/><rect x="6" y="5" width="1" height="1" fill="#fff"/><rect x="7" y="5" width="1" height="1" fill="#00ffff"/><rect x="8" y="5" width="1" height="1" fill="#fff"/><rect x="9" y="5" width="1" height="1" fill="#00ffff"/><rect x="10" y="5" width="1" height="1" fill="#fff"/><rect x="11" y="5" width="1" height="1" fill="#00ffff"/><rect x="12" y="5" width="1" height="1" fill="#fff"/><rect x="13" y="5" width="1" height="1" fill="#000096"/><rect x="4" y="6" width="1" height="1" fill="#000096"/><rect x="5" y="6" width="1" height="1" fill="#00ffff"/><rect x="6" y="6" width="1" height="1" fill="#fff"/><rect x="7" y="6" width="1" height="1" fill="#00ffff"/><rect x="8" y="6" width="1" height="1" fill="#fff"/><rect x="9" y="6" width="1" height="1" fill="#00ffff"/><rect x="10" y="6" width="1" height="1" fill="#fff"/><rect x="11" y="6" width="1" height="1" fill="#00ffff"/><rect x="12" y="6" width="1" height="1" fill="#fff"/><rect x="13" y="6" width="1" height="1" fill="#00ffff"/><rect x="14" y="6" width="1" height="1" fill="#000096"/><rect x="4" y="7" width="1" height="1" fill="#000096"/><rect x="5" y="7" width="1" height="1" fill="#fff"/><rect x="6" y="7" width="1" height="1" fill="#00ffff"/><rect x="7" y="7" width="1" height="1" fill="#fff"/><rect x="8" y="7" width="1" height="1" fill="#00ffff"/><rect x="9" y="7" width="1" height="1" fill="#fff"/><rect x="10" y="7" width="1" height="1" fill="#00ffff"/><rect x="11" y="7" width="1" height="1" fill="#fff"/><rect x="12" y="7" width="1" height="1" fill="#00ffff"/><rect x="13" y="7" width="1" height="1" fill="#fff"/><rect x="14" y="7" width="1" height="1" fill="#000096"/><rect x="4" y="8" width="1" height="1" fill="#000096"/><rect x="5" y="8" width="1" height="1" fill="#00ffff"/><rect x="6" y="8" width="1" height="1" fill="#fff"/><rect x="7" y="8" width="1" height="1" fill="#00ffff"/><rect x="8" y="8" width="1" height="1" fill="#fff"/><rect x="9" y="8" width="1" height="1" fill="#00ffff"/><rect x="10" y="8" width="1" height="1" fill="#fff"/><rect x="11" y="8" width="1" height="1" fill="#00ffff"/><rect x="12" y="8" width="1" height="1" fill="#fff"/><rect x="13" y="8" width="1" height="1" fill="#00ffff"/><rect x="14" y="8" width="1" height="1" fill="#000096"/><rect x="5" y="9" width="1" height="1" fill="#000096"/><rect x="6" y="9" width="1" height="1" fill="#fff"/><rect x="7" y="9" width="1" height="1" fill="#00ffff"/><rect x="8" y="9" width="1" height="1" fill="#fff"/><rect x="9" y="9" width="1" height="1" fill="#00ffff"/><rect x="10" y="9" width="1" height="1" fill="#fff"/><rect x="11" y="9" width="1" height="1" fill="#00ffff"/><rect x="12" y="9" width="1" height="1" fill="#fff"/><rect x="13" y="9" width="1" height="1" fill="#000096"/><rect x="4" y="10" width="1" height="1" fill="#960096"/><rect x="5" y="10" width="2" height="1" fill="#000096"/><rect x="7" y="10" width="1" height="1" fill="#00ffff"/><rect x="8" y="10" width="1" height="1" fill="#fff"/><rect x="9" y="10" width="1" height="1" fill="#00ffff"/><rect x="10" y="10" width="1" height="1" fill="#fff"/><rect x="11" y="10" width="1" height="1" fill="#00ffff"/><rect x="12" y="10" width="1" height="1" fill="#000096"/><rect x="3" y="11" width="2" height="1" fill="#960096"/><rect x="7" y="11" width="5" height="1" fill="#000096"/><rect x="12" y="11" width="1" height="1" fill="#ff0000"/><rect x="2" y="12" width="2" height="1" fill="#960096"/><rect x="11" y="12" width="3" height="1" fill="#ff0000"/><rect x="1" y="13" width="2" height="1" fill="#960096"/><rect x="10" y="13" width="5" height="1" fill="#ff0000"/><rect x="1" y="14" width="1" height="1" fill="#960096"/><rect x="9" y="14" width="7" height="1" fill="#ff0000"/></svg>
</body></html>
